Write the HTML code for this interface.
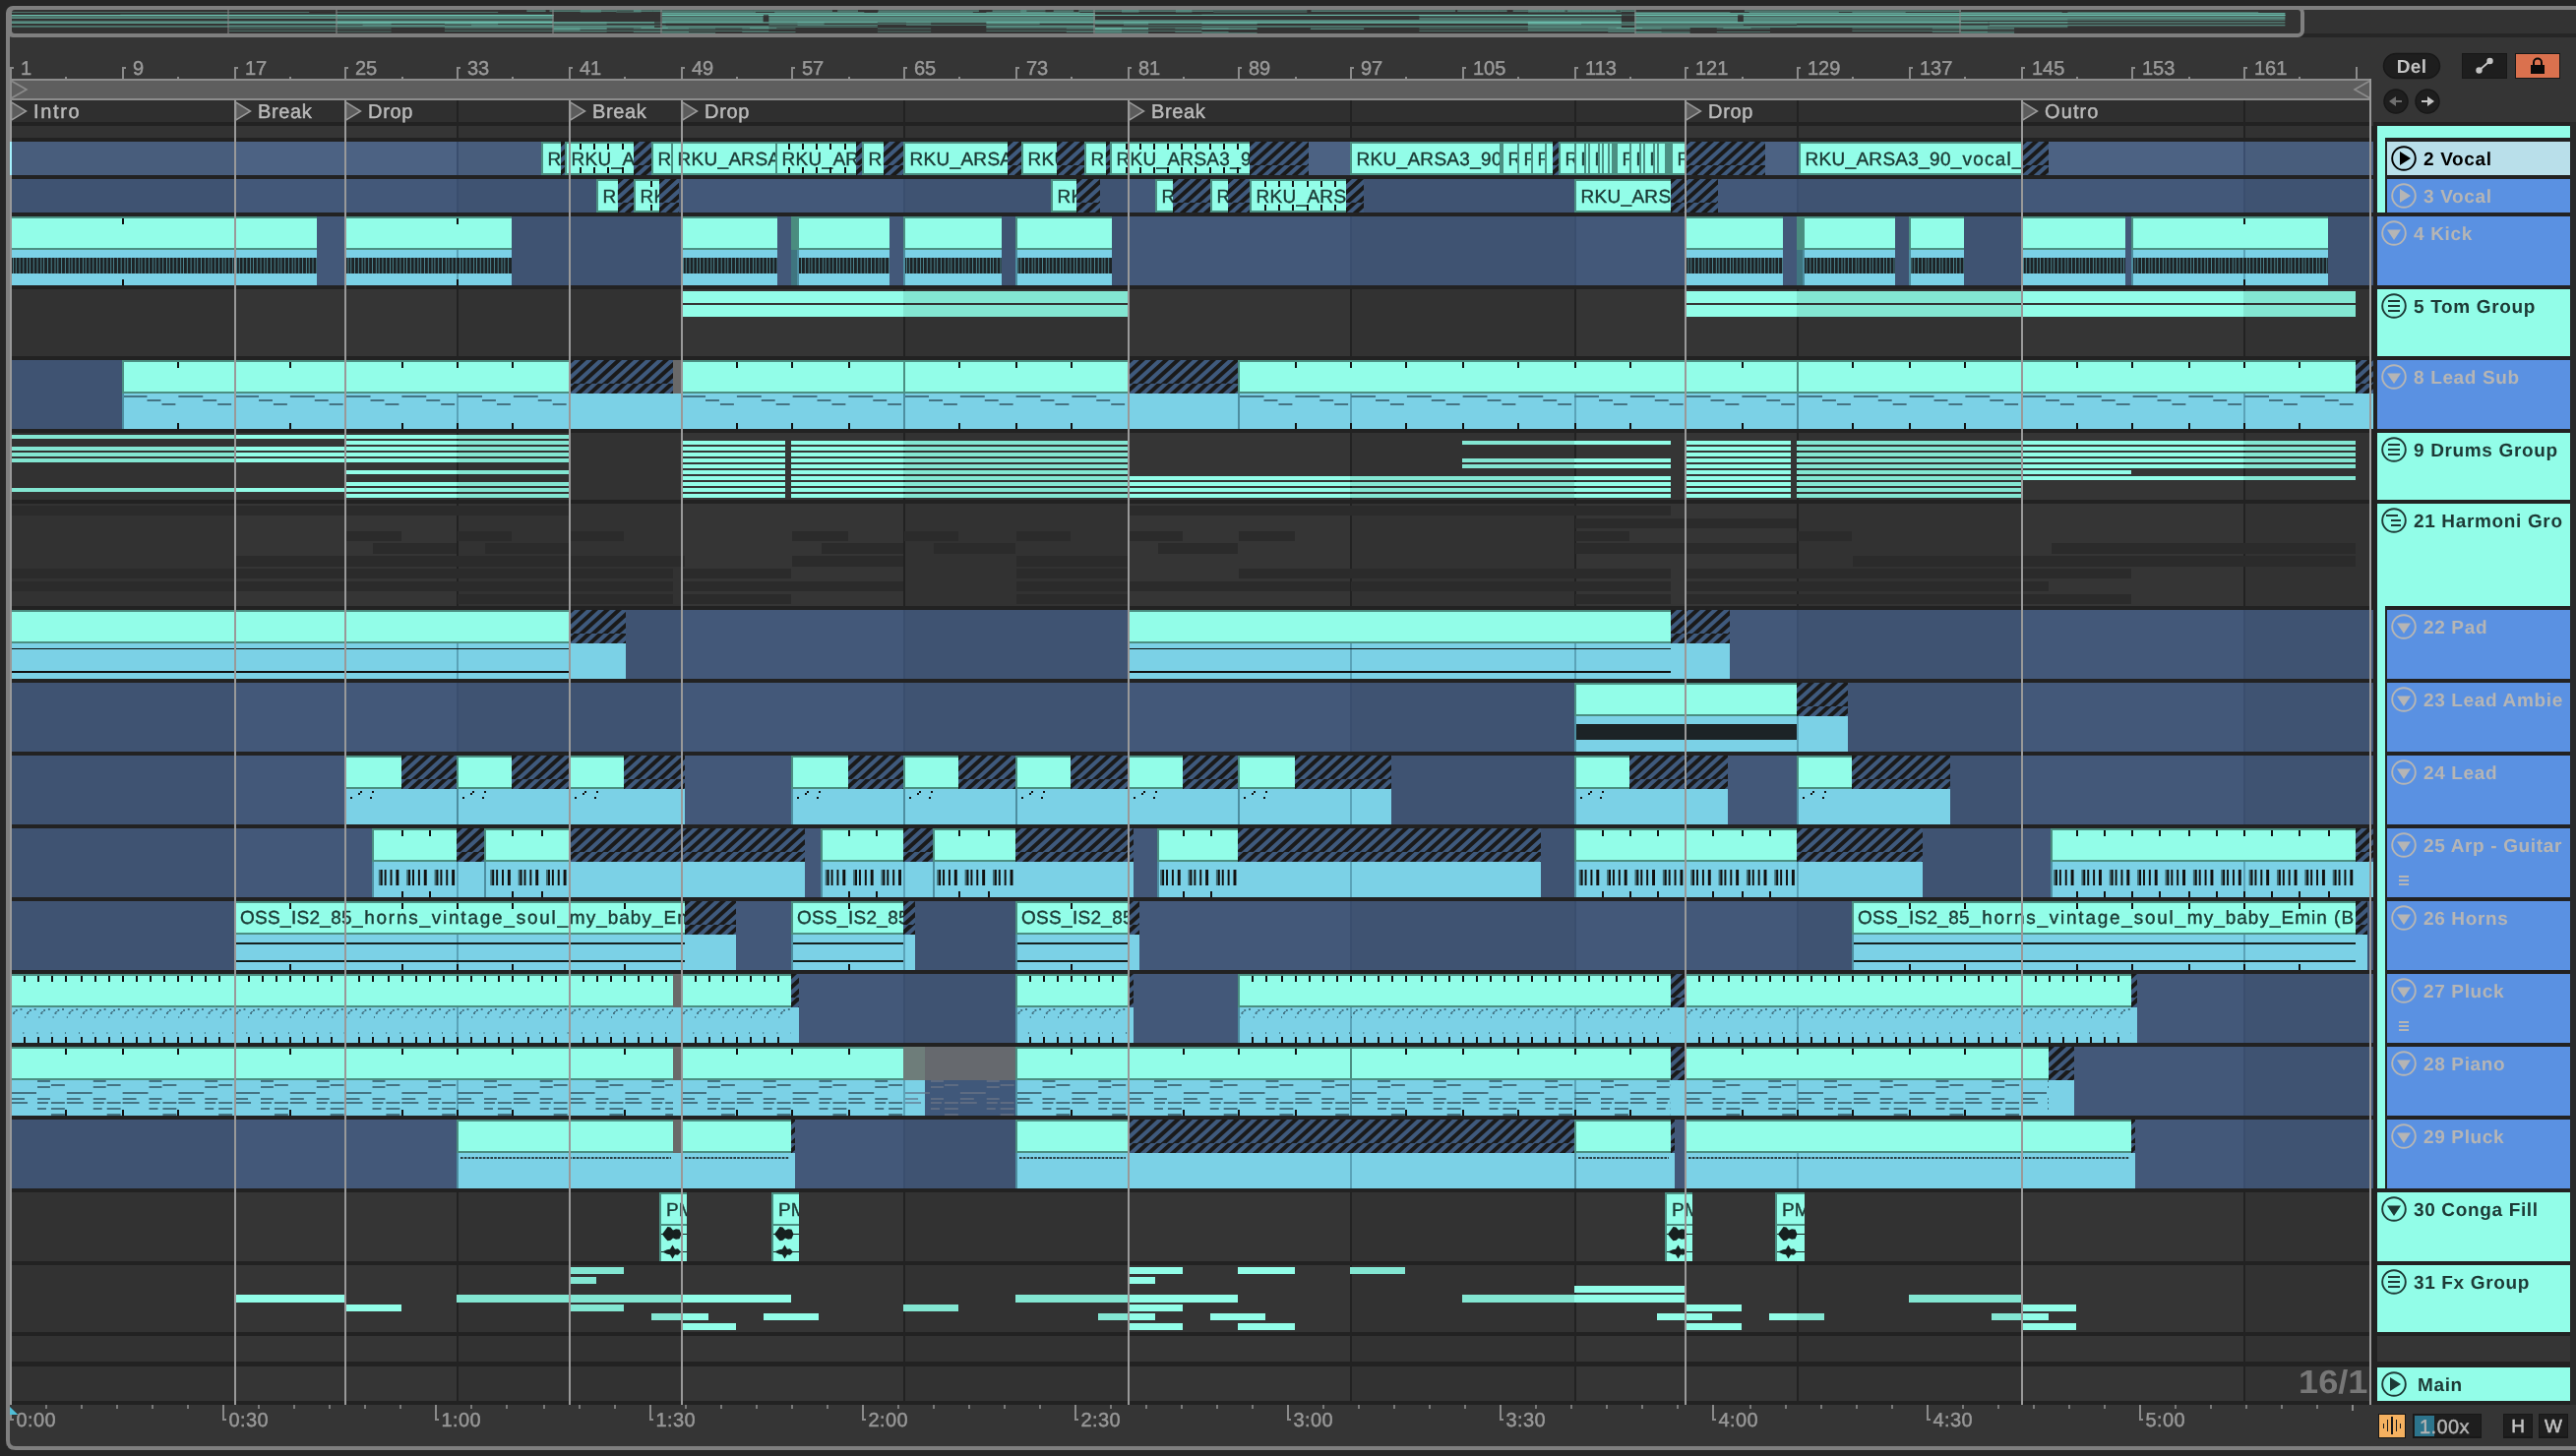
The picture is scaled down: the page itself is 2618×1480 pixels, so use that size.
<!DOCTYPE html><html><head><meta charset="utf-8"><title>Arrangement</title><style>html,body{margin:0;padding:0;background:#262626;overflow:hidden}svg{display:block;will-change:transform}rect:not(.a){shape-rendering:crispEdges}text{font-family:"Liberation Sans",sans-serif;white-space:pre}</style></head><body><svg xmlns="http://www.w3.org/2000/svg" width="2618" height="1480" viewBox="0 0 2618 1480" font-family="Liberation Sans, sans-serif" text-rendering="geometricPrecision"><defs><pattern id="hatch" width="12" height="34" patternUnits="userSpaceOnUse">
<rect width="12" height="34" fill="#3f5a7d"/><path d="M-12 0H-6L-32.18 24H-38.18ZM-6.3 24H-0.3000000000000007L-11.21 34H-17.21ZM0 0H6L-20.18 24H-26.18ZM5.7 24H11.7L0.79 34H-5.21ZM12 0H18L-8.18 24H-14.18ZM17.7 24H23.7L12.79 34H6.79ZM24 0H30L3.82 24H-2.18ZM29.7 24H35.7L24.79 34H18.79ZM36 0H42L15.82 24H9.82ZM41.7 24H47.7L36.79 34H30.79ZM48 0H54L27.82 24H21.82ZM53.7 24H59.7L48.79 34H42.79Z" fill="#1a1a1a"/></pattern><pattern id="kickp" x="10.124" y="262" width="14.18746" height="16" patternUnits="userSpaceOnUse"><rect width="14.18746" height="16" fill="#4c858f"/><rect x="0" y="0" width="2.5" height="16" fill="#1c2326"/><rect x="3.55" y="0" width="2.5" height="16" fill="#1c2326"/><rect x="7.09" y="0" width="2.5" height="16" fill="#1c2326"/><rect x="10.64" y="0" width="2.5" height="16" fill="#1c2326"/></pattern><pattern id="pluckp" x="10.124" y="1024" width="14.18746" height="36" patternUnits="userSpaceOnUse"><rect x="0.5" y="9" width="1.8" height="1.8" fill="#447484"/><rect x="2.5" y="5" width="1.8" height="1.8" fill="#447484"/><rect x="4" y="3.5" width="1.8" height="1.8" fill="#447484"/><rect x="5.5" y="2" width="1.8" height="1.8" fill="#447484"/><rect x="10.5" y="1" width="1.8" height="1.8" fill="#447484"/><rect x="13" y="25" width="2" height="2" fill="#447484"/></pattern><pattern id="pianop" x="10.124" y="1097" width="56.75" height="38" patternUnits="userSpaceOnUse"><rect x="28.0" y="1" width="13" height="1.8" fill="#447484"/><rect x="42.3" y="5" width="13.2" height="1.8" fill="#447484"/><rect x="28.0" y="7" width="13" height="1.8" fill="#447484"/><rect x="0.7" y="13" width="26.1" height="1.8" fill="#447484"/><rect x="0.7" y="19" width="13.9" height="1.8" fill="#447484"/><rect x="28.0" y="19" width="13" height="1.8" fill="#447484"/><rect x="0.7" y="23" width="17.7" height="1.8" fill="#447484"/><rect x="28.0" y="23" width="11.2" height="1.8" fill="#447484"/><rect x="42.3" y="23" width="13.2" height="1.8" fill="#447484"/><rect x="28.0" y="29" width="9" height="1.8" fill="#447484"/><rect x="42.3" y="29" width="13.2" height="1.8" fill="#447484"/><rect x="42.3" y="35" width="13.2" height="1.8" fill="#447484"/></pattern><pattern id="pianog" x="10.124" y="1097" width="56.75" height="38" patternUnits="userSpaceOnUse"><rect x="28.0" y="1" width="13" height="1.8" fill="#5d6b82"/><rect x="42.3" y="5" width="13.2" height="1.8" fill="#5d6b82"/><rect x="28.0" y="7" width="13" height="1.8" fill="#5d6b82"/><rect x="0.7" y="13" width="26.1" height="1.8" fill="#5d6b82"/><rect x="0.7" y="19" width="13.9" height="1.8" fill="#5d6b82"/><rect x="28.0" y="19" width="13" height="1.8" fill="#5d6b82"/><rect x="0.7" y="23" width="17.7" height="1.8" fill="#5d6b82"/><rect x="28.0" y="23" width="11.2" height="1.8" fill="#5d6b82"/><rect x="42.3" y="23" width="13.2" height="1.8" fill="#5d6b82"/><rect x="28.0" y="29" width="9" height="1.8" fill="#5d6b82"/><rect x="42.3" y="29" width="13.2" height="1.8" fill="#5d6b82"/><rect x="42.3" y="35" width="13.2" height="1.8" fill="#5d6b82"/></pattern><pattern id="lsp" x="10.124" y="400" width="56.75" height="36" patternUnits="userSpaceOnUse"><rect x="0.5" y="2.0" width="25.04" height="1.6" fill="#447484"/><rect x="26.25" y="6.2" width="13.48" height="1.6" fill="#447484"/><rect x="40.43" y="10.4" width="14.19" height="1.6" fill="#447484"/></pattern><pattern id="arpp" x="10.124" y="884" width="28.37" height="16" patternUnits="userSpaceOnUse"><rect x="5.9" y="0" width="1.7" height="16" fill="#3f6f78"/><rect x="7.6000000000000005" y="0" width="2" height="16" fill="#111"/><rect x="11.8" y="0" width="2.1" height="16" fill="#111"/><rect x="17.8" y="0" width="2.1" height="16" fill="#111"/><rect x="23.9" y="0" width="2.1" height="16" fill="#111"/></pattern><clipPath id="c1"><rect x="552" y="144" width="18" height="34"/></clipPath><clipPath id="c2"><rect x="576" y="144" width="68" height="34"/></clipPath><clipPath id="c3"><rect x="664" y="144" width="18" height="34"/></clipPath><clipPath id="c4"><rect x="684" y="144" width="104" height="34"/></clipPath><clipPath id="c5"><rect x="790" y="144" width="80" height="34"/></clipPath><clipPath id="c6"><rect x="878" y="144" width="20" height="34"/></clipPath><clipPath id="c7"><rect x="920" y="144" width="104" height="34"/></clipPath><clipPath id="c8"><rect x="1040" y="144" width="34" height="34"/></clipPath><clipPath id="c9"><rect x="1104" y="144" width="20" height="34"/></clipPath><clipPath id="c10"><rect x="1130" y="144" width="140" height="34"/></clipPath><clipPath id="c11"><rect x="1374" y="144" width="150" height="34"/></clipPath><clipPath id="c12"><rect x="1528" y="144" width="14" height="34"/></clipPath><clipPath id="c13"><rect x="1544" y="144" width="12" height="34"/></clipPath><clipPath id="c14"><rect x="1558" y="144" width="12" height="34"/></clipPath><clipPath id="c15"><rect x="1586" y="144" width="14" height="34"/></clipPath><clipPath id="c16"><rect x="1602" y="144" width="8" height="34"/></clipPath><clipPath id="c17"><rect x="1616" y="144" width="8" height="34"/></clipPath><clipPath id="c18"><rect x="1644" y="144" width="12" height="34"/></clipPath><clipPath id="c19"><rect x="1658" y="144" width="8" height="34"/></clipPath><clipPath id="c20"><rect x="1672" y="144" width="8" height="34"/></clipPath><clipPath id="c21"><rect x="1700" y="144" width="12" height="34"/></clipPath><clipPath id="c22"><rect x="1830" y="144" width="224" height="34"/></clipPath><clipPath id="c23"><rect x="608" y="182" width="20" height="34"/></clipPath><clipPath id="c24"><rect x="646" y="182" width="24" height="34"/></clipPath><clipPath id="c25"><rect x="1070" y="182" width="24" height="34"/></clipPath><clipPath id="c26"><rect x="1176" y="182" width="16" height="34"/></clipPath><clipPath id="c27"><rect x="1232" y="182" width="16" height="34"/></clipPath><clipPath id="c28"><rect x="1272" y="182" width="96" height="34"/></clipPath><clipPath id="c29"><rect x="1602" y="182" width="96" height="34"/></clipPath><clipPath id="c30"><rect x="240" y="916" width="456" height="34"/></clipPath><clipPath id="c31"><rect x="806" y="916" width="112" height="34"/></clipPath><clipPath id="c32"><rect x="1034" y="916" width="112" height="34"/></clipPath><clipPath id="c33"><rect x="1884" y="916" width="510" height="34"/></clipPath><clipPath id="c34"><rect x="672" y="1212" width="26" height="70"/></clipPath><clipPath id="c35"><rect x="786" y="1212" width="26" height="70"/></clipPath><clipPath id="c36"><rect x="1694" y="1212" width="26" height="70"/></clipPath><clipPath id="c37"><rect x="1806" y="1212" width="28" height="70"/></clipPath></defs><rect x="0" y="0" width="2618" height="1480" fill="#262626"/><rect x="10" y="34" width="2608" height="1436" fill="#353535"/><rect x="10" y="124" width="2402" height="1304" fill="#222222"/><rect x="10" y="128" width="2400" height="12" fill="#353535"/><rect x="10" y="144" width="2402" height="34" fill="#4c6283"/><rect x="10" y="182" width="2402" height="34" fill="#435879"/><rect x="10" y="220" width="2402" height="70" fill="#435879"/><rect x="10" y="294" width="2400" height="68" fill="#353535"/><rect x="10" y="366" width="2402" height="70" fill="#435879"/><rect x="10" y="440" width="2400" height="68" fill="#353535"/><rect x="10" y="512" width="2400" height="104" fill="#353535"/><rect x="10" y="620" width="2402" height="70" fill="#435879"/><rect x="10" y="694" width="2402" height="70" fill="#435879"/><rect x="10" y="768" width="2402" height="70" fill="#435879"/><rect x="10" y="842" width="2402" height="70" fill="#435879"/><rect x="10" y="916" width="2402" height="70" fill="#435879"/><rect x="10" y="990" width="2402" height="70" fill="#435879"/><rect x="10" y="1064" width="2402" height="70" fill="#435879"/><rect x="10" y="1138" width="2402" height="70" fill="#435879"/><rect x="10" y="1212" width="2400" height="70" fill="#353535"/><rect x="10" y="1286" width="2400" height="68" fill="#353535"/><rect x="10" y="1358" width="2400" height="26" fill="#353535"/><rect x="10" y="1389" width="2400" height="35" fill="#353535"/><rect x="10" y="128" width="228" height="1300" fill="#000" opacity="0.05"/><rect x="464" y="128" width="228" height="1300" fill="#000" opacity="0.05"/><rect x="918" y="128" width="228" height="1300" fill="#000" opacity="0.05"/><rect x="1372" y="128" width="228" height="1300" fill="#000" opacity="0.05"/><rect x="1826" y="128" width="228" height="1300" fill="#000" opacity="0.05"/><rect x="2280" y="128" width="130" height="1300" fill="#000" opacity="0.05"/><rect x="10" y="124" width="2402" height="4" fill="#222222"/><rect x="10" y="140" width="2402" height="4" fill="#222222"/><rect x="10" y="178" width="2402" height="4" fill="#222222"/><rect x="10" y="216" width="2402" height="4" fill="#222222"/><rect x="10" y="290" width="2402" height="4" fill="#222222"/><rect x="10" y="362" width="2402" height="4" fill="#222222"/><rect x="10" y="436" width="2402" height="4" fill="#222222"/><rect x="10" y="508" width="2402" height="4" fill="#222222"/><rect x="10" y="616" width="2402" height="4" fill="#222222"/><rect x="10" y="690" width="2402" height="4" fill="#222222"/><rect x="10" y="764" width="2402" height="4" fill="#222222"/><rect x="10" y="838" width="2402" height="4" fill="#222222"/><rect x="10" y="912" width="2402" height="4" fill="#222222"/><rect x="10" y="986" width="2402" height="4" fill="#222222"/><rect x="10" y="1060" width="2402" height="4" fill="#222222"/><rect x="10" y="1134" width="2402" height="4" fill="#222222"/><rect x="10" y="1208" width="2402" height="4" fill="#222222"/><rect x="10" y="1282" width="2402" height="4" fill="#222222"/><rect x="10" y="1354" width="2402" height="4" fill="#222222"/><rect x="10" y="1384" width="2402" height="5" fill="#222222"/><rect x="10" y="1424" width="2402" height="4" fill="#222222"/><rect x="464" y="128" width="2" height="12" fill="#222"/><rect x="464" y="144" width="2" height="34" fill="#3a4e6e"/><rect x="464" y="182" width="2" height="34" fill="#3a4e6e"/><rect x="464" y="220" width="2" height="70" fill="#3a4e6e"/><rect x="464" y="294" width="2" height="68" fill="#222"/><rect x="464" y="366" width="2" height="70" fill="#3a4e6e"/><rect x="464" y="440" width="2" height="68" fill="#222"/><rect x="464" y="512" width="2" height="104" fill="#222"/><rect x="464" y="620" width="2" height="70" fill="#3a4e6e"/><rect x="464" y="694" width="2" height="70" fill="#3a4e6e"/><rect x="464" y="768" width="2" height="70" fill="#3a4e6e"/><rect x="464" y="842" width="2" height="70" fill="#3a4e6e"/><rect x="464" y="916" width="2" height="70" fill="#3a4e6e"/><rect x="464" y="990" width="2" height="70" fill="#3a4e6e"/><rect x="464" y="1064" width="2" height="70" fill="#3a4e6e"/><rect x="464" y="1138" width="2" height="70" fill="#3a4e6e"/><rect x="464" y="1212" width="2" height="70" fill="#222"/><rect x="464" y="1286" width="2" height="68" fill="#222"/><rect x="464" y="1358" width="2" height="26" fill="#222"/><rect x="464" y="1389" width="2" height="35" fill="#222"/><rect x="918" y="128" width="2" height="12" fill="#222"/><rect x="918" y="144" width="2" height="34" fill="#3a4e6e"/><rect x="918" y="182" width="2" height="34" fill="#3a4e6e"/><rect x="918" y="220" width="2" height="70" fill="#3a4e6e"/><rect x="918" y="294" width="2" height="68" fill="#222"/><rect x="918" y="366" width="2" height="70" fill="#3a4e6e"/><rect x="918" y="440" width="2" height="68" fill="#222"/><rect x="918" y="512" width="2" height="104" fill="#222"/><rect x="918" y="620" width="2" height="70" fill="#3a4e6e"/><rect x="918" y="694" width="2" height="70" fill="#3a4e6e"/><rect x="918" y="768" width="2" height="70" fill="#3a4e6e"/><rect x="918" y="842" width="2" height="70" fill="#3a4e6e"/><rect x="918" y="916" width="2" height="70" fill="#3a4e6e"/><rect x="918" y="990" width="2" height="70" fill="#3a4e6e"/><rect x="918" y="1064" width="2" height="70" fill="#3a4e6e"/><rect x="918" y="1138" width="2" height="70" fill="#3a4e6e"/><rect x="918" y="1212" width="2" height="70" fill="#222"/><rect x="918" y="1286" width="2" height="68" fill="#222"/><rect x="918" y="1358" width="2" height="26" fill="#222"/><rect x="918" y="1389" width="2" height="35" fill="#222"/><rect x="1372" y="128" width="2" height="12" fill="#222"/><rect x="1372" y="144" width="2" height="34" fill="#3a4e6e"/><rect x="1372" y="182" width="2" height="34" fill="#3a4e6e"/><rect x="1372" y="220" width="2" height="70" fill="#3a4e6e"/><rect x="1372" y="294" width="2" height="68" fill="#222"/><rect x="1372" y="366" width="2" height="70" fill="#3a4e6e"/><rect x="1372" y="440" width="2" height="68" fill="#222"/><rect x="1372" y="512" width="2" height="104" fill="#222"/><rect x="1372" y="620" width="2" height="70" fill="#3a4e6e"/><rect x="1372" y="694" width="2" height="70" fill="#3a4e6e"/><rect x="1372" y="768" width="2" height="70" fill="#3a4e6e"/><rect x="1372" y="842" width="2" height="70" fill="#3a4e6e"/><rect x="1372" y="916" width="2" height="70" fill="#3a4e6e"/><rect x="1372" y="990" width="2" height="70" fill="#3a4e6e"/><rect x="1372" y="1064" width="2" height="70" fill="#3a4e6e"/><rect x="1372" y="1138" width="2" height="70" fill="#3a4e6e"/><rect x="1372" y="1212" width="2" height="70" fill="#222"/><rect x="1372" y="1286" width="2" height="68" fill="#222"/><rect x="1372" y="1358" width="2" height="26" fill="#222"/><rect x="1372" y="1389" width="2" height="35" fill="#222"/><rect x="1600" y="128" width="2" height="12" fill="#222"/><rect x="1600" y="144" width="2" height="34" fill="#3a4e6e"/><rect x="1600" y="182" width="2" height="34" fill="#3a4e6e"/><rect x="1600" y="220" width="2" height="70" fill="#3a4e6e"/><rect x="1600" y="294" width="2" height="68" fill="#222"/><rect x="1600" y="366" width="2" height="70" fill="#3a4e6e"/><rect x="1600" y="440" width="2" height="68" fill="#222"/><rect x="1600" y="512" width="2" height="104" fill="#222"/><rect x="1600" y="620" width="2" height="70" fill="#3a4e6e"/><rect x="1600" y="694" width="2" height="70" fill="#3a4e6e"/><rect x="1600" y="768" width="2" height="70" fill="#3a4e6e"/><rect x="1600" y="842" width="2" height="70" fill="#3a4e6e"/><rect x="1600" y="916" width="2" height="70" fill="#3a4e6e"/><rect x="1600" y="990" width="2" height="70" fill="#3a4e6e"/><rect x="1600" y="1064" width="2" height="70" fill="#3a4e6e"/><rect x="1600" y="1138" width="2" height="70" fill="#3a4e6e"/><rect x="1600" y="1212" width="2" height="70" fill="#222"/><rect x="1600" y="1286" width="2" height="68" fill="#222"/><rect x="1600" y="1358" width="2" height="26" fill="#222"/><rect x="1600" y="1389" width="2" height="35" fill="#222"/><rect x="1826" y="128" width="2" height="12" fill="#222"/><rect x="1826" y="144" width="2" height="34" fill="#3a4e6e"/><rect x="1826" y="182" width="2" height="34" fill="#3a4e6e"/><rect x="1826" y="220" width="2" height="70" fill="#3a4e6e"/><rect x="1826" y="294" width="2" height="68" fill="#222"/><rect x="1826" y="366" width="2" height="70" fill="#3a4e6e"/><rect x="1826" y="440" width="2" height="68" fill="#222"/><rect x="1826" y="512" width="2" height="104" fill="#222"/><rect x="1826" y="620" width="2" height="70" fill="#3a4e6e"/><rect x="1826" y="694" width="2" height="70" fill="#3a4e6e"/><rect x="1826" y="768" width="2" height="70" fill="#3a4e6e"/><rect x="1826" y="842" width="2" height="70" fill="#3a4e6e"/><rect x="1826" y="916" width="2" height="70" fill="#3a4e6e"/><rect x="1826" y="990" width="2" height="70" fill="#3a4e6e"/><rect x="1826" y="1064" width="2" height="70" fill="#3a4e6e"/><rect x="1826" y="1138" width="2" height="70" fill="#3a4e6e"/><rect x="1826" y="1212" width="2" height="70" fill="#222"/><rect x="1826" y="1286" width="2" height="68" fill="#222"/><rect x="1826" y="1358" width="2" height="26" fill="#222"/><rect x="1826" y="1389" width="2" height="35" fill="#222"/><rect x="2280" y="128" width="2" height="12" fill="#222"/><rect x="2280" y="144" width="2" height="34" fill="#3a4e6e"/><rect x="2280" y="182" width="2" height="34" fill="#3a4e6e"/><rect x="2280" y="220" width="2" height="70" fill="#3a4e6e"/><rect x="2280" y="294" width="2" height="68" fill="#222"/><rect x="2280" y="366" width="2" height="70" fill="#3a4e6e"/><rect x="2280" y="440" width="2" height="68" fill="#222"/><rect x="2280" y="512" width="2" height="104" fill="#222"/><rect x="2280" y="620" width="2" height="70" fill="#3a4e6e"/><rect x="2280" y="694" width="2" height="70" fill="#3a4e6e"/><rect x="2280" y="768" width="2" height="70" fill="#3a4e6e"/><rect x="2280" y="842" width="2" height="70" fill="#3a4e6e"/><rect x="2280" y="916" width="2" height="70" fill="#3a4e6e"/><rect x="2280" y="990" width="2" height="70" fill="#3a4e6e"/><rect x="2280" y="1064" width="2" height="70" fill="#3a4e6e"/><rect x="2280" y="1138" width="2" height="70" fill="#3a4e6e"/><rect x="2280" y="1212" width="2" height="70" fill="#222"/><rect x="2280" y="1286" width="2" height="68" fill="#222"/><rect x="2280" y="1358" width="2" height="26" fill="#222"/><rect x="2280" y="1389" width="2" height="35" fill="#222"/><rect x="692" y="296" width="454" height="12" fill="#92fde8"/><rect x="918" y="296" width="228" height="12" fill="#83e6d2"/><rect x="1712" y="296" width="682" height="12" fill="#92fde8"/><rect x="1826" y="296" width="228" height="12" fill="#83e6d2"/><rect x="2280" y="296" width="114" height="12" fill="#83e6d2"/><rect x="692" y="310" width="454" height="12" fill="#92fde8"/><rect x="918" y="310" width="228" height="12" fill="#83e6d2"/><rect x="1712" y="310" width="682" height="12" fill="#92fde8"/><rect x="1826" y="310" width="228" height="12" fill="#83e6d2"/><rect x="2280" y="310" width="114" height="12" fill="#83e6d2"/><rect x="10" y="442" width="340" height="4" fill="#92fde8"/><rect x="10" y="442" width="228" height="4" fill="#83e6d2"/><rect x="350" y="442" width="228" height="4" fill="#92fde8"/><rect x="464" y="442" width="114" height="4" fill="#83e6d2"/><rect x="350" y="448" width="228" height="4" fill="#92fde8"/><rect x="464" y="448" width="114" height="4" fill="#83e6d2"/><rect x="692" y="448" width="106" height="4" fill="#92fde8"/><rect x="804" y="448" width="342" height="4" fill="#92fde8"/><rect x="918" y="448" width="228" height="4" fill="#83e6d2"/><rect x="1486" y="448" width="212" height="4" fill="#92fde8"/><rect x="1486" y="448" width="114" height="4" fill="#83e6d2"/><rect x="1712" y="448" width="108" height="4" fill="#92fde8"/><rect x="1826" y="448" width="228" height="4" fill="#92fde8"/><rect x="1826" y="448" width="228" height="4" fill="#83e6d2"/><rect x="2054" y="448" width="340" height="4" fill="#92fde8"/><rect x="2280" y="448" width="114" height="4" fill="#83e6d2"/><rect x="10" y="454" width="340" height="4" fill="#92fde8"/><rect x="10" y="454" width="228" height="4" fill="#83e6d2"/><rect x="350" y="454" width="228" height="4" fill="#92fde8"/><rect x="464" y="454" width="114" height="4" fill="#83e6d2"/><rect x="692" y="454" width="106" height="4" fill="#92fde8"/><rect x="804" y="454" width="342" height="4" fill="#92fde8"/><rect x="918" y="454" width="228" height="4" fill="#83e6d2"/><rect x="1712" y="454" width="108" height="4" fill="#92fde8"/><rect x="1826" y="454" width="228" height="4" fill="#92fde8"/><rect x="1826" y="454" width="228" height="4" fill="#83e6d2"/><rect x="2054" y="454" width="340" height="4" fill="#92fde8"/><rect x="2280" y="454" width="114" height="4" fill="#83e6d2"/><rect x="10" y="460" width="340" height="4" fill="#92fde8"/><rect x="10" y="460" width="228" height="4" fill="#83e6d2"/><rect x="350" y="460" width="228" height="4" fill="#92fde8"/><rect x="464" y="460" width="114" height="4" fill="#83e6d2"/><rect x="692" y="460" width="106" height="4" fill="#92fde8"/><rect x="804" y="460" width="342" height="4" fill="#92fde8"/><rect x="918" y="460" width="228" height="4" fill="#83e6d2"/><rect x="1712" y="460" width="108" height="4" fill="#92fde8"/><rect x="1826" y="460" width="228" height="4" fill="#92fde8"/><rect x="1826" y="460" width="228" height="4" fill="#83e6d2"/><rect x="2054" y="460" width="340" height="4" fill="#92fde8"/><rect x="2280" y="460" width="114" height="4" fill="#83e6d2"/><rect x="10" y="466" width="340" height="4" fill="#92fde8"/><rect x="10" y="466" width="228" height="4" fill="#83e6d2"/><rect x="350" y="466" width="228" height="4" fill="#92fde8"/><rect x="464" y="466" width="114" height="4" fill="#83e6d2"/><rect x="692" y="466" width="106" height="4" fill="#92fde8"/><rect x="804" y="466" width="342" height="4" fill="#92fde8"/><rect x="918" y="466" width="228" height="4" fill="#83e6d2"/><rect x="1486" y="466" width="212" height="4" fill="#92fde8"/><rect x="1486" y="466" width="114" height="4" fill="#83e6d2"/><rect x="1712" y="466" width="108" height="4" fill="#92fde8"/><rect x="1826" y="466" width="228" height="4" fill="#92fde8"/><rect x="1826" y="466" width="228" height="4" fill="#83e6d2"/><rect x="2054" y="466" width="340" height="4" fill="#92fde8"/><rect x="2280" y="466" width="114" height="4" fill="#83e6d2"/><rect x="692" y="472" width="106" height="4" fill="#92fde8"/><rect x="804" y="472" width="342" height="4" fill="#92fde8"/><rect x="918" y="472" width="228" height="4" fill="#83e6d2"/><rect x="1486" y="472" width="212" height="4" fill="#92fde8"/><rect x="1486" y="472" width="114" height="4" fill="#83e6d2"/><rect x="1712" y="472" width="108" height="4" fill="#92fde8"/><rect x="1826" y="472" width="228" height="4" fill="#92fde8"/><rect x="1826" y="472" width="228" height="4" fill="#83e6d2"/><rect x="2054" y="472" width="340" height="4" fill="#92fde8"/><rect x="2280" y="472" width="114" height="4" fill="#83e6d2"/><rect x="350" y="478" width="228" height="4" fill="#92fde8"/><rect x="464" y="478" width="114" height="4" fill="#83e6d2"/><rect x="692" y="478" width="106" height="4" fill="#92fde8"/><rect x="804" y="478" width="342" height="4" fill="#92fde8"/><rect x="918" y="478" width="228" height="4" fill="#83e6d2"/><rect x="1712" y="478" width="108" height="4" fill="#92fde8"/><rect x="1826" y="478" width="228" height="4" fill="#92fde8"/><rect x="1826" y="478" width="228" height="4" fill="#83e6d2"/><rect x="2054" y="478" width="112" height="4" fill="#92fde8"/><rect x="692" y="484" width="106" height="4" fill="#92fde8"/><rect x="804" y="484" width="342" height="4" fill="#92fde8"/><rect x="918" y="484" width="228" height="4" fill="#83e6d2"/><rect x="1146" y="484" width="552" height="4" fill="#92fde8"/><rect x="1372" y="484" width="228" height="4" fill="#83e6d2"/><rect x="1712" y="484" width="108" height="4" fill="#92fde8"/><rect x="1826" y="484" width="228" height="4" fill="#92fde8"/><rect x="1826" y="484" width="228" height="4" fill="#83e6d2"/><rect x="2054" y="484" width="340" height="4" fill="#92fde8"/><rect x="2280" y="484" width="114" height="4" fill="#83e6d2"/><rect x="350" y="490" width="228" height="4" fill="#92fde8"/><rect x="464" y="490" width="114" height="4" fill="#83e6d2"/><rect x="692" y="490" width="106" height="4" fill="#92fde8"/><rect x="804" y="490" width="342" height="4" fill="#92fde8"/><rect x="918" y="490" width="228" height="4" fill="#83e6d2"/><rect x="1146" y="490" width="552" height="4" fill="#92fde8"/><rect x="1372" y="490" width="228" height="4" fill="#83e6d2"/><rect x="1712" y="490" width="108" height="4" fill="#92fde8"/><rect x="1826" y="490" width="228" height="4" fill="#92fde8"/><rect x="1826" y="490" width="228" height="4" fill="#83e6d2"/><rect x="10" y="496" width="340" height="4" fill="#92fde8"/><rect x="10" y="496" width="228" height="4" fill="#83e6d2"/><rect x="350" y="496" width="228" height="4" fill="#92fde8"/><rect x="464" y="496" width="114" height="4" fill="#83e6d2"/><rect x="692" y="496" width="106" height="4" fill="#92fde8"/><rect x="804" y="496" width="342" height="4" fill="#92fde8"/><rect x="918" y="496" width="228" height="4" fill="#83e6d2"/><rect x="1146" y="496" width="552" height="4" fill="#92fde8"/><rect x="1372" y="496" width="228" height="4" fill="#83e6d2"/><rect x="1712" y="496" width="108" height="4" fill="#92fde8"/><rect x="1826" y="496" width="228" height="4" fill="#92fde8"/><rect x="1826" y="496" width="228" height="4" fill="#83e6d2"/><rect x="350" y="502" width="228" height="4" fill="#92fde8"/><rect x="464" y="502" width="114" height="4" fill="#83e6d2"/><rect x="692" y="502" width="106" height="4" fill="#92fde8"/><rect x="804" y="502" width="342" height="4" fill="#92fde8"/><rect x="918" y="502" width="228" height="4" fill="#83e6d2"/><rect x="1146" y="502" width="552" height="4" fill="#92fde8"/><rect x="1372" y="502" width="228" height="4" fill="#83e6d2"/><rect x="1712" y="502" width="108" height="4" fill="#92fde8"/><rect x="1826" y="502" width="228" height="4" fill="#92fde8"/><rect x="1826" y="502" width="228" height="4" fill="#83e6d2"/><rect x="578" y="1288.2" width="56" height="7.2" fill="#92fde8"/><rect x="578" y="1288.2" width="56" height="7.2" fill="#83e6d2"/><rect x="1146" y="1288.2" width="56" height="7.2" fill="#92fde8"/><rect x="1258" y="1288.2" width="58" height="7.2" fill="#92fde8"/><rect x="1372" y="1288.2" width="56" height="7.2" fill="#92fde8"/><rect x="1372" y="1288.2" width="56" height="7.2" fill="#83e6d2"/><rect x="578" y="1297.6" width="28" height="7.2" fill="#92fde8"/><rect x="578" y="1297.6" width="28" height="7.2" fill="#83e6d2"/><rect x="1146" y="1297.6" width="28" height="7.2" fill="#92fde8"/><rect x="1600" y="1307" width="112" height="7.2" fill="#92fde8"/><rect x="238" y="1316.4" width="112" height="7.2" fill="#92fde8"/><rect x="464" y="1316.4" width="340" height="7.2" fill="#92fde8"/><rect x="464" y="1316.4" width="228" height="7.2" fill="#83e6d2"/><rect x="1032" y="1316.4" width="226" height="7.2" fill="#92fde8"/><rect x="1032" y="1316.4" width="114" height="7.2" fill="#83e6d2"/><rect x="1486" y="1316.4" width="226" height="7.2" fill="#92fde8"/><rect x="1486" y="1316.4" width="114" height="7.2" fill="#83e6d2"/><rect x="1940" y="1316.4" width="114" height="7.2" fill="#92fde8"/><rect x="1940" y="1316.4" width="114" height="7.2" fill="#83e6d2"/><rect x="350" y="1325.8" width="58" height="7.2" fill="#92fde8"/><rect x="578" y="1325.8" width="56" height="7.2" fill="#92fde8"/><rect x="578" y="1325.8" width="56" height="7.2" fill="#83e6d2"/><rect x="918" y="1325.8" width="56" height="7.2" fill="#92fde8"/><rect x="918" y="1325.8" width="56" height="7.2" fill="#83e6d2"/><rect x="1146" y="1325.8" width="56" height="7.2" fill="#92fde8"/><rect x="1712" y="1325.8" width="58" height="7.2" fill="#92fde8"/><rect x="2054" y="1325.8" width="56" height="7.2" fill="#92fde8"/><rect x="662" y="1335.2" width="58" height="7.2" fill="#92fde8"/><rect x="662" y="1335.2" width="30" height="7.2" fill="#83e6d2"/><rect x="776" y="1335.2" width="56" height="7.2" fill="#92fde8"/><rect x="1116" y="1335.2" width="58" height="7.2" fill="#92fde8"/><rect x="1116" y="1335.2" width="30" height="7.2" fill="#83e6d2"/><rect x="1230" y="1335.2" width="56" height="7.2" fill="#92fde8"/><rect x="1684" y="1335.2" width="56" height="7.2" fill="#92fde8"/><rect x="1798" y="1335.2" width="56" height="7.2" fill="#92fde8"/><rect x="1826" y="1335.2" width="28" height="7.2" fill="#83e6d2"/><rect x="2024" y="1335.2" width="58" height="7.2" fill="#92fde8"/><rect x="2024" y="1335.2" width="30" height="7.2" fill="#83e6d2"/><rect x="692" y="1344.6" width="56" height="7.2" fill="#92fde8"/><rect x="1146" y="1344.6" width="56" height="7.2" fill="#92fde8"/><rect x="1258" y="1344.6" width="58" height="7.2" fill="#92fde8"/><rect x="1712" y="1344.6" width="58" height="7.2" fill="#92fde8"/><rect x="2054" y="1344.6" width="56" height="7.2" fill="#92fde8"/><rect x="11" y="514" width="567" height="10.3" fill="#2b2b2b"/><rect x="1147" y="514" width="551" height="10.3" fill="#2b2b2b"/><rect x="1601" y="526.8" width="225" height="10.3" fill="#2b2b2b"/><rect x="351" y="539.6" width="57" height="10.3" fill="#2b2b2b"/><rect x="465" y="539.6" width="55" height="10.3" fill="#2b2b2b"/><rect x="579" y="539.6" width="55" height="10.3" fill="#2b2b2b"/><rect x="805" y="539.6" width="57" height="10.3" fill="#2b2b2b"/><rect x="919" y="539.6" width="55" height="10.3" fill="#2b2b2b"/><rect x="1033" y="539.6" width="55" height="10.3" fill="#2b2b2b"/><rect x="1147" y="539.6" width="55" height="10.3" fill="#2b2b2b"/><rect x="1259" y="539.6" width="57" height="10.3" fill="#2b2b2b"/><rect x="1601" y="539.6" width="55" height="10.3" fill="#2b2b2b"/><rect x="1827" y="539.6" width="55" height="10.3" fill="#2b2b2b"/><rect x="379" y="552.4" width="85" height="10.3" fill="#2b2b2b"/><rect x="493" y="552.4" width="85" height="10.3" fill="#2b2b2b"/><rect x="835" y="552.4" width="83" height="10.3" fill="#2b2b2b"/><rect x="949" y="552.4" width="83" height="10.3" fill="#2b2b2b"/><rect x="1177" y="552.4" width="81" height="10.3" fill="#2b2b2b"/><rect x="1601" y="552.4" width="225" height="10.3" fill="#2b2b2b"/><rect x="2085" y="552.4" width="309" height="10.3" fill="#2b2b2b"/><rect x="239" y="565.2" width="457" height="10.3" fill="#2b2b2b"/><rect x="805" y="565.2" width="113" height="10.3" fill="#2b2b2b"/><rect x="1033" y="565.2" width="113" height="10.3" fill="#2b2b2b"/><rect x="1883" y="565.2" width="511" height="10.3" fill="#2b2b2b"/><rect x="11" y="578" width="673" height="10.3" fill="#2b2b2b"/><rect x="693" y="578" width="111" height="10.3" fill="#2b2b2b"/><rect x="1033" y="578" width="113" height="10.3" fill="#2b2b2b"/><rect x="1259" y="578" width="439" height="10.3" fill="#2b2b2b"/><rect x="1713" y="578" width="453" height="10.3" fill="#2b2b2b"/><rect x="11" y="590.8" width="673" height="10.3" fill="#2b2b2b"/><rect x="693" y="590.8" width="225" height="10.3" fill="#2b2b2b"/><rect x="1033" y="590.8" width="339" height="10.3" fill="#2b2b2b"/><rect x="1373" y="590.8" width="325" height="10.3" fill="#2b2b2b"/><rect x="1713" y="590.8" width="369" height="10.3" fill="#2b2b2b"/><rect x="465" y="603.6" width="219" height="10.3" fill="#2b2b2b"/><rect x="693" y="603.6" width="111" height="10.3" fill="#2b2b2b"/><rect x="1033" y="603.6" width="113" height="10.3" fill="#2b2b2b"/><rect x="1601" y="603.6" width="97" height="10.3" fill="#2b2b2b"/><rect x="1713" y="603.6" width="453" height="10.3" fill="#2b2b2b"/><rect x="10" y="254" width="312" height="36" fill="#7bd1e6"/><rect x="350" y="254" width="170" height="36" fill="#7bd1e6"/><rect x="692" y="254" width="98" height="36" fill="#7bd1e6"/><rect x="810" y="254" width="94" height="36" fill="#7bd1e6"/><rect x="918" y="254" width="100" height="36" fill="#7bd1e6"/><rect x="1032" y="254" width="98" height="36" fill="#7bd1e6"/><rect x="1712" y="254" width="100" height="36" fill="#7bd1e6"/><rect x="1832" y="254" width="94" height="36" fill="#7bd1e6"/><rect x="1940" y="254" width="56" height="36" fill="#7bd1e6"/><rect x="2054" y="254" width="106" height="36" fill="#7bd1e6"/><rect x="2166" y="254" width="200" height="36" fill="#7bd1e6"/><rect x="464" y="254" width="2" height="36" fill="#5aa3b8"/><rect x="2280" y="254" width="2" height="36" fill="#5aa3b8"/><rect x="804" y="220" width="6" height="34" fill="#4a8c7f"/><rect x="804" y="254" width="6" height="36" fill="#3f7580"/><rect x="1826" y="220" width="6" height="34" fill="#4a8c7f"/><rect x="1826" y="254" width="6" height="36" fill="#3f7580"/><rect x="10" y="262" width="312" height="16" fill="url(#kickp)"/><rect x="350" y="262" width="170" height="16" fill="url(#kickp)"/><rect x="692" y="262" width="98" height="16" fill="url(#kickp)"/><rect x="810" y="262" width="94" height="16" fill="url(#kickp)"/><rect x="918" y="262" width="100" height="16" fill="url(#kickp)"/><rect x="1032" y="262" width="98" height="16" fill="url(#kickp)"/><rect x="1712" y="262" width="100" height="16" fill="url(#kickp)"/><rect x="1832" y="262" width="94" height="16" fill="url(#kickp)"/><rect x="1940" y="262" width="56" height="16" fill="url(#kickp)"/><rect x="2054" y="262" width="106" height="16" fill="url(#kickp)"/><rect x="2166" y="262" width="200" height="16" fill="url(#kickp)"/><rect x="10" y="220" width="312" height="34" fill="#4b8f82"/><rect x="12" y="222" width="310" height="30" fill="#92fde8"/><rect x="10" y="254" width="2" height="36" fill="#4d8ea0"/><rect x="124" y="222" width="2" height="6" fill="#111"/><rect x="124" y="284" width="2" height="6" fill="#111"/><rect x="350" y="220" width="170" height="34" fill="#4b8f82"/><rect x="352" y="222" width="168" height="30" fill="#92fde8"/><rect x="350" y="254" width="2" height="36" fill="#4d8ea0"/><rect x="464" y="222" width="2" height="6" fill="#111"/><rect x="464" y="284" width="2" height="6" fill="#111"/><rect x="692" y="220" width="98" height="34" fill="#4b8f82"/><rect x="694" y="222" width="96" height="30" fill="#92fde8"/><rect x="692" y="254" width="2" height="36" fill="#4d8ea0"/><rect x="810" y="220" width="94" height="34" fill="#4b8f82"/><rect x="812" y="222" width="92" height="30" fill="#92fde8"/><rect x="810" y="254" width="2" height="36" fill="#4d8ea0"/><rect x="918" y="220" width="100" height="34" fill="#4b8f82"/><rect x="920" y="222" width="98" height="30" fill="#92fde8"/><rect x="918" y="254" width="2" height="36" fill="#4d8ea0"/><rect x="1032" y="220" width="98" height="34" fill="#4b8f82"/><rect x="1034" y="222" width="96" height="30" fill="#92fde8"/><rect x="1032" y="254" width="2" height="36" fill="#4d8ea0"/><rect x="1712" y="220" width="100" height="34" fill="#4b8f82"/><rect x="1714" y="222" width="98" height="30" fill="#92fde8"/><rect x="1712" y="254" width="2" height="36" fill="#4d8ea0"/><rect x="1832" y="220" width="94" height="34" fill="#4b8f82"/><rect x="1834" y="222" width="92" height="30" fill="#92fde8"/><rect x="1832" y="254" width="2" height="36" fill="#4d8ea0"/><rect x="1940" y="220" width="56" height="34" fill="#4b8f82"/><rect x="1942" y="222" width="54" height="30" fill="#92fde8"/><rect x="1940" y="254" width="2" height="36" fill="#4d8ea0"/><rect x="2054" y="220" width="106" height="34" fill="#4b8f82"/><rect x="2056" y="222" width="104" height="30" fill="#92fde8"/><rect x="2054" y="254" width="2" height="36" fill="#4d8ea0"/><rect x="2166" y="220" width="200" height="34" fill="#4b8f82"/><rect x="2168" y="222" width="198" height="30" fill="#92fde8"/><rect x="2166" y="254" width="2" height="36" fill="#4d8ea0"/><rect x="2280" y="222" width="2" height="6" fill="#111"/><rect x="2280" y="284" width="2" height="6" fill="#111"/><rect x="124" y="400" width="2288" height="36" fill="#7bd1e6"/><rect x="464" y="400" width="2" height="36" fill="#5aa3b8"/><rect x="918" y="400" width="2" height="36" fill="#5aa3b8"/><rect x="1372" y="400" width="2" height="36" fill="#5aa3b8"/><rect x="1600" y="400" width="2" height="36" fill="#5aa3b8"/><rect x="1826" y="400" width="2" height="36" fill="#5aa3b8"/><rect x="2280" y="400" width="2" height="36" fill="#5aa3b8"/><svg x="578" y="366" width="106" height="34"><rect width="106" height="34" fill="url(#hatch)"/></svg><svg x="1146" y="366" width="112" height="34"><rect width="112" height="34" fill="url(#hatch)"/></svg><svg x="2394" y="366" width="18" height="34"><rect width="18" height="34" fill="url(#hatch)"/></svg><rect x="684" y="366" width="8" height="34" fill="#696969"/><rect x="126" y="400" width="452" height="36" fill="url(#lsp)"/><rect x="694" y="400" width="224" height="36" fill="url(#lsp)"/><rect x="920" y="400" width="226" height="36" fill="url(#lsp)"/><rect x="1260" y="400" width="566" height="36" fill="url(#lsp)"/><rect x="1828" y="400" width="566" height="36" fill="url(#lsp)"/><rect x="124" y="366" width="454" height="34" fill="#4b8f82"/><rect x="126" y="368" width="452" height="30" fill="#92fde8"/><rect x="124" y="400" width="2" height="36" fill="#4d8ea0"/><rect x="180" y="368" width="2" height="6" fill="#111"/><rect x="180" y="430" width="2" height="6" fill="#111"/><rect x="294" y="368" width="2" height="6" fill="#111"/><rect x="294" y="430" width="2" height="6" fill="#111"/><rect x="408" y="368" width="2" height="6" fill="#111"/><rect x="408" y="430" width="2" height="6" fill="#111"/><rect x="464" y="368" width="2" height="6" fill="#111"/><rect x="464" y="430" width="2" height="6" fill="#111"/><rect x="520" y="368" width="2" height="6" fill="#111"/><rect x="520" y="430" width="2" height="6" fill="#111"/><rect x="692" y="366" width="226" height="34" fill="#4b8f82"/><rect x="694" y="368" width="224" height="30" fill="#92fde8"/><rect x="692" y="400" width="2" height="36" fill="#4d8ea0"/><rect x="748" y="368" width="2" height="6" fill="#111"/><rect x="748" y="430" width="2" height="6" fill="#111"/><rect x="804" y="368" width="2" height="6" fill="#111"/><rect x="804" y="430" width="2" height="6" fill="#111"/><rect x="862" y="368" width="2" height="6" fill="#111"/><rect x="862" y="430" width="2" height="6" fill="#111"/><rect x="918" y="366" width="228" height="34" fill="#4b8f82"/><rect x="920" y="368" width="226" height="30" fill="#92fde8"/><rect x="918" y="400" width="2" height="36" fill="#4d8ea0"/><rect x="974" y="368" width="2" height="6" fill="#111"/><rect x="974" y="430" width="2" height="6" fill="#111"/><rect x="1032" y="368" width="2" height="6" fill="#111"/><rect x="1032" y="430" width="2" height="6" fill="#111"/><rect x="1088" y="368" width="2" height="6" fill="#111"/><rect x="1088" y="430" width="2" height="6" fill="#111"/><rect x="1258" y="366" width="568" height="34" fill="#4b8f82"/><rect x="1260" y="368" width="566" height="30" fill="#92fde8"/><rect x="1258" y="400" width="2" height="36" fill="#4d8ea0"/><rect x="1316" y="368" width="2" height="6" fill="#111"/><rect x="1316" y="430" width="2" height="6" fill="#111"/><rect x="1372" y="368" width="2" height="6" fill="#111"/><rect x="1372" y="430" width="2" height="6" fill="#111"/><rect x="1428" y="368" width="2" height="6" fill="#111"/><rect x="1428" y="430" width="2" height="6" fill="#111"/><rect x="1486" y="368" width="2" height="6" fill="#111"/><rect x="1486" y="430" width="2" height="6" fill="#111"/><rect x="1542" y="368" width="2" height="6" fill="#111"/><rect x="1542" y="430" width="2" height="6" fill="#111"/><rect x="1600" y="368" width="2" height="6" fill="#111"/><rect x="1600" y="430" width="2" height="6" fill="#111"/><rect x="1656" y="368" width="2" height="6" fill="#111"/><rect x="1656" y="430" width="2" height="6" fill="#111"/><rect x="1770" y="368" width="2" height="6" fill="#111"/><rect x="1770" y="430" width="2" height="6" fill="#111"/><rect x="1826" y="366" width="568" height="34" fill="#4b8f82"/><rect x="1828" y="368" width="566" height="30" fill="#92fde8"/><rect x="1826" y="400" width="2" height="36" fill="#4d8ea0"/><rect x="1882" y="368" width="2" height="6" fill="#111"/><rect x="1882" y="430" width="2" height="6" fill="#111"/><rect x="1940" y="368" width="2" height="6" fill="#111"/><rect x="1940" y="430" width="2" height="6" fill="#111"/><rect x="1996" y="368" width="2" height="6" fill="#111"/><rect x="1996" y="430" width="2" height="6" fill="#111"/><rect x="2110" y="368" width="2" height="6" fill="#111"/><rect x="2110" y="430" width="2" height="6" fill="#111"/><rect x="2166" y="368" width="2" height="6" fill="#111"/><rect x="2166" y="430" width="2" height="6" fill="#111"/><rect x="2224" y="368" width="2" height="6" fill="#111"/><rect x="2224" y="430" width="2" height="6" fill="#111"/><rect x="2280" y="368" width="2" height="6" fill="#111"/><rect x="2280" y="430" width="2" height="6" fill="#111"/><rect x="2336" y="368" width="2" height="6" fill="#111"/><rect x="2336" y="430" width="2" height="6" fill="#111"/><rect x="10" y="654" width="626" height="36" fill="#7bd1e6"/><rect x="1146" y="654" width="612" height="36" fill="#7bd1e6"/><rect x="464" y="654" width="2" height="36" fill="#5aa3b8"/><rect x="1372" y="654" width="2" height="36" fill="#5aa3b8"/><rect x="1600" y="654" width="2" height="36" fill="#5aa3b8"/><svg x="578" y="620" width="58" height="34"><rect width="58" height="34" fill="url(#hatch)"/></svg><svg x="1698" y="620" width="60" height="34"><rect width="60" height="34" fill="url(#hatch)"/></svg><rect x="10" y="658.5" width="568" height="1.7" fill="#111"/><rect x="10" y="681.8" width="568" height="1.7" fill="#111"/><rect x="1146" y="658.5" width="552" height="1.7" fill="#111"/><rect x="1146" y="681.8" width="552" height="1.7" fill="#111"/><rect x="10" y="620" width="568" height="34" fill="#4b8f82"/><rect x="12" y="622" width="566" height="30" fill="#92fde8"/><rect x="10" y="654" width="2" height="36" fill="#4d8ea0"/><rect x="1146" y="620" width="552" height="34" fill="#4b8f82"/><rect x="1148" y="622" width="550" height="30" fill="#92fde8"/><rect x="1146" y="654" width="2" height="36" fill="#4d8ea0"/><rect x="1600" y="728" width="278" height="36" fill="#7bd1e6"/><rect x="1826" y="728" width="2" height="36" fill="#5aa3b8"/><svg x="1826" y="694" width="52" height="34"><rect width="52" height="34" fill="url(#hatch)"/></svg><rect x="1601" y="736" width="225" height="16" fill="#1c2326"/><rect x="1600" y="694" width="226" height="34" fill="#4b8f82"/><rect x="1602" y="696" width="224" height="30" fill="#92fde8"/><rect x="1600" y="728" width="2" height="36" fill="#4d8ea0"/><rect x="350" y="802" width="346" height="36" fill="#7bd1e6"/><rect x="804" y="802" width="610" height="36" fill="#7bd1e6"/><rect x="1600" y="802" width="156" height="36" fill="#7bd1e6"/><rect x="1826" y="802" width="156" height="36" fill="#7bd1e6"/><rect x="464" y="802" width="2" height="36" fill="#5aa3b8"/><rect x="918" y="802" width="2" height="36" fill="#5aa3b8"/><rect x="1372" y="802" width="2" height="36" fill="#5aa3b8"/><svg x="408" y="768" width="56" height="34"><rect width="56" height="34" fill="url(#hatch)"/></svg><svg x="520" y="768" width="58" height="34"><rect width="58" height="34" fill="url(#hatch)"/></svg><svg x="634" y="768" width="62" height="34"><rect width="62" height="34" fill="url(#hatch)"/></svg><svg x="862" y="768" width="56" height="34"><rect width="56" height="34" fill="url(#hatch)"/></svg><svg x="974" y="768" width="58" height="34"><rect width="58" height="34" fill="url(#hatch)"/></svg><svg x="1088" y="768" width="58" height="34"><rect width="58" height="34" fill="url(#hatch)"/></svg><svg x="1202" y="768" width="56" height="34"><rect width="56" height="34" fill="url(#hatch)"/></svg><svg x="1316" y="768" width="98" height="34"><rect width="98" height="34" fill="url(#hatch)"/></svg><svg x="1656" y="768" width="100" height="34"><rect width="100" height="34" fill="url(#hatch)"/></svg><svg x="1882" y="768" width="100" height="34"><rect width="100" height="34" fill="url(#hatch)"/></svg><rect x="356" y="810" width="2" height="2" fill="#111"/><rect x="364" y="806" width="2" height="2" fill="#111"/><rect x="366" y="804" width="2" height="2" fill="#111"/><rect x="376" y="810" width="2" height="2" fill="#111"/><rect x="378" y="804" width="2" height="2" fill="#111"/><rect x="470" y="810" width="2" height="2" fill="#111"/><rect x="478" y="806" width="2" height="2" fill="#111"/><rect x="480" y="804" width="2" height="2" fill="#111"/><rect x="490" y="810" width="2" height="2" fill="#111"/><rect x="492" y="804" width="2" height="2" fill="#111"/><rect x="584" y="810" width="2" height="2" fill="#111"/><rect x="592" y="806" width="2" height="2" fill="#111"/><rect x="594" y="804" width="2" height="2" fill="#111"/><rect x="604" y="810" width="2" height="2" fill="#111"/><rect x="606" y="804" width="2" height="2" fill="#111"/><rect x="810" y="810" width="2" height="2" fill="#111"/><rect x="818" y="806" width="2" height="2" fill="#111"/><rect x="820" y="804" width="2" height="2" fill="#111"/><rect x="830" y="810" width="2" height="2" fill="#111"/><rect x="832" y="804" width="2" height="2" fill="#111"/><rect x="924" y="810" width="2" height="2" fill="#111"/><rect x="932" y="806" width="2" height="2" fill="#111"/><rect x="934" y="804" width="2" height="2" fill="#111"/><rect x="944" y="810" width="2" height="2" fill="#111"/><rect x="946" y="804" width="2" height="2" fill="#111"/><rect x="1038" y="810" width="2" height="2" fill="#111"/><rect x="1046" y="806" width="2" height="2" fill="#111"/><rect x="1048" y="804" width="2" height="2" fill="#111"/><rect x="1058" y="810" width="2" height="2" fill="#111"/><rect x="1060" y="804" width="2" height="2" fill="#111"/><rect x="1152" y="810" width="2" height="2" fill="#111"/><rect x="1160" y="806" width="2" height="2" fill="#111"/><rect x="1162" y="804" width="2" height="2" fill="#111"/><rect x="1172" y="810" width="2" height="2" fill="#111"/><rect x="1174" y="804" width="2" height="2" fill="#111"/><rect x="1264" y="810" width="2" height="2" fill="#111"/><rect x="1272" y="806" width="2" height="2" fill="#111"/><rect x="1274" y="804" width="2" height="2" fill="#111"/><rect x="1284" y="810" width="2" height="2" fill="#111"/><rect x="1286" y="804" width="2" height="2" fill="#111"/><rect x="1606" y="810" width="2" height="2" fill="#111"/><rect x="1614" y="806" width="2" height="2" fill="#111"/><rect x="1616" y="804" width="2" height="2" fill="#111"/><rect x="1626" y="810" width="2" height="2" fill="#111"/><rect x="1628" y="804" width="2" height="2" fill="#111"/><rect x="1832" y="810" width="2" height="2" fill="#111"/><rect x="1840" y="806" width="2" height="2" fill="#111"/><rect x="1842" y="804" width="2" height="2" fill="#111"/><rect x="1852" y="810" width="2" height="2" fill="#111"/><rect x="1854" y="804" width="2" height="2" fill="#111"/><rect x="350" y="768" width="58" height="34" fill="#4b8f82"/><rect x="352" y="770" width="56" height="30" fill="#92fde8"/><rect x="350" y="802" width="2" height="36" fill="#4d8ea0"/><rect x="464" y="768" width="56" height="34" fill="#4b8f82"/><rect x="466" y="770" width="54" height="30" fill="#92fde8"/><rect x="464" y="802" width="2" height="36" fill="#4d8ea0"/><rect x="578" y="768" width="56" height="34" fill="#4b8f82"/><rect x="580" y="770" width="54" height="30" fill="#92fde8"/><rect x="578" y="802" width="2" height="36" fill="#4d8ea0"/><rect x="804" y="768" width="58" height="34" fill="#4b8f82"/><rect x="806" y="770" width="56" height="30" fill="#92fde8"/><rect x="804" y="802" width="2" height="36" fill="#4d8ea0"/><rect x="918" y="768" width="56" height="34" fill="#4b8f82"/><rect x="920" y="770" width="54" height="30" fill="#92fde8"/><rect x="918" y="802" width="2" height="36" fill="#4d8ea0"/><rect x="1032" y="768" width="56" height="34" fill="#4b8f82"/><rect x="1034" y="770" width="54" height="30" fill="#92fde8"/><rect x="1032" y="802" width="2" height="36" fill="#4d8ea0"/><rect x="1146" y="768" width="56" height="34" fill="#4b8f82"/><rect x="1148" y="770" width="54" height="30" fill="#92fde8"/><rect x="1146" y="802" width="2" height="36" fill="#4d8ea0"/><rect x="1258" y="768" width="58" height="34" fill="#4b8f82"/><rect x="1260" y="770" width="56" height="30" fill="#92fde8"/><rect x="1258" y="802" width="2" height="36" fill="#4d8ea0"/><rect x="1600" y="768" width="56" height="34" fill="#4b8f82"/><rect x="1602" y="770" width="54" height="30" fill="#92fde8"/><rect x="1600" y="802" width="2" height="36" fill="#4d8ea0"/><rect x="1826" y="768" width="56" height="34" fill="#4b8f82"/><rect x="1828" y="770" width="54" height="30" fill="#92fde8"/><rect x="1826" y="802" width="2" height="36" fill="#4d8ea0"/><rect x="378" y="876" width="440" height="36" fill="#7bd1e6"/><rect x="834" y="876" width="318" height="36" fill="#7bd1e6"/><rect x="1176" y="876" width="390" height="36" fill="#7bd1e6"/><rect x="1600" y="876" width="354" height="36" fill="#7bd1e6"/><rect x="2084" y="876" width="328" height="36" fill="#7bd1e6"/><rect x="464" y="876" width="2" height="36" fill="#5aa3b8"/><rect x="918" y="876" width="2" height="36" fill="#5aa3b8"/><rect x="1372" y="876" width="2" height="36" fill="#5aa3b8"/><rect x="1826" y="876" width="2" height="36" fill="#5aa3b8"/><rect x="2280" y="876" width="2" height="36" fill="#5aa3b8"/><svg x="464" y="842" width="28" height="34"><rect width="28" height="34" fill="url(#hatch)"/></svg><svg x="578" y="842" width="240" height="34"><rect width="240" height="34" fill="url(#hatch)"/></svg><svg x="918" y="842" width="30" height="34"><rect width="30" height="34" fill="url(#hatch)"/></svg><svg x="1032" y="842" width="120" height="34"><rect width="120" height="34" fill="url(#hatch)"/></svg><svg x="1258" y="842" width="308" height="34"><rect width="308" height="34" fill="url(#hatch)"/></svg><svg x="1826" y="842" width="128" height="34"><rect width="128" height="34" fill="url(#hatch)"/></svg><svg x="2394" y="842" width="18" height="34"><rect width="18" height="34" fill="url(#hatch)"/></svg><rect x="381" y="884" width="82" height="16" fill="url(#arpp)"/><rect x="495" y="884" width="82" height="16" fill="url(#arpp)"/><rect x="837" y="884" width="80" height="16" fill="url(#arpp)"/><rect x="951" y="884" width="80" height="16" fill="url(#arpp)"/><rect x="1179" y="884" width="78" height="16" fill="url(#arpp)"/><rect x="1603" y="884" width="222" height="16" fill="url(#arpp)"/><rect x="2087" y="884" width="306" height="16" fill="url(#arpp)"/><rect x="378" y="842" width="86" height="34" fill="#4b8f82"/><rect x="380" y="844" width="84" height="30" fill="#92fde8"/><rect x="378" y="876" width="2" height="36" fill="#4d8ea0"/><rect x="408" y="844" width="2" height="6" fill="#111"/><rect x="408" y="906" width="2" height="6" fill="#111"/><rect x="436" y="844" width="2" height="6" fill="#111"/><rect x="436" y="906" width="2" height="6" fill="#111"/><rect x="492" y="842" width="86" height="34" fill="#4b8f82"/><rect x="494" y="844" width="84" height="30" fill="#92fde8"/><rect x="492" y="876" width="2" height="36" fill="#4d8ea0"/><rect x="520" y="844" width="2" height="6" fill="#111"/><rect x="520" y="906" width="2" height="6" fill="#111"/><rect x="550" y="844" width="2" height="6" fill="#111"/><rect x="550" y="906" width="2" height="6" fill="#111"/><rect x="834" y="842" width="84" height="34" fill="#4b8f82"/><rect x="836" y="844" width="82" height="30" fill="#92fde8"/><rect x="834" y="876" width="2" height="36" fill="#4d8ea0"/><rect x="862" y="844" width="2" height="6" fill="#111"/><rect x="862" y="906" width="2" height="6" fill="#111"/><rect x="890" y="844" width="2" height="6" fill="#111"/><rect x="890" y="906" width="2" height="6" fill="#111"/><rect x="948" y="842" width="84" height="34" fill="#4b8f82"/><rect x="950" y="844" width="82" height="30" fill="#92fde8"/><rect x="948" y="876" width="2" height="36" fill="#4d8ea0"/><rect x="974" y="844" width="2" height="6" fill="#111"/><rect x="974" y="906" width="2" height="6" fill="#111"/><rect x="1004" y="844" width="2" height="6" fill="#111"/><rect x="1004" y="906" width="2" height="6" fill="#111"/><rect x="1176" y="842" width="82" height="34" fill="#4b8f82"/><rect x="1178" y="844" width="80" height="30" fill="#92fde8"/><rect x="1176" y="876" width="2" height="36" fill="#4d8ea0"/><rect x="1202" y="844" width="2" height="6" fill="#111"/><rect x="1202" y="906" width="2" height="6" fill="#111"/><rect x="1230" y="844" width="2" height="6" fill="#111"/><rect x="1230" y="906" width="2" height="6" fill="#111"/><rect x="1600" y="842" width="226" height="34" fill="#4b8f82"/><rect x="1602" y="844" width="224" height="30" fill="#92fde8"/><rect x="1600" y="876" width="2" height="36" fill="#4d8ea0"/><rect x="1628" y="844" width="2" height="6" fill="#111"/><rect x="1628" y="906" width="2" height="6" fill="#111"/><rect x="1656" y="844" width="2" height="6" fill="#111"/><rect x="1656" y="906" width="2" height="6" fill="#111"/><rect x="1684" y="844" width="2" height="6" fill="#111"/><rect x="1684" y="906" width="2" height="6" fill="#111"/><rect x="1740" y="844" width="2" height="6" fill="#111"/><rect x="1740" y="906" width="2" height="6" fill="#111"/><rect x="1770" y="844" width="2" height="6" fill="#111"/><rect x="1770" y="906" width="2" height="6" fill="#111"/><rect x="1798" y="844" width="2" height="6" fill="#111"/><rect x="1798" y="906" width="2" height="6" fill="#111"/><rect x="2084" y="842" width="310" height="34" fill="#4b8f82"/><rect x="2086" y="844" width="308" height="30" fill="#92fde8"/><rect x="2084" y="876" width="2" height="36" fill="#4d8ea0"/><rect x="2110" y="844" width="2" height="6" fill="#111"/><rect x="2110" y="906" width="2" height="6" fill="#111"/><rect x="2138" y="844" width="2" height="6" fill="#111"/><rect x="2138" y="906" width="2" height="6" fill="#111"/><rect x="2166" y="844" width="2" height="6" fill="#111"/><rect x="2166" y="906" width="2" height="6" fill="#111"/><rect x="2194" y="844" width="2" height="6" fill="#111"/><rect x="2194" y="906" width="2" height="6" fill="#111"/><rect x="2224" y="844" width="2" height="6" fill="#111"/><rect x="2224" y="906" width="2" height="6" fill="#111"/><rect x="2252" y="844" width="2" height="6" fill="#111"/><rect x="2252" y="906" width="2" height="6" fill="#111"/><rect x="2280" y="844" width="2" height="6" fill="#111"/><rect x="2280" y="906" width="2" height="6" fill="#111"/><rect x="2308" y="844" width="2" height="6" fill="#111"/><rect x="2308" y="906" width="2" height="6" fill="#111"/><rect x="2336" y="844" width="2" height="6" fill="#111"/><rect x="2336" y="906" width="2" height="6" fill="#111"/><rect x="2366" y="844" width="2" height="6" fill="#111"/><rect x="2366" y="906" width="2" height="6" fill="#111"/><rect x="238" y="950" width="510" height="36" fill="#7bd1e6"/><rect x="804" y="950" width="126" height="36" fill="#7bd1e6"/><rect x="1032" y="950" width="126" height="36" fill="#7bd1e6"/><rect x="1882" y="950" width="524" height="36" fill="#7bd1e6"/><rect x="464" y="950" width="2" height="36" fill="#5aa3b8"/><rect x="918" y="950" width="2" height="36" fill="#5aa3b8"/><rect x="2280" y="950" width="2" height="36" fill="#5aa3b8"/><svg x="696" y="916" width="52" height="34"><rect width="52" height="34" fill="url(#hatch)"/></svg><svg x="918" y="916" width="12" height="34"><rect width="12" height="34" fill="url(#hatch)"/></svg><svg x="1146" y="916" width="12" height="34"><rect width="12" height="34" fill="url(#hatch)"/></svg><svg x="2394" y="916" width="12" height="34"><rect width="12" height="34" fill="url(#hatch)"/></svg><rect x="239" y="958" width="457" height="2" fill="#16201f"/><rect x="239" y="976" width="457" height="2" fill="#16201f"/><rect x="805" y="958" width="113" height="2" fill="#16201f"/><rect x="805" y="976" width="113" height="2" fill="#16201f"/><rect x="1033" y="958" width="113" height="2" fill="#16201f"/><rect x="1033" y="976" width="113" height="2" fill="#16201f"/><rect x="1883" y="958" width="511" height="2" fill="#16201f"/><rect x="1883" y="976" width="511" height="2" fill="#16201f"/><rect x="238" y="916" width="458" height="34" fill="#4b8f82"/><rect x="240" y="918" width="456" height="30" fill="#92fde8"/><rect x="238" y="950" width="2" height="36" fill="#4d8ea0"/><rect x="294" y="918" width="2" height="6" fill="#111"/><rect x="294" y="980" width="2" height="6" fill="#111"/><rect x="408" y="918" width="2" height="6" fill="#111"/><rect x="408" y="980" width="2" height="6" fill="#111"/><rect x="464" y="918" width="2" height="6" fill="#111"/><rect x="464" y="980" width="2" height="6" fill="#111"/><rect x="520" y="918" width="2" height="6" fill="#111"/><rect x="520" y="980" width="2" height="6" fill="#111"/><rect x="634" y="918" width="2" height="6" fill="#111"/><rect x="634" y="980" width="2" height="6" fill="#111"/><rect x="804" y="916" width="114" height="34" fill="#4b8f82"/><rect x="806" y="918" width="112" height="30" fill="#92fde8"/><rect x="804" y="950" width="2" height="36" fill="#4d8ea0"/><rect x="862" y="918" width="2" height="6" fill="#111"/><rect x="862" y="980" width="2" height="6" fill="#111"/><rect x="1032" y="916" width="114" height="34" fill="#4b8f82"/><rect x="1034" y="918" width="112" height="30" fill="#92fde8"/><rect x="1032" y="950" width="2" height="36" fill="#4d8ea0"/><rect x="1088" y="918" width="2" height="6" fill="#111"/><rect x="1088" y="980" width="2" height="6" fill="#111"/><rect x="1882" y="916" width="512" height="34" fill="#4b8f82"/><rect x="1884" y="918" width="510" height="30" fill="#92fde8"/><rect x="1882" y="950" width="2" height="36" fill="#4d8ea0"/><rect x="1940" y="918" width="2" height="6" fill="#111"/><rect x="1940" y="980" width="2" height="6" fill="#111"/><rect x="1996" y="918" width="2" height="6" fill="#111"/><rect x="1996" y="980" width="2" height="6" fill="#111"/><rect x="2110" y="918" width="2" height="6" fill="#111"/><rect x="2110" y="980" width="2" height="6" fill="#111"/><rect x="2166" y="918" width="2" height="6" fill="#111"/><rect x="2166" y="980" width="2" height="6" fill="#111"/><rect x="2224" y="918" width="2" height="6" fill="#111"/><rect x="2224" y="980" width="2" height="6" fill="#111"/><rect x="2280" y="918" width="2" height="6" fill="#111"/><rect x="2280" y="980" width="2" height="6" fill="#111"/><rect x="2336" y="918" width="2" height="6" fill="#111"/><rect x="2336" y="980" width="2" height="6" fill="#111"/><rect x="10" y="1024" width="802" height="36" fill="#7bd1e6"/><rect x="1032" y="1024" width="120" height="36" fill="#7bd1e6"/><rect x="1258" y="1024" width="914" height="36" fill="#7bd1e6"/><rect x="464" y="1024" width="2" height="36" fill="#5aa3b8"/><rect x="1372" y="1024" width="2" height="36" fill="#5aa3b8"/><rect x="1600" y="1024" width="2" height="36" fill="#5aa3b8"/><rect x="1826" y="1024" width="2" height="36" fill="#5aa3b8"/><svg x="804" y="990" width="8" height="34"><rect width="8" height="34" fill="url(#hatch)"/></svg><svg x="1146" y="990" width="6" height="34"><rect width="6" height="34" fill="url(#hatch)"/></svg><svg x="1698" y="990" width="14" height="34"><rect width="14" height="34" fill="url(#hatch)"/></svg><svg x="2166" y="990" width="6" height="34"><rect width="6" height="34" fill="url(#hatch)"/></svg><rect x="684" y="990" width="8" height="34" fill="#696969"/><rect x="12" y="1024" width="672" height="36" fill="url(#pluckp)"/><rect x="694" y="1024" width="110" height="36" fill="url(#pluckp)"/><rect x="1034" y="1024" width="112" height="36" fill="url(#pluckp)"/><rect x="1260" y="1024" width="438" height="36" fill="url(#pluckp)"/><rect x="1714" y="1024" width="452" height="36" fill="url(#pluckp)"/><rect x="10" y="990" width="674" height="34" fill="#4b8f82"/><rect x="12" y="992" width="672" height="30" fill="#92fde8"/><rect x="10" y="1024" width="2" height="36" fill="#4d8ea0"/><rect x="24" y="992" width="2" height="6" fill="#111"/><rect x="24" y="1054" width="2" height="6" fill="#111"/><rect x="38" y="992" width="2" height="6" fill="#111"/><rect x="38" y="1054" width="2" height="6" fill="#111"/><rect x="52" y="992" width="2" height="6" fill="#111"/><rect x="52" y="1054" width="2" height="6" fill="#111"/><rect x="66" y="992" width="2" height="6" fill="#111"/><rect x="66" y="1054" width="2" height="6" fill="#111"/><rect x="82" y="992" width="2" height="6" fill="#111"/><rect x="82" y="1054" width="2" height="6" fill="#111"/><rect x="96" y="992" width="2" height="6" fill="#111"/><rect x="96" y="1054" width="2" height="6" fill="#111"/><rect x="110" y="992" width="2" height="6" fill="#111"/><rect x="110" y="1054" width="2" height="6" fill="#111"/><rect x="124" y="992" width="2" height="6" fill="#111"/><rect x="124" y="1054" width="2" height="6" fill="#111"/><rect x="138" y="992" width="2" height="6" fill="#111"/><rect x="138" y="1054" width="2" height="6" fill="#111"/><rect x="152" y="992" width="2" height="6" fill="#111"/><rect x="152" y="1054" width="2" height="6" fill="#111"/><rect x="166" y="992" width="2" height="6" fill="#111"/><rect x="166" y="1054" width="2" height="6" fill="#111"/><rect x="180" y="992" width="2" height="6" fill="#111"/><rect x="180" y="1054" width="2" height="6" fill="#111"/><rect x="194" y="992" width="2" height="6" fill="#111"/><rect x="194" y="1054" width="2" height="6" fill="#111"/><rect x="208" y="992" width="2" height="6" fill="#111"/><rect x="208" y="1054" width="2" height="6" fill="#111"/><rect x="222" y="992" width="2" height="6" fill="#111"/><rect x="222" y="1054" width="2" height="6" fill="#111"/><rect x="252" y="992" width="2" height="6" fill="#111"/><rect x="252" y="1054" width="2" height="6" fill="#111"/><rect x="266" y="992" width="2" height="6" fill="#111"/><rect x="266" y="1054" width="2" height="6" fill="#111"/><rect x="280" y="992" width="2" height="6" fill="#111"/><rect x="280" y="1054" width="2" height="6" fill="#111"/><rect x="294" y="992" width="2" height="6" fill="#111"/><rect x="294" y="1054" width="2" height="6" fill="#111"/><rect x="308" y="992" width="2" height="6" fill="#111"/><rect x="308" y="1054" width="2" height="6" fill="#111"/><rect x="322" y="992" width="2" height="6" fill="#111"/><rect x="322" y="1054" width="2" height="6" fill="#111"/><rect x="336" y="992" width="2" height="6" fill="#111"/><rect x="336" y="1054" width="2" height="6" fill="#111"/><rect x="364" y="992" width="2" height="6" fill="#111"/><rect x="364" y="1054" width="2" height="6" fill="#111"/><rect x="378" y="992" width="2" height="6" fill="#111"/><rect x="378" y="1054" width="2" height="6" fill="#111"/><rect x="394" y="992" width="2" height="6" fill="#111"/><rect x="394" y="1054" width="2" height="6" fill="#111"/><rect x="408" y="992" width="2" height="6" fill="#111"/><rect x="408" y="1054" width="2" height="6" fill="#111"/><rect x="422" y="992" width="2" height="6" fill="#111"/><rect x="422" y="1054" width="2" height="6" fill="#111"/><rect x="436" y="992" width="2" height="6" fill="#111"/><rect x="436" y="1054" width="2" height="6" fill="#111"/><rect x="450" y="992" width="2" height="6" fill="#111"/><rect x="450" y="1054" width="2" height="6" fill="#111"/><rect x="464" y="992" width="2" height="6" fill="#111"/><rect x="464" y="1054" width="2" height="6" fill="#111"/><rect x="478" y="992" width="2" height="6" fill="#111"/><rect x="478" y="1054" width="2" height="6" fill="#111"/><rect x="492" y="992" width="2" height="6" fill="#111"/><rect x="492" y="1054" width="2" height="6" fill="#111"/><rect x="506" y="992" width="2" height="6" fill="#111"/><rect x="506" y="1054" width="2" height="6" fill="#111"/><rect x="520" y="992" width="2" height="6" fill="#111"/><rect x="520" y="1054" width="2" height="6" fill="#111"/><rect x="536" y="992" width="2" height="6" fill="#111"/><rect x="536" y="1054" width="2" height="6" fill="#111"/><rect x="550" y="992" width="2" height="6" fill="#111"/><rect x="550" y="1054" width="2" height="6" fill="#111"/><rect x="564" y="992" width="2" height="6" fill="#111"/><rect x="564" y="1054" width="2" height="6" fill="#111"/><rect x="592" y="992" width="2" height="6" fill="#111"/><rect x="592" y="1054" width="2" height="6" fill="#111"/><rect x="606" y="992" width="2" height="6" fill="#111"/><rect x="606" y="1054" width="2" height="6" fill="#111"/><rect x="620" y="992" width="2" height="6" fill="#111"/><rect x="620" y="1054" width="2" height="6" fill="#111"/><rect x="634" y="992" width="2" height="6" fill="#111"/><rect x="634" y="1054" width="2" height="6" fill="#111"/><rect x="648" y="992" width="2" height="6" fill="#111"/><rect x="648" y="1054" width="2" height="6" fill="#111"/><rect x="662" y="992" width="2" height="6" fill="#111"/><rect x="662" y="1054" width="2" height="6" fill="#111"/><rect x="676" y="992" width="2" height="6" fill="#111"/><rect x="676" y="1054" width="2" height="6" fill="#111"/><rect x="692" y="990" width="112" height="34" fill="#4b8f82"/><rect x="694" y="992" width="110" height="30" fill="#92fde8"/><rect x="692" y="1024" width="2" height="36" fill="#4d8ea0"/><rect x="706" y="992" width="2" height="6" fill="#111"/><rect x="706" y="1054" width="2" height="6" fill="#111"/><rect x="720" y="992" width="2" height="6" fill="#111"/><rect x="720" y="1054" width="2" height="6" fill="#111"/><rect x="734" y="992" width="2" height="6" fill="#111"/><rect x="734" y="1054" width="2" height="6" fill="#111"/><rect x="748" y="992" width="2" height="6" fill="#111"/><rect x="748" y="1054" width="2" height="6" fill="#111"/><rect x="762" y="992" width="2" height="6" fill="#111"/><rect x="762" y="1054" width="2" height="6" fill="#111"/><rect x="776" y="992" width="2" height="6" fill="#111"/><rect x="776" y="1054" width="2" height="6" fill="#111"/><rect x="790" y="992" width="2" height="6" fill="#111"/><rect x="790" y="1054" width="2" height="6" fill="#111"/><rect x="1032" y="990" width="114" height="34" fill="#4b8f82"/><rect x="1034" y="992" width="112" height="30" fill="#92fde8"/><rect x="1032" y="1024" width="2" height="36" fill="#4d8ea0"/><rect x="1046" y="992" width="2" height="6" fill="#111"/><rect x="1046" y="1054" width="2" height="6" fill="#111"/><rect x="1060" y="992" width="2" height="6" fill="#111"/><rect x="1060" y="1054" width="2" height="6" fill="#111"/><rect x="1074" y="992" width="2" height="6" fill="#111"/><rect x="1074" y="1054" width="2" height="6" fill="#111"/><rect x="1088" y="992" width="2" height="6" fill="#111"/><rect x="1088" y="1054" width="2" height="6" fill="#111"/><rect x="1102" y="992" width="2" height="6" fill="#111"/><rect x="1102" y="1054" width="2" height="6" fill="#111"/><rect x="1116" y="992" width="2" height="6" fill="#111"/><rect x="1116" y="1054" width="2" height="6" fill="#111"/><rect x="1130" y="992" width="2" height="6" fill="#111"/><rect x="1130" y="1054" width="2" height="6" fill="#111"/><rect x="1258" y="990" width="440" height="34" fill="#4b8f82"/><rect x="1260" y="992" width="438" height="30" fill="#92fde8"/><rect x="1258" y="1024" width="2" height="36" fill="#4d8ea0"/><rect x="1272" y="992" width="2" height="6" fill="#111"/><rect x="1272" y="1054" width="2" height="6" fill="#111"/><rect x="1286" y="992" width="2" height="6" fill="#111"/><rect x="1286" y="1054" width="2" height="6" fill="#111"/><rect x="1302" y="992" width="2" height="6" fill="#111"/><rect x="1302" y="1054" width="2" height="6" fill="#111"/><rect x="1316" y="992" width="2" height="6" fill="#111"/><rect x="1316" y="1054" width="2" height="6" fill="#111"/><rect x="1330" y="992" width="2" height="6" fill="#111"/><rect x="1330" y="1054" width="2" height="6" fill="#111"/><rect x="1344" y="992" width="2" height="6" fill="#111"/><rect x="1344" y="1054" width="2" height="6" fill="#111"/><rect x="1358" y="992" width="2" height="6" fill="#111"/><rect x="1358" y="1054" width="2" height="6" fill="#111"/><rect x="1372" y="992" width="2" height="6" fill="#111"/><rect x="1372" y="1054" width="2" height="6" fill="#111"/><rect x="1386" y="992" width="2" height="6" fill="#111"/><rect x="1386" y="1054" width="2" height="6" fill="#111"/><rect x="1400" y="992" width="2" height="6" fill="#111"/><rect x="1400" y="1054" width="2" height="6" fill="#111"/><rect x="1414" y="992" width="2" height="6" fill="#111"/><rect x="1414" y="1054" width="2" height="6" fill="#111"/><rect x="1428" y="992" width="2" height="6" fill="#111"/><rect x="1428" y="1054" width="2" height="6" fill="#111"/><rect x="1444" y="992" width="2" height="6" fill="#111"/><rect x="1444" y="1054" width="2" height="6" fill="#111"/><rect x="1458" y="992" width="2" height="6" fill="#111"/><rect x="1458" y="1054" width="2" height="6" fill="#111"/><rect x="1472" y="992" width="2" height="6" fill="#111"/><rect x="1472" y="1054" width="2" height="6" fill="#111"/><rect x="1486" y="992" width="2" height="6" fill="#111"/><rect x="1486" y="1054" width="2" height="6" fill="#111"/><rect x="1500" y="992" width="2" height="6" fill="#111"/><rect x="1500" y="1054" width="2" height="6" fill="#111"/><rect x="1514" y="992" width="2" height="6" fill="#111"/><rect x="1514" y="1054" width="2" height="6" fill="#111"/><rect x="1528" y="992" width="2" height="6" fill="#111"/><rect x="1528" y="1054" width="2" height="6" fill="#111"/><rect x="1542" y="992" width="2" height="6" fill="#111"/><rect x="1542" y="1054" width="2" height="6" fill="#111"/><rect x="1556" y="992" width="2" height="6" fill="#111"/><rect x="1556" y="1054" width="2" height="6" fill="#111"/><rect x="1570" y="992" width="2" height="6" fill="#111"/><rect x="1570" y="1054" width="2" height="6" fill="#111"/><rect x="1584" y="992" width="2" height="6" fill="#111"/><rect x="1584" y="1054" width="2" height="6" fill="#111"/><rect x="1600" y="992" width="2" height="6" fill="#111"/><rect x="1600" y="1054" width="2" height="6" fill="#111"/><rect x="1614" y="992" width="2" height="6" fill="#111"/><rect x="1614" y="1054" width="2" height="6" fill="#111"/><rect x="1628" y="992" width="2" height="6" fill="#111"/><rect x="1628" y="1054" width="2" height="6" fill="#111"/><rect x="1642" y="992" width="2" height="6" fill="#111"/><rect x="1642" y="1054" width="2" height="6" fill="#111"/><rect x="1656" y="992" width="2" height="6" fill="#111"/><rect x="1656" y="1054" width="2" height="6" fill="#111"/><rect x="1670" y="992" width="2" height="6" fill="#111"/><rect x="1670" y="1054" width="2" height="6" fill="#111"/><rect x="1684" y="992" width="2" height="6" fill="#111"/><rect x="1684" y="1054" width="2" height="6" fill="#111"/><rect x="1712" y="990" width="454" height="34" fill="#4b8f82"/><rect x="1714" y="992" width="452" height="30" fill="#92fde8"/><rect x="1712" y="1024" width="2" height="36" fill="#4d8ea0"/><rect x="1726" y="992" width="2" height="6" fill="#111"/><rect x="1726" y="1054" width="2" height="6" fill="#111"/><rect x="1740" y="992" width="2" height="6" fill="#111"/><rect x="1740" y="1054" width="2" height="6" fill="#111"/><rect x="1756" y="992" width="2" height="6" fill="#111"/><rect x="1756" y="1054" width="2" height="6" fill="#111"/><rect x="1770" y="992" width="2" height="6" fill="#111"/><rect x="1770" y="1054" width="2" height="6" fill="#111"/><rect x="1784" y="992" width="2" height="6" fill="#111"/><rect x="1784" y="1054" width="2" height="6" fill="#111"/><rect x="1798" y="992" width="2" height="6" fill="#111"/><rect x="1798" y="1054" width="2" height="6" fill="#111"/><rect x="1812" y="992" width="2" height="6" fill="#111"/><rect x="1812" y="1054" width="2" height="6" fill="#111"/><rect x="1826" y="992" width="2" height="6" fill="#111"/><rect x="1826" y="1054" width="2" height="6" fill="#111"/><rect x="1840" y="992" width="2" height="6" fill="#111"/><rect x="1840" y="1054" width="2" height="6" fill="#111"/><rect x="1854" y="992" width="2" height="6" fill="#111"/><rect x="1854" y="1054" width="2" height="6" fill="#111"/><rect x="1868" y="992" width="2" height="6" fill="#111"/><rect x="1868" y="1054" width="2" height="6" fill="#111"/><rect x="1882" y="992" width="2" height="6" fill="#111"/><rect x="1882" y="1054" width="2" height="6" fill="#111"/><rect x="1898" y="992" width="2" height="6" fill="#111"/><rect x="1898" y="1054" width="2" height="6" fill="#111"/><rect x="1912" y="992" width="2" height="6" fill="#111"/><rect x="1912" y="1054" width="2" height="6" fill="#111"/><rect x="1926" y="992" width="2" height="6" fill="#111"/><rect x="1926" y="1054" width="2" height="6" fill="#111"/><rect x="1940" y="992" width="2" height="6" fill="#111"/><rect x="1940" y="1054" width="2" height="6" fill="#111"/><rect x="1954" y="992" width="2" height="6" fill="#111"/><rect x="1954" y="1054" width="2" height="6" fill="#111"/><rect x="1968" y="992" width="2" height="6" fill="#111"/><rect x="1968" y="1054" width="2" height="6" fill="#111"/><rect x="1982" y="992" width="2" height="6" fill="#111"/><rect x="1982" y="1054" width="2" height="6" fill="#111"/><rect x="1996" y="992" width="2" height="6" fill="#111"/><rect x="1996" y="1054" width="2" height="6" fill="#111"/><rect x="2010" y="992" width="2" height="6" fill="#111"/><rect x="2010" y="1054" width="2" height="6" fill="#111"/><rect x="2024" y="992" width="2" height="6" fill="#111"/><rect x="2024" y="1054" width="2" height="6" fill="#111"/><rect x="2038" y="992" width="2" height="6" fill="#111"/><rect x="2038" y="1054" width="2" height="6" fill="#111"/><rect x="2068" y="992" width="2" height="6" fill="#111"/><rect x="2068" y="1054" width="2" height="6" fill="#111"/><rect x="2082" y="992" width="2" height="6" fill="#111"/><rect x="2082" y="1054" width="2" height="6" fill="#111"/><rect x="2096" y="992" width="2" height="6" fill="#111"/><rect x="2096" y="1054" width="2" height="6" fill="#111"/><rect x="2110" y="992" width="2" height="6" fill="#111"/><rect x="2110" y="1054" width="2" height="6" fill="#111"/><rect x="2124" y="992" width="2" height="6" fill="#111"/><rect x="2124" y="1054" width="2" height="6" fill="#111"/><rect x="2138" y="992" width="2" height="6" fill="#111"/><rect x="2138" y="1054" width="2" height="6" fill="#111"/><rect x="2152" y="992" width="2" height="6" fill="#111"/><rect x="2152" y="1054" width="2" height="6" fill="#111"/><rect x="10" y="1098" width="930" height="36" fill="#7bd1e6"/><rect x="1032" y="1098" width="1076" height="36" fill="#7bd1e6"/><rect x="464" y="1098" width="2" height="36" fill="#5aa3b8"/><rect x="918" y="1098" width="2" height="36" fill="#5aa3b8"/><rect x="1372" y="1098" width="2" height="36" fill="#5aa3b8"/><rect x="1600" y="1098" width="2" height="36" fill="#5aa3b8"/><rect x="1826" y="1098" width="2" height="36" fill="#5aa3b8"/><svg x="1698" y="1064" width="14" height="34"><rect width="14" height="34" fill="url(#hatch)"/></svg><svg x="2082" y="1064" width="26" height="34"><rect width="26" height="34" fill="url(#hatch)"/></svg><rect x="684" y="1064" width="8" height="34" fill="#696969"/><rect x="12" y="1098" width="672" height="36" fill="url(#pianop)"/><rect x="694" y="1098" width="224" height="36" fill="url(#pianop)"/><rect x="1034" y="1098" width="338" height="36" fill="url(#pianop)"/><rect x="1374" y="1098" width="324" height="36" fill="url(#pianop)"/><rect x="1714" y="1098" width="368" height="36" fill="url(#pianop)"/><rect x="10" y="1064" width="674" height="34" fill="#4b8f82"/><rect x="12" y="1066" width="672" height="30" fill="#92fde8"/><rect x="10" y="1098" width="2" height="36" fill="#4d8ea0"/><rect x="66" y="1066" width="2" height="6" fill="#111"/><rect x="66" y="1128" width="2" height="6" fill="#111"/><rect x="124" y="1066" width="2" height="6" fill="#111"/><rect x="124" y="1128" width="2" height="6" fill="#111"/><rect x="180" y="1066" width="2" height="6" fill="#111"/><rect x="180" y="1128" width="2" height="6" fill="#111"/><rect x="294" y="1066" width="2" height="6" fill="#111"/><rect x="294" y="1128" width="2" height="6" fill="#111"/><rect x="408" y="1066" width="2" height="6" fill="#111"/><rect x="408" y="1128" width="2" height="6" fill="#111"/><rect x="464" y="1066" width="2" height="6" fill="#111"/><rect x="464" y="1128" width="2" height="6" fill="#111"/><rect x="520" y="1066" width="2" height="6" fill="#111"/><rect x="520" y="1128" width="2" height="6" fill="#111"/><rect x="634" y="1066" width="2" height="6" fill="#111"/><rect x="634" y="1128" width="2" height="6" fill="#111"/><rect x="692" y="1064" width="226" height="34" fill="#4b8f82"/><rect x="694" y="1066" width="224" height="30" fill="#92fde8"/><rect x="692" y="1098" width="2" height="36" fill="#4d8ea0"/><rect x="748" y="1066" width="2" height="6" fill="#111"/><rect x="748" y="1128" width="2" height="6" fill="#111"/><rect x="804" y="1066" width="2" height="6" fill="#111"/><rect x="804" y="1128" width="2" height="6" fill="#111"/><rect x="862" y="1066" width="2" height="6" fill="#111"/><rect x="862" y="1128" width="2" height="6" fill="#111"/><rect x="1032" y="1064" width="340" height="34" fill="#4b8f82"/><rect x="1034" y="1066" width="338" height="30" fill="#92fde8"/><rect x="1032" y="1098" width="2" height="36" fill="#4d8ea0"/><rect x="1088" y="1066" width="2" height="6" fill="#111"/><rect x="1088" y="1128" width="2" height="6" fill="#111"/><rect x="1202" y="1066" width="2" height="6" fill="#111"/><rect x="1202" y="1128" width="2" height="6" fill="#111"/><rect x="1258" y="1066" width="2" height="6" fill="#111"/><rect x="1258" y="1128" width="2" height="6" fill="#111"/><rect x="1316" y="1066" width="2" height="6" fill="#111"/><rect x="1316" y="1128" width="2" height="6" fill="#111"/><rect x="1372" y="1064" width="326" height="34" fill="#4b8f82"/><rect x="1374" y="1066" width="324" height="30" fill="#92fde8"/><rect x="1372" y="1098" width="2" height="36" fill="#4d8ea0"/><rect x="1428" y="1066" width="2" height="6" fill="#111"/><rect x="1428" y="1128" width="2" height="6" fill="#111"/><rect x="1486" y="1066" width="2" height="6" fill="#111"/><rect x="1486" y="1128" width="2" height="6" fill="#111"/><rect x="1542" y="1066" width="2" height="6" fill="#111"/><rect x="1542" y="1128" width="2" height="6" fill="#111"/><rect x="1600" y="1066" width="2" height="6" fill="#111"/><rect x="1600" y="1128" width="2" height="6" fill="#111"/><rect x="1656" y="1066" width="2" height="6" fill="#111"/><rect x="1656" y="1128" width="2" height="6" fill="#111"/><rect x="1712" y="1064" width="370" height="34" fill="#4b8f82"/><rect x="1714" y="1066" width="368" height="30" fill="#92fde8"/><rect x="1712" y="1098" width="2" height="36" fill="#4d8ea0"/><rect x="1770" y="1066" width="2" height="6" fill="#111"/><rect x="1770" y="1128" width="2" height="6" fill="#111"/><rect x="1826" y="1066" width="2" height="6" fill="#111"/><rect x="1826" y="1128" width="2" height="6" fill="#111"/><rect x="1882" y="1066" width="2" height="6" fill="#111"/><rect x="1882" y="1128" width="2" height="6" fill="#111"/><rect x="1940" y="1066" width="2" height="6" fill="#111"/><rect x="1940" y="1128" width="2" height="6" fill="#111"/><rect x="1996" y="1066" width="2" height="6" fill="#111"/><rect x="1996" y="1128" width="2" height="6" fill="#111"/><rect x="464" y="1172" width="344" height="36" fill="#7bd1e6"/><rect x="1032" y="1172" width="670" height="36" fill="#7bd1e6"/><rect x="1712" y="1172" width="458" height="36" fill="#7bd1e6"/><rect x="1372" y="1172" width="2" height="36" fill="#5aa3b8"/><rect x="1600" y="1172" width="2" height="36" fill="#5aa3b8"/><rect x="1826" y="1172" width="2" height="36" fill="#5aa3b8"/><svg x="804" y="1138" width="4" height="34"><rect width="4" height="34" fill="url(#hatch)"/></svg><svg x="1146" y="1138" width="454" height="34"><rect width="454" height="34" fill="url(#hatch)"/></svg><svg x="1698" y="1138" width="4" height="34"><rect width="4" height="34" fill="url(#hatch)"/></svg><svg x="2166" y="1138" width="4" height="34"><rect width="4" height="34" fill="url(#hatch)"/></svg><rect x="684" y="1138" width="8" height="34" fill="#696969"/><line x1="468" y1="1177" x2="682" y2="1177" stroke="#111" stroke-width="1.6" stroke-dasharray="2.6 1.2"/><line x1="696" y1="1177" x2="802" y2="1177" stroke="#111" stroke-width="1.6" stroke-dasharray="2.6 1.2"/><line x1="1036" y1="1177" x2="1144" y2="1177" stroke="#111" stroke-width="1.6" stroke-dasharray="2.6 1.2"/><line x1="1604" y1="1177" x2="1696" y2="1177" stroke="#111" stroke-width="1.6" stroke-dasharray="2.6 1.2"/><line x1="1716" y1="1177" x2="2164" y2="1177" stroke="#111" stroke-width="1.6" stroke-dasharray="2.6 1.2"/><rect x="464" y="1138" width="220" height="34" fill="#4b8f82"/><rect x="466" y="1140" width="218" height="30" fill="#92fde8"/><rect x="464" y="1172" width="2" height="36" fill="#4d8ea0"/><rect x="692" y="1138" width="112" height="34" fill="#4b8f82"/><rect x="694" y="1140" width="110" height="30" fill="#92fde8"/><rect x="692" y="1172" width="2" height="36" fill="#4d8ea0"/><rect x="1032" y="1138" width="114" height="34" fill="#4b8f82"/><rect x="1034" y="1140" width="112" height="30" fill="#92fde8"/><rect x="1032" y="1172" width="2" height="36" fill="#4d8ea0"/><rect x="1600" y="1138" width="98" height="34" fill="#4b8f82"/><rect x="1602" y="1140" width="96" height="30" fill="#92fde8"/><rect x="1600" y="1172" width="2" height="36" fill="#4d8ea0"/><rect x="1712" y="1138" width="454" height="34" fill="#4b8f82"/><rect x="1714" y="1140" width="452" height="30" fill="#92fde8"/><rect x="1712" y="1172" width="2" height="36" fill="#4d8ea0"/><rect x="918" y="1064" width="22" height="34" fill="#6e7d7a"/><rect x="940" y="1064" width="92" height="34" fill="#66696e"/><rect x="940" y="1098" width="92" height="36" fill="#40587a"/><rect x="940" y="1098" width="92" height="36" fill="url(#pianog)"/><rect x="920" y="1098" width="20" height="36" fill="url(#pianog)" opacity="0.6"/><svg x="570" y="144" width="4" height="34"><rect width="4" height="34" fill="url(#hatch)"/></svg><svg x="644" y="144" width="18" height="34"><rect width="18" height="34" fill="url(#hatch)"/></svg><svg x="870" y="144" width="6" height="34"><rect width="6" height="34" fill="url(#hatch)"/></svg><svg x="898" y="144" width="20" height="34"><rect width="20" height="34" fill="url(#hatch)"/></svg><svg x="1024" y="144" width="14" height="34"><rect width="14" height="34" fill="url(#hatch)"/></svg><svg x="1074" y="144" width="28" height="34"><rect width="28" height="34" fill="url(#hatch)"/></svg><svg x="1124" y="144" width="4" height="34"><rect width="4" height="34" fill="url(#hatch)"/></svg><svg x="1270" y="144" width="60" height="34"><rect width="60" height="34" fill="url(#hatch)"/></svg><svg x="1578" y="144" width="6" height="34"><rect width="6" height="34" fill="url(#hatch)"/></svg><svg x="1712" y="144" width="82" height="34"><rect width="82" height="34" fill="url(#hatch)"/></svg><svg x="2054" y="144" width="28" height="34"><rect width="28" height="34" fill="url(#hatch)"/></svg><rect x="1638" y="144" width="4" height="34" fill="#4b8f82"/><rect x="1692" y="144" width="6" height="34" fill="#4b8f82"/><rect x="1524" y="144" width="2" height="34" fill="#4b8f82"/><rect x="550" y="144" width="20" height="34" fill="#4b8f82"/><rect x="552" y="146" width="18" height="30" fill="#92fde8"/><text clip-path="url(#c1)" x="556.5" y="167.5" font-size="19" fill="#1b3a35" stroke="#1b3a35" stroke-width="0.4"><tspan letter-spacing="0.3">RKU_ARSA3_90</tspan><tspan letter-spacing="1.2">_vocal_</tspan></text><rect x="574" y="144" width="70" height="34" fill="#4b8f82"/><rect x="576" y="146" width="68" height="30" fill="#92fde8"/><text clip-path="url(#c2)" x="580.5" y="167.5" font-size="19" fill="#1b3a35" stroke="#1b3a35" stroke-width="0.4"><tspan letter-spacing="0.3">RKU_ARSA3_90</tspan><tspan letter-spacing="1.2">_vocal_</tspan></text><rect x="662" y="144" width="20" height="34" fill="#4b8f82"/><rect x="664" y="146" width="18" height="30" fill="#92fde8"/><text clip-path="url(#c3)" x="668.5" y="167.5" font-size="19" fill="#1b3a35" stroke="#1b3a35" stroke-width="0.4"><tspan letter-spacing="0.3">RKU_ARSA3_90</tspan><tspan letter-spacing="1.2">_vocal_</tspan></text><rect x="682" y="144" width="106" height="34" fill="#4b8f82"/><rect x="684" y="146" width="104" height="30" fill="#92fde8"/><text clip-path="url(#c4)" x="688.5" y="167.5" font-size="19" fill="#1b3a35" stroke="#1b3a35" stroke-width="0.4"><tspan letter-spacing="0.3">RKU_ARSA3_90</tspan><tspan letter-spacing="1.2">_vocal_</tspan></text><rect x="788" y="144" width="82" height="34" fill="#4b8f82"/><rect x="790" y="146" width="80" height="30" fill="#92fde8"/><text clip-path="url(#c5)" x="794.5" y="167.5" font-size="19" fill="#1b3a35" stroke="#1b3a35" stroke-width="0.4"><tspan letter-spacing="0.3">RKU_ARSA3_90</tspan><tspan letter-spacing="1.2">_vocal_</tspan></text><rect x="876" y="144" width="22" height="34" fill="#4b8f82"/><rect x="878" y="146" width="20" height="30" fill="#92fde8"/><text clip-path="url(#c6)" x="882.5" y="167.5" font-size="19" fill="#1b3a35" stroke="#1b3a35" stroke-width="0.4"><tspan letter-spacing="0.3">RKU_ARSA3_90</tspan><tspan letter-spacing="1.2">_vocal_</tspan></text><rect x="918" y="144" width="106" height="34" fill="#4b8f82"/><rect x="920" y="146" width="104" height="30" fill="#92fde8"/><text clip-path="url(#c7)" x="924.5" y="167.5" font-size="19" fill="#1b3a35" stroke="#1b3a35" stroke-width="0.4"><tspan letter-spacing="0.3">RKU_ARSA3_90</tspan><tspan letter-spacing="1.2">_vocal_</tspan></text><rect x="1038" y="144" width="36" height="34" fill="#4b8f82"/><rect x="1040" y="146" width="34" height="30" fill="#92fde8"/><text clip-path="url(#c8)" x="1044.5" y="167.5" font-size="19" fill="#1b3a35" stroke="#1b3a35" stroke-width="0.4"><tspan letter-spacing="0.3">RKU_ARSA3_90</tspan><tspan letter-spacing="1.2">_vocal_</tspan></text><rect x="1102" y="144" width="22" height="34" fill="#4b8f82"/><rect x="1104" y="146" width="20" height="30" fill="#92fde8"/><text clip-path="url(#c9)" x="1108.5" y="167.5" font-size="19" fill="#1b3a35" stroke="#1b3a35" stroke-width="0.4"><tspan letter-spacing="0.3">RKU_ARSA3_90</tspan><tspan letter-spacing="1.2">_vocal_</tspan></text><rect x="1128" y="144" width="142" height="34" fill="#4b8f82"/><rect x="1130" y="146" width="140" height="30" fill="#92fde8"/><text clip-path="url(#c10)" x="1134.5" y="167.5" font-size="19" fill="#1b3a35" stroke="#1b3a35" stroke-width="0.4"><tspan letter-spacing="0.3">RKU_ARSA3_90</tspan><tspan letter-spacing="1.2">_vocal_</tspan></text><rect x="1372" y="144" width="152" height="34" fill="#4b8f82"/><rect x="1374" y="146" width="150" height="30" fill="#92fde8"/><text clip-path="url(#c11)" x="1378.5" y="167.5" font-size="19" fill="#1b3a35" stroke="#1b3a35" stroke-width="0.4"><tspan letter-spacing="0.3">RKU_ARSA3_90</tspan><tspan letter-spacing="1.2">_vocal_</tspan></text><rect x="1526" y="144" width="16" height="34" fill="#4b8f82"/><rect x="1528" y="146" width="14" height="30" fill="#92fde8"/><text clip-path="url(#c12)" x="1532.5" y="167.5" font-size="19" fill="#1b3a35" stroke="#1b3a35" stroke-width="0.4"><tspan letter-spacing="0.3">RKU_ARSA3_90</tspan><tspan letter-spacing="1.2">_vocal_</tspan></text><rect x="1542" y="144" width="14" height="34" fill="#4b8f82"/><rect x="1544" y="146" width="12" height="30" fill="#92fde8"/><text clip-path="url(#c13)" x="1548.5" y="167.5" font-size="19" fill="#1b3a35" stroke="#1b3a35" stroke-width="0.4"><tspan letter-spacing="0.3">RKU_ARSA3_90</tspan><tspan letter-spacing="1.2">_vocal_</tspan></text><rect x="1556" y="144" width="14" height="34" fill="#4b8f82"/><rect x="1558" y="146" width="12" height="30" fill="#92fde8"/><text clip-path="url(#c14)" x="1562.5" y="167.5" font-size="19" fill="#1b3a35" stroke="#1b3a35" stroke-width="0.4"><tspan letter-spacing="0.3">RKU_ARSA3_90</tspan><tspan letter-spacing="1.2">_vocal_</tspan></text><rect x="1570" y="144" width="8" height="34" fill="#4b8f82"/><rect x="1572" y="146" width="6" height="30" fill="#92fde8"/><rect x="1584" y="144" width="16" height="34" fill="#4b8f82"/><rect x="1586" y="146" width="14" height="30" fill="#92fde8"/><text clip-path="url(#c15)" x="1590.5" y="167.5" font-size="19" fill="#1b3a35" stroke="#1b3a35" stroke-width="0.4"><tspan letter-spacing="0.3">RKU_ARSA3_90</tspan><tspan letter-spacing="1.2">_vocal_</tspan></text><rect x="1600" y="144" width="10" height="34" fill="#4b8f82"/><rect x="1602" y="146" width="8" height="30" fill="#92fde8"/><text clip-path="url(#c16)" x="1606.5" y="167.5" font-size="19" fill="#1b3a35" stroke="#1b3a35" stroke-width="0.4"><tspan letter-spacing="0.3">RKU_ARSA3_90</tspan><tspan letter-spacing="1.2">_vocal_</tspan></text><rect x="1610" y="144" width="4" height="34" fill="#4b8f82"/><rect x="1612" y="146" width="2" height="30" fill="#92fde8"/><rect x="1614" y="144" width="10" height="34" fill="#4b8f82"/><rect x="1616" y="146" width="8" height="30" fill="#92fde8"/><text clip-path="url(#c17)" x="1620.5" y="167.5" font-size="19" fill="#1b3a35" stroke="#1b3a35" stroke-width="0.4"><tspan letter-spacing="0.3">RKU_ARSA3_90</tspan><tspan letter-spacing="1.2">_vocal_</tspan></text><rect x="1624" y="144" width="4" height="34" fill="#4b8f82"/><rect x="1626" y="146" width="2" height="30" fill="#92fde8"/><rect x="1628" y="144" width="6" height="34" fill="#4b8f82"/><rect x="1630" y="146" width="4" height="30" fill="#92fde8"/><rect x="1634" y="144" width="4" height="34" fill="#4b8f82"/><rect x="1636" y="146" width="2" height="30" fill="#92fde8"/><rect x="1642" y="144" width="14" height="34" fill="#4b8f82"/><rect x="1644" y="146" width="12" height="30" fill="#92fde8"/><text clip-path="url(#c18)" x="1648.5" y="167.5" font-size="19" fill="#1b3a35" stroke="#1b3a35" stroke-width="0.4"><tspan letter-spacing="0.3">RKU_ARSA3_90</tspan><tspan letter-spacing="1.2">_vocal_</tspan></text><rect x="1656" y="144" width="10" height="34" fill="#4b8f82"/><rect x="1658" y="146" width="8" height="30" fill="#92fde8"/><text clip-path="url(#c19)" x="1662.5" y="167.5" font-size="19" fill="#1b3a35" stroke="#1b3a35" stroke-width="0.4"><tspan letter-spacing="0.3">RKU_ARSA3_90</tspan><tspan letter-spacing="1.2">_vocal_</tspan></text><rect x="1666" y="144" width="4" height="34" fill="#4b8f82"/><rect x="1668" y="146" width="2" height="30" fill="#92fde8"/><rect x="1670" y="144" width="10" height="34" fill="#4b8f82"/><rect x="1672" y="146" width="8" height="30" fill="#92fde8"/><text clip-path="url(#c20)" x="1676.5" y="167.5" font-size="19" fill="#1b3a35" stroke="#1b3a35" stroke-width="0.4"><tspan letter-spacing="0.3">RKU_ARSA3_90</tspan><tspan letter-spacing="1.2">_vocal_</tspan></text><rect x="1680" y="144" width="4" height="34" fill="#4b8f82"/><rect x="1682" y="146" width="2" height="30" fill="#92fde8"/><rect x="1684" y="144" width="8" height="34" fill="#4b8f82"/><rect x="1686" y="146" width="6" height="30" fill="#92fde8"/><rect x="1698" y="144" width="14" height="34" fill="#4b8f82"/><rect x="1700" y="146" width="12" height="30" fill="#92fde8"/><text clip-path="url(#c21)" x="1704.5" y="167.5" font-size="19" fill="#1b3a35" stroke="#1b3a35" stroke-width="0.4"><tspan letter-spacing="0.3">RKU_ARSA3_90</tspan><tspan letter-spacing="1.2">_vocal_</tspan></text><rect x="1828" y="144" width="226" height="34" fill="#4b8f82"/><rect x="1830" y="146" width="224" height="30" fill="#92fde8"/><text clip-path="url(#c22)" x="1834.5" y="167.5" font-size="19" fill="#1b3a35" stroke="#1b3a35" stroke-width="0.4"><tspan letter-spacing="0.3">RKU_ARSA3_90</tspan><tspan letter-spacing="1.2">_vocal_</tspan></text><rect x="589" y="146" width="2" height="6" fill="#111"/><rect x="589" y="170" width="2" height="6" fill="#111"/><rect x="603" y="146" width="2" height="6" fill="#111"/><rect x="603" y="170" width="2" height="6" fill="#111"/><rect x="617" y="146" width="2" height="6" fill="#111"/><rect x="617" y="170" width="2" height="6" fill="#111"/><rect x="632" y="146" width="2" height="6" fill="#111"/><rect x="632" y="170" width="2" height="6" fill="#111"/><rect x="801" y="146" width="2" height="6" fill="#111"/><rect x="801" y="170" width="2" height="6" fill="#111"/><rect x="815" y="146" width="2" height="6" fill="#111"/><rect x="815" y="170" width="2" height="6" fill="#111"/><rect x="829" y="146" width="2" height="6" fill="#111"/><rect x="829" y="170" width="2" height="6" fill="#111"/><rect x="843" y="146" width="2" height="6" fill="#111"/><rect x="843" y="170" width="2" height="6" fill="#111"/><rect x="858" y="146" width="2" height="6" fill="#111"/><rect x="858" y="170" width="2" height="6" fill="#111"/><rect x="1144" y="146" width="2" height="6" fill="#111"/><rect x="1144" y="170" width="2" height="6" fill="#111"/><rect x="1158" y="146" width="2" height="6" fill="#111"/><rect x="1158" y="170" width="2" height="6" fill="#111"/><rect x="1172" y="146" width="2" height="6" fill="#111"/><rect x="1172" y="170" width="2" height="6" fill="#111"/><rect x="1186" y="146" width="2" height="6" fill="#111"/><rect x="1186" y="170" width="2" height="6" fill="#111"/><rect x="1200" y="146" width="2" height="6" fill="#111"/><rect x="1200" y="170" width="2" height="6" fill="#111"/><rect x="1214" y="146" width="2" height="6" fill="#111"/><rect x="1214" y="170" width="2" height="6" fill="#111"/><rect x="1229" y="146" width="2" height="6" fill="#111"/><rect x="1229" y="170" width="2" height="6" fill="#111"/><rect x="1243" y="146" width="2" height="6" fill="#111"/><rect x="1243" y="170" width="2" height="6" fill="#111"/><rect x="1257" y="146" width="2" height="6" fill="#111"/><rect x="1257" y="170" width="2" height="6" fill="#111"/><svg x="628" y="182" width="16" height="34"><rect width="16" height="34" fill="url(#hatch)"/></svg><svg x="670" y="182" width="20" height="34"><rect width="20" height="34" fill="url(#hatch)"/></svg><svg x="1094" y="182" width="24" height="34"><rect width="24" height="34" fill="url(#hatch)"/></svg><svg x="1192" y="182" width="38" height="34"><rect width="38" height="34" fill="url(#hatch)"/></svg><svg x="1248" y="182" width="22" height="34"><rect width="22" height="34" fill="url(#hatch)"/></svg><svg x="1368" y="182" width="18" height="34"><rect width="18" height="34" fill="url(#hatch)"/></svg><svg x="1698" y="182" width="48" height="34"><rect width="48" height="34" fill="url(#hatch)"/></svg><rect x="606" y="182" width="22" height="34" fill="#4b8f82"/><rect x="608" y="184" width="20" height="30" fill="#92fde8"/><text clip-path="url(#c23)" x="612.5" y="205.5" font-size="19" fill="#1b3a35" stroke="#1b3a35" stroke-width="0.4"><tspan letter-spacing="0.3">RKU_ARSA3_90</tspan><tspan letter-spacing="1.2">_vocal_</tspan></text><rect x="644" y="182" width="26" height="34" fill="#4b8f82"/><rect x="646" y="184" width="24" height="30" fill="#92fde8"/><text clip-path="url(#c24)" x="650.5" y="205.5" font-size="19" fill="#1b3a35" stroke="#1b3a35" stroke-width="0.4"><tspan letter-spacing="0.3">RKU_ARSA3_90</tspan><tspan letter-spacing="1.2">_vocal_</tspan></text><rect x="1068" y="182" width="26" height="34" fill="#4b8f82"/><rect x="1070" y="184" width="24" height="30" fill="#92fde8"/><text clip-path="url(#c25)" x="1074.5" y="205.5" font-size="19" fill="#1b3a35" stroke="#1b3a35" stroke-width="0.4"><tspan letter-spacing="0.3">RKU_ARSA3_90</tspan><tspan letter-spacing="1.2">_vocal_</tspan></text><rect x="1174" y="182" width="18" height="34" fill="#4b8f82"/><rect x="1176" y="184" width="16" height="30" fill="#92fde8"/><text clip-path="url(#c26)" x="1180.5" y="205.5" font-size="19" fill="#1b3a35" stroke="#1b3a35" stroke-width="0.4"><tspan letter-spacing="0.3">RKU_ARSA3_90</tspan><tspan letter-spacing="1.2">_vocal_</tspan></text><rect x="1230" y="182" width="18" height="34" fill="#4b8f82"/><rect x="1232" y="184" width="16" height="30" fill="#92fde8"/><text clip-path="url(#c27)" x="1236.5" y="205.5" font-size="19" fill="#1b3a35" stroke="#1b3a35" stroke-width="0.4"><tspan letter-spacing="0.3">RKU_ARSA3_90</tspan><tspan letter-spacing="1.2">_vocal_</tspan></text><rect x="1270" y="182" width="98" height="34" fill="#4b8f82"/><rect x="1272" y="184" width="96" height="30" fill="#92fde8"/><text clip-path="url(#c28)" x="1276.5" y="205.5" font-size="19" fill="#1b3a35" stroke="#1b3a35" stroke-width="0.4"><tspan letter-spacing="0.3">RKU_ARSA3_90</tspan><tspan letter-spacing="1.2">_vocal_</tspan></text><rect x="1600" y="182" width="98" height="34" fill="#4b8f82"/><rect x="1602" y="184" width="96" height="30" fill="#92fde8"/><text clip-path="url(#c29)" x="1606.5" y="205.5" font-size="19" fill="#1b3a35" stroke="#1b3a35" stroke-width="0.4"><tspan letter-spacing="0.3">RKU_ARSA3_90</tspan><tspan letter-spacing="1.2">_vocal_</tspan></text><rect x="661" y="184" width="2" height="6" fill="#111"/><rect x="661" y="208" width="2" height="6" fill="#111"/><rect x="1285" y="184" width="2" height="6" fill="#111"/><rect x="1285" y="208" width="2" height="6" fill="#111"/><rect x="1299" y="184" width="2" height="6" fill="#111"/><rect x="1299" y="208" width="2" height="6" fill="#111"/><rect x="1313" y="184" width="2" height="6" fill="#111"/><rect x="1313" y="208" width="2" height="6" fill="#111"/><rect x="1328" y="184" width="2" height="6" fill="#111"/><rect x="1328" y="208" width="2" height="6" fill="#111"/><rect x="1342" y="184" width="2" height="6" fill="#111"/><rect x="1342" y="208" width="2" height="6" fill="#111"/><rect x="1356" y="184" width="2" height="6" fill="#111"/><rect x="1356" y="208" width="2" height="6" fill="#111"/><text clip-path="url(#c30)" x="244" y="939.2" font-size="19" fill="#1b3a35" stroke="#1b3a35" stroke-width="0.4"><tspan letter-spacing="0.3">OSS_IS2_85</tspan><tspan letter-spacing="1.75">_horns_vintage_soul_</tspan><tspan letter-spacing="1.0">my_baby_Emin (B</tspan></text><text clip-path="url(#c31)" x="810" y="939.2" font-size="19" fill="#1b3a35" stroke="#1b3a35" stroke-width="0.4"><tspan letter-spacing="0.3">OSS_IS2_85</tspan><tspan letter-spacing="1.75">_horns_vintage_soul_</tspan><tspan letter-spacing="1.0">my_baby_Emin (B</tspan></text><text clip-path="url(#c32)" x="1038" y="939.2" font-size="19" fill="#1b3a35" stroke="#1b3a35" stroke-width="0.4"><tspan letter-spacing="0.3">OSS_IS2_85</tspan><tspan letter-spacing="1.75">_horns_vintage_soul_</tspan><tspan letter-spacing="1.0">my_baby_Emin (B</tspan></text><text clip-path="url(#c33)" x="1888" y="939.2" font-size="19" fill="#1b3a35" stroke="#1b3a35" stroke-width="0.4"><tspan letter-spacing="0.3">OSS_IS2_85</tspan><tspan letter-spacing="1.75">_horns_vintage_soul_</tspan><tspan letter-spacing="1.0">my_baby_Emin (B</tspan></text><rect x="670" y="1212" width="28" height="70" fill="#4b8f82"/><rect x="672" y="1214" width="26" height="30" fill="#92fde8"/><rect x="672" y="1246" width="26" height="36" fill="#92fde8"/><text clip-path="url(#c34)" x="677" y="1235.5" font-size="19" fill="#1b3a35" stroke="#1b3a35" stroke-width="0.4">PM</text><g clip-path="url(#c34)" fill="#16201f"><rect x="672" y="1253.9" width="28" height="1.3"/><rect x="672" y="1271.9" width="28" height="1.3"/><path d="M673 1254.5 l3 -4 l2.5 -3.5 l3 0.5 l2.5 3 l3 -1.2 l3.5 0.5 l2 4.7 l-2 4.7 l-3.5 0.5 l-3 -1.2 l-2.5 2.2 l-3 0.5 l-2.5 -2.7 Z"/><path d="M673 1272.5 l5 -2.2 l3 -0.5 l2.5 -4.3 l2.5 4.3 l3 -0.5 l3 3.2 l-3 3.2 l-3 -0.5 l-2.5 4.3 l-2.5 -4.3 l-3 -0.5 Z"/></g><rect x="784" y="1212" width="28" height="70" fill="#4b8f82"/><rect x="786" y="1214" width="26" height="30" fill="#92fde8"/><rect x="786" y="1246" width="26" height="36" fill="#92fde8"/><text clip-path="url(#c35)" x="791" y="1235.5" font-size="19" fill="#1b3a35" stroke="#1b3a35" stroke-width="0.4">PM</text><g clip-path="url(#c35)" fill="#16201f"><rect x="786" y="1253.9" width="28" height="1.3"/><rect x="786" y="1271.9" width="28" height="1.3"/><path d="M787 1254.5 l3 -4 l2.5 -3.5 l3 0.5 l2.5 3 l3 -1.2 l3.5 0.5 l2 4.7 l-2 4.7 l-3.5 0.5 l-3 -1.2 l-2.5 2.2 l-3 0.5 l-2.5 -2.7 Z"/><path d="M787 1272.5 l5 -2.2 l3 -0.5 l2.5 -4.3 l2.5 4.3 l3 -0.5 l3 3.2 l-3 3.2 l-3 -0.5 l-2.5 4.3 l-2.5 -4.3 l-3 -0.5 Z"/></g><rect x="1692" y="1212" width="28" height="70" fill="#4b8f82"/><rect x="1694" y="1214" width="26" height="30" fill="#92fde8"/><rect x="1694" y="1246" width="26" height="36" fill="#92fde8"/><text clip-path="url(#c36)" x="1699" y="1235.5" font-size="19" fill="#1b3a35" stroke="#1b3a35" stroke-width="0.4">PM</text><g clip-path="url(#c36)" fill="#16201f"><rect x="1694" y="1253.9" width="28" height="1.3"/><rect x="1694" y="1271.9" width="28" height="1.3"/><path d="M1695 1254.5 l3 -4 l2.5 -3.5 l3 0.5 l2.5 3 l3 -1.2 l3.5 0.5 l2 4.7 l-2 4.7 l-3.5 0.5 l-3 -1.2 l-2.5 2.2 l-3 0.5 l-2.5 -2.7 Z"/><path d="M1695 1272.5 l5 -2.2 l3 -0.5 l2.5 -4.3 l2.5 4.3 l3 -0.5 l3 3.2 l-3 3.2 l-3 -0.5 l-2.5 4.3 l-2.5 -4.3 l-3 -0.5 Z"/></g><rect x="1804" y="1212" width="30" height="70" fill="#4b8f82"/><rect x="1806" y="1214" width="28" height="30" fill="#92fde8"/><rect x="1806" y="1246" width="28" height="36" fill="#92fde8"/><text clip-path="url(#c37)" x="1811" y="1235.5" font-size="19" fill="#1b3a35" stroke="#1b3a35" stroke-width="0.4">PM</text><g clip-path="url(#c37)" fill="#16201f"><rect x="1806" y="1253.9" width="30" height="1.3"/><rect x="1806" y="1271.9" width="30" height="1.3"/><path d="M1807 1254.5 l3 -4 l2.5 -3.5 l3 0.5 l2.5 3 l3 -1.2 l3.5 0.5 l2 4.7 l-2 4.7 l-3.5 0.5 l-3 -1.2 l-2.5 2.2 l-3 0.5 l-2.5 -2.7 Z"/><path d="M1807 1272.5 l5 -2.2 l3 -0.5 l2.5 -4.3 l2.5 4.3 l3 -0.5 l3 3.2 l-3 3.2 l-3 -0.5 l-2.5 4.3 l-2.5 -4.3 l-3 -0.5 Z"/></g><rect x="10" y="102" width="2398" height="22" fill="#2f2f2f"/><rect x="2408" y="102" width="8" height="26" fill="#353535"/><rect x="464" y="102" width="2" height="22" fill="#222"/><rect x="918" y="102" width="2" height="22" fill="#222"/><rect x="1372" y="102" width="2" height="22" fill="#222"/><rect x="1600" y="102" width="2" height="22" fill="#222"/><rect x="1826" y="102" width="2" height="22" fill="#222"/><rect x="2280" y="102" width="2" height="22" fill="#222"/><rect x="10" y="80" width="2400" height="22" fill="#8c8c8c"/><rect x="12" y="82" width="2396" height="18" fill="#5e5e5e"/><path d="M12 82.5 L27 91 L12 99.5" fill="#5e5e5e" stroke="#8c8c8c" stroke-width="1.6"/><path d="M2408 82.5 L2393 91 L2408 99.5" fill="#5e5e5e" stroke="#8c8c8c" stroke-width="1.6"/><rect x="10" y="68" width="2" height="12" fill="#8a8a8a"/><rect x="12" y="68" width="2" height="2" fill="#8a8a8a"/><text x="21" y="76.3" font-size="20" fill="#9a9a9a" stroke="#9a9a9a" stroke-width="0.45">1</text><rect x="66" y="78" width="1.5" height="2" fill="#8a8a8a"/><rect x="124" y="68" width="2" height="12" fill="#8a8a8a"/><rect x="126" y="68" width="2" height="2" fill="#8a8a8a"/><text x="135" y="76.3" font-size="20" fill="#9a9a9a" stroke="#9a9a9a" stroke-width="0.45">9</text><rect x="180" y="78" width="1.5" height="2" fill="#8a8a8a"/><rect x="238" y="68" width="2" height="12" fill="#8a8a8a"/><rect x="240" y="68" width="2" height="2" fill="#8a8a8a"/><text x="249" y="76.3" font-size="20" fill="#9a9a9a" stroke="#9a9a9a" stroke-width="0.45">17</text><rect x="294" y="78" width="1.5" height="2" fill="#8a8a8a"/><rect x="350" y="68" width="2" height="12" fill="#8a8a8a"/><rect x="352" y="68" width="2" height="2" fill="#8a8a8a"/><text x="361" y="76.3" font-size="20" fill="#9a9a9a" stroke="#9a9a9a" stroke-width="0.45">25</text><rect x="408" y="78" width="1.5" height="2" fill="#8a8a8a"/><rect x="464" y="68" width="2" height="12" fill="#8a8a8a"/><rect x="466" y="68" width="2" height="2" fill="#8a8a8a"/><text x="475" y="76.3" font-size="20" fill="#9a9a9a" stroke="#9a9a9a" stroke-width="0.45">33</text><rect x="520" y="78" width="1.5" height="2" fill="#8a8a8a"/><rect x="578" y="68" width="2" height="12" fill="#8a8a8a"/><rect x="580" y="68" width="2" height="2" fill="#8a8a8a"/><text x="589" y="76.3" font-size="20" fill="#9a9a9a" stroke="#9a9a9a" stroke-width="0.45">41</text><rect x="634" y="78" width="1.5" height="2" fill="#8a8a8a"/><rect x="692" y="68" width="2" height="12" fill="#8a8a8a"/><rect x="694" y="68" width="2" height="2" fill="#8a8a8a"/><text x="703" y="76.3" font-size="20" fill="#9a9a9a" stroke="#9a9a9a" stroke-width="0.45">49</text><rect x="748" y="78" width="1.5" height="2" fill="#8a8a8a"/><rect x="804" y="68" width="2" height="12" fill="#8a8a8a"/><rect x="806" y="68" width="2" height="2" fill="#8a8a8a"/><text x="815" y="76.3" font-size="20" fill="#9a9a9a" stroke="#9a9a9a" stroke-width="0.45">57</text><rect x="862" y="78" width="1.5" height="2" fill="#8a8a8a"/><rect x="918" y="68" width="2" height="12" fill="#8a8a8a"/><rect x="920" y="68" width="2" height="2" fill="#8a8a8a"/><text x="929" y="76.3" font-size="20" fill="#9a9a9a" stroke="#9a9a9a" stroke-width="0.45">65</text><rect x="974" y="78" width="1.5" height="2" fill="#8a8a8a"/><rect x="1032" y="68" width="2" height="12" fill="#8a8a8a"/><rect x="1034" y="68" width="2" height="2" fill="#8a8a8a"/><text x="1043" y="76.3" font-size="20" fill="#9a9a9a" stroke="#9a9a9a" stroke-width="0.45">73</text><rect x="1088" y="78" width="1.5" height="2" fill="#8a8a8a"/><rect x="1146" y="68" width="2" height="12" fill="#8a8a8a"/><rect x="1148" y="68" width="2" height="2" fill="#8a8a8a"/><text x="1157" y="76.3" font-size="20" fill="#9a9a9a" stroke="#9a9a9a" stroke-width="0.45">81</text><rect x="1202" y="78" width="1.5" height="2" fill="#8a8a8a"/><rect x="1258" y="68" width="2" height="12" fill="#8a8a8a"/><rect x="1260" y="68" width="2" height="2" fill="#8a8a8a"/><text x="1269" y="76.3" font-size="20" fill="#9a9a9a" stroke="#9a9a9a" stroke-width="0.45">89</text><rect x="1316" y="78" width="1.5" height="2" fill="#8a8a8a"/><rect x="1372" y="68" width="2" height="12" fill="#8a8a8a"/><rect x="1374" y="68" width="2" height="2" fill="#8a8a8a"/><text x="1383" y="76.3" font-size="20" fill="#9a9a9a" stroke="#9a9a9a" stroke-width="0.45">97</text><rect x="1428" y="78" width="1.5" height="2" fill="#8a8a8a"/><rect x="1486" y="68" width="2" height="12" fill="#8a8a8a"/><rect x="1488" y="68" width="2" height="2" fill="#8a8a8a"/><text x="1497" y="76.3" font-size="20" fill="#9a9a9a" stroke="#9a9a9a" stroke-width="0.45">105</text><rect x="1542" y="78" width="1.5" height="2" fill="#8a8a8a"/><rect x="1600" y="68" width="2" height="12" fill="#8a8a8a"/><rect x="1602" y="68" width="2" height="2" fill="#8a8a8a"/><text x="1611" y="76.3" font-size="20" fill="#9a9a9a" stroke="#9a9a9a" stroke-width="0.45">113</text><rect x="1656" y="78" width="1.5" height="2" fill="#8a8a8a"/><rect x="1712" y="68" width="2" height="12" fill="#8a8a8a"/><rect x="1714" y="68" width="2" height="2" fill="#8a8a8a"/><text x="1723" y="76.3" font-size="20" fill="#9a9a9a" stroke="#9a9a9a" stroke-width="0.45">121</text><rect x="1770" y="78" width="1.5" height="2" fill="#8a8a8a"/><rect x="1826" y="68" width="2" height="12" fill="#8a8a8a"/><rect x="1828" y="68" width="2" height="2" fill="#8a8a8a"/><text x="1837" y="76.3" font-size="20" fill="#9a9a9a" stroke="#9a9a9a" stroke-width="0.45">129</text><rect x="1882" y="78" width="1.5" height="2" fill="#8a8a8a"/><rect x="1940" y="68" width="2" height="12" fill="#8a8a8a"/><rect x="1942" y="68" width="2" height="2" fill="#8a8a8a"/><text x="1951" y="76.3" font-size="20" fill="#9a9a9a" stroke="#9a9a9a" stroke-width="0.45">137</text><rect x="1996" y="78" width="1.5" height="2" fill="#8a8a8a"/><rect x="2054" y="68" width="2" height="12" fill="#8a8a8a"/><rect x="2056" y="68" width="2" height="2" fill="#8a8a8a"/><text x="2065" y="76.3" font-size="20" fill="#9a9a9a" stroke="#9a9a9a" stroke-width="0.45">145</text><rect x="2110" y="78" width="1.5" height="2" fill="#8a8a8a"/><rect x="2166" y="68" width="2" height="12" fill="#8a8a8a"/><rect x="2168" y="68" width="2" height="2" fill="#8a8a8a"/><text x="2177" y="76.3" font-size="20" fill="#9a9a9a" stroke="#9a9a9a" stroke-width="0.45">153</text><rect x="2224" y="78" width="1.5" height="2" fill="#8a8a8a"/><rect x="2280" y="68" width="2" height="12" fill="#8a8a8a"/><rect x="2282" y="68" width="2" height="2" fill="#8a8a8a"/><text x="2291" y="76.3" font-size="20" fill="#9a9a9a" stroke="#9a9a9a" stroke-width="0.45">161</text><rect x="2336" y="78" width="1.5" height="2" fill="#8a8a8a"/><rect x="2394" y="68" width="2" height="12" fill="#8a8a8a"/><rect x="10" y="102" width="2" height="1326" fill="#999999"/><path d="M11.5 103.8 L26.5 113 L11.5 122.2 Z" fill="#5c5c5c" stroke="#999" stroke-width="1.5"/><text x="34" y="120" font-size="20" fill="#bababa" stroke="#bababa" stroke-width="0.45" letter-spacing="1.65">Intro</text><rect x="238" y="102" width="2" height="1326" fill="#999999"/><path d="M239.5 103.8 L254.5 113 L239.5 122.2 Z" fill="#5c5c5c" stroke="#999" stroke-width="1.5"/><text x="262" y="120" font-size="20" fill="#bababa" stroke="#bababa" stroke-width="0.45" letter-spacing="0.6">Break</text><rect x="350" y="102" width="2" height="1326" fill="#999999"/><path d="M351.5 103.8 L366.5 113 L351.5 122.2 Z" fill="#5c5c5c" stroke="#999" stroke-width="1.5"/><text x="374" y="120" font-size="20" fill="#bababa" stroke="#bababa" stroke-width="0.45" letter-spacing="0.7">Drop</text><rect x="578" y="102" width="2" height="1326" fill="#999999"/><path d="M579.5 103.8 L594.5 113 L579.5 122.2 Z" fill="#5c5c5c" stroke="#999" stroke-width="1.5"/><text x="602" y="120" font-size="20" fill="#bababa" stroke="#bababa" stroke-width="0.45" letter-spacing="0.6">Break</text><rect x="692" y="102" width="2" height="1326" fill="#999999"/><path d="M693.5 103.8 L708.5 113 L693.5 122.2 Z" fill="#5c5c5c" stroke="#999" stroke-width="1.5"/><text x="716" y="120" font-size="20" fill="#bababa" stroke="#bababa" stroke-width="0.45" letter-spacing="0.7">Drop</text><rect x="1146" y="102" width="2" height="1326" fill="#999999"/><path d="M1147.5 103.8 L1162.5 113 L1147.5 122.2 Z" fill="#5c5c5c" stroke="#999" stroke-width="1.5"/><text x="1170" y="120" font-size="20" fill="#bababa" stroke="#bababa" stroke-width="0.45" letter-spacing="0.6">Break</text><rect x="1712" y="102" width="2" height="1326" fill="#999999"/><path d="M1713.5 103.8 L1728.5 113 L1713.5 122.2 Z" fill="#5c5c5c" stroke="#999" stroke-width="1.5"/><text x="1736" y="120" font-size="20" fill="#bababa" stroke="#bababa" stroke-width="0.45" letter-spacing="0.7">Drop</text><rect x="2054" y="102" width="2" height="1326" fill="#999999"/><path d="M2055.5 103.8 L2070.5 113 L2055.5 122.2 Z" fill="#5c5c5c" stroke="#999" stroke-width="1.5"/><text x="2078" y="120" font-size="20" fill="#bababa" stroke="#bababa" stroke-width="0.45" letter-spacing="1.1">Outro</text><rect x="2408" y="80" width="2" height="1348" fill="#999999"/><rect x="10" y="144" width="2" height="34" fill="#a5f2ff"/><rect x="6" y="1428" width="2612" height="42" fill="#353535"/><rect x="10" y="1438" width="2" height="6" fill="#8a8a8a"/><rect x="10" y="1442" width="4" height="2" fill="#8a8a8a"/><text x="16.6" y="1450.3" font-size="20" fill="#989898" stroke="#989898" stroke-width="0.45" letter-spacing="0.4">0:00</text><rect x="226" y="1428" width="2" height="16" fill="#8a8a8a"/><rect x="226" y="1442" width="4" height="2" fill="#8a8a8a"/><text x="232.6" y="1450.3" font-size="20" fill="#989898" stroke="#989898" stroke-width="0.45" letter-spacing="0.4">0:30</text><rect x="442" y="1428" width="2" height="16" fill="#8a8a8a"/><rect x="442" y="1442" width="4" height="2" fill="#8a8a8a"/><text x="448.6" y="1450.3" font-size="20" fill="#989898" stroke="#989898" stroke-width="0.45" letter-spacing="0.4">1:00</text><rect x="660" y="1428" width="2" height="16" fill="#8a8a8a"/><rect x="660" y="1442" width="4" height="2" fill="#8a8a8a"/><text x="666.6" y="1450.3" font-size="20" fill="#989898" stroke="#989898" stroke-width="0.45" letter-spacing="0.4">1:30</text><rect x="876" y="1428" width="2" height="16" fill="#8a8a8a"/><rect x="876" y="1442" width="4" height="2" fill="#8a8a8a"/><text x="882.6" y="1450.3" font-size="20" fill="#989898" stroke="#989898" stroke-width="0.45" letter-spacing="0.4">2:00</text><rect x="1092" y="1428" width="2" height="16" fill="#8a8a8a"/><rect x="1092" y="1442" width="4" height="2" fill="#8a8a8a"/><text x="1098.6" y="1450.3" font-size="20" fill="#989898" stroke="#989898" stroke-width="0.45" letter-spacing="0.4">2:30</text><rect x="1308" y="1428" width="2" height="16" fill="#8a8a8a"/><rect x="1308" y="1442" width="4" height="2" fill="#8a8a8a"/><text x="1314.6" y="1450.3" font-size="20" fill="#989898" stroke="#989898" stroke-width="0.45" letter-spacing="0.4">3:00</text><rect x="1524" y="1428" width="2" height="16" fill="#8a8a8a"/><rect x="1524" y="1442" width="4" height="2" fill="#8a8a8a"/><text x="1530.6" y="1450.3" font-size="20" fill="#989898" stroke="#989898" stroke-width="0.45" letter-spacing="0.4">3:30</text><rect x="1740" y="1428" width="2" height="16" fill="#8a8a8a"/><rect x="1740" y="1442" width="4" height="2" fill="#8a8a8a"/><text x="1746.6" y="1450.3" font-size="20" fill="#989898" stroke="#989898" stroke-width="0.45" letter-spacing="0.4">4:00</text><rect x="1958" y="1428" width="2" height="16" fill="#8a8a8a"/><rect x="1958" y="1442" width="4" height="2" fill="#8a8a8a"/><text x="1964.6" y="1450.3" font-size="20" fill="#989898" stroke="#989898" stroke-width="0.45" letter-spacing="0.4">4:30</text><rect x="2174" y="1428" width="2" height="16" fill="#8a8a8a"/><rect x="2174" y="1442" width="4" height="2" fill="#8a8a8a"/><text x="2180.6" y="1450.3" font-size="20" fill="#989898" stroke="#989898" stroke-width="0.45" letter-spacing="0.4">5:00</text><rect x="46" y="1428" width="2" height="4" fill="#7a7a7a"/><rect x="82" y="1428" width="2" height="4" fill="#7a7a7a"/><rect x="118" y="1428" width="2" height="4" fill="#7a7a7a"/><rect x="154" y="1428" width="2" height="4" fill="#7a7a7a"/><rect x="190" y="1428" width="2" height="4" fill="#7a7a7a"/><rect x="262" y="1428" width="2" height="4" fill="#7a7a7a"/><rect x="298" y="1428" width="2" height="4" fill="#7a7a7a"/><rect x="334" y="1428" width="2" height="4" fill="#7a7a7a"/><rect x="370" y="1428" width="2" height="4" fill="#7a7a7a"/><rect x="406" y="1428" width="2" height="4" fill="#7a7a7a"/><rect x="478" y="1428" width="2" height="4" fill="#7a7a7a"/><rect x="514" y="1428" width="2" height="4" fill="#7a7a7a"/><rect x="552" y="1428" width="2" height="4" fill="#7a7a7a"/><rect x="588" y="1428" width="2" height="4" fill="#7a7a7a"/><rect x="624" y="1428" width="2" height="4" fill="#7a7a7a"/><rect x="696" y="1428" width="2" height="4" fill="#7a7a7a"/><rect x="732" y="1428" width="2" height="4" fill="#7a7a7a"/><rect x="768" y="1428" width="2" height="4" fill="#7a7a7a"/><rect x="804" y="1428" width="2" height="4" fill="#7a7a7a"/><rect x="840" y="1428" width="2" height="4" fill="#7a7a7a"/><rect x="912" y="1428" width="2" height="4" fill="#7a7a7a"/><rect x="948" y="1428" width="2" height="4" fill="#7a7a7a"/><rect x="984" y="1428" width="2" height="4" fill="#7a7a7a"/><rect x="1020" y="1428" width="2" height="4" fill="#7a7a7a"/><rect x="1056" y="1428" width="2" height="4" fill="#7a7a7a"/><rect x="1128" y="1428" width="2" height="4" fill="#7a7a7a"/><rect x="1164" y="1428" width="2" height="4" fill="#7a7a7a"/><rect x="1200" y="1428" width="2" height="4" fill="#7a7a7a"/><rect x="1236" y="1428" width="2" height="4" fill="#7a7a7a"/><rect x="1272" y="1428" width="2" height="4" fill="#7a7a7a"/><rect x="1344" y="1428" width="2" height="4" fill="#7a7a7a"/><rect x="1380" y="1428" width="2" height="4" fill="#7a7a7a"/><rect x="1416" y="1428" width="2" height="4" fill="#7a7a7a"/><rect x="1452" y="1428" width="2" height="4" fill="#7a7a7a"/><rect x="1488" y="1428" width="2" height="4" fill="#7a7a7a"/><rect x="1560" y="1428" width="2" height="4" fill="#7a7a7a"/><rect x="1596" y="1428" width="2" height="4" fill="#7a7a7a"/><rect x="1632" y="1428" width="2" height="4" fill="#7a7a7a"/><rect x="1668" y="1428" width="2" height="4" fill="#7a7a7a"/><rect x="1704" y="1428" width="2" height="4" fill="#7a7a7a"/><rect x="1778" y="1428" width="2" height="4" fill="#7a7a7a"/><rect x="1814" y="1428" width="2" height="4" fill="#7a7a7a"/><rect x="1850" y="1428" width="2" height="4" fill="#7a7a7a"/><rect x="1886" y="1428" width="2" height="4" fill="#7a7a7a"/><rect x="1922" y="1428" width="2" height="4" fill="#7a7a7a"/><rect x="1994" y="1428" width="2" height="4" fill="#7a7a7a"/><rect x="2030" y="1428" width="2" height="4" fill="#7a7a7a"/><rect x="2066" y="1428" width="2" height="4" fill="#7a7a7a"/><rect x="2102" y="1428" width="2" height="4" fill="#7a7a7a"/><rect x="2138" y="1428" width="2" height="4" fill="#7a7a7a"/><rect x="2210" y="1428" width="2" height="4" fill="#7a7a7a"/><rect x="2246" y="1428" width="2" height="4" fill="#7a7a7a"/><rect x="2282" y="1428" width="2" height="4" fill="#7a7a7a"/><rect x="2318" y="1428" width="2" height="4" fill="#7a7a7a"/><rect x="2354" y="1428" width="2" height="4" fill="#7a7a7a"/><path d="M10 1430 L10 1438 L18.3 1438 Z" fill="#50bed7"/><text x="2336" y="1416" font-size="33.3" fill="#777777" font-weight="bold" textLength="70.5" lengthAdjust="spacingAndGlyphs">16/1</text><rect x="2390" y="1428" width="2" height="6" fill="#8a8a8a"/><rect x="2330" y="6" width="288" height="4" fill="#7f7f7f"/><rect x="2336" y="10" width="282" height="24" fill="#333333"/><rect x="2336" y="34" width="282" height="4" fill="#262626"/><path d="M8 24 V1464 Q8 1472 16 1472 H2618" stroke="#7f7f7f" stroke-width="4" fill="none"/><rect class="a" x="6" y="6" width="2336" height="32" rx="7" ry="7" fill="#7f7f7f"/><rect class="a" x="12" y="10" width="2326" height="24" rx="3" ry="3" fill="#333333"/><rect x="535.33" y="10.6" width="19.29" height="0.51" fill="#72ccb8" opacity="0.8" class="a"/><rect x="558.49" y="10.6" width="68.04" height="0.51" fill="#72ccb8" opacity="0.8" class="a"/><rect x="643.87" y="10.6" width="19.67" height="0.51" fill="#72ccb8" opacity="0.8" class="a"/><rect x="663.55" y="10.6" width="101.67" height="0.51" fill="#72ccb8" opacity="0.8" class="a"/><rect x="765.21" y="10.6" width="80.73" height="0.51" fill="#72ccb8" opacity="0.8" class="a"/><rect x="851.18" y="10.6" width="20.84" height="0.51" fill="#72ccb8" opacity="0.8" class="a"/><rect x="892.56" y="10.6" width="102.34" height="0.51" fill="#72ccb8" opacity="0.8" class="a"/><rect x="1008.57" y="10.6" width="34.79" height="0.51" fill="#72ccb8" opacity="0.8" class="a"/><rect x="1070.69" y="10.6" width="20.55" height="0.51" fill="#72ccb8" opacity="0.8" class="a"/><rect x="1096.28" y="10.6" width="137.04" height="0.51" fill="#72ccb8" opacity="0.8" class="a"/><rect x="1332.56" y="10.6" width="146.63" height="0.51" fill="#72ccb8" opacity="0.8" class="a"/><rect x="1481.23" y="10.6" width="15.8" height="0.51" fill="#72ccb8" opacity="0.8" class="a"/><rect x="1497.03" y="10.6" width="13.08" height="0.51" fill="#72ccb8" opacity="0.8" class="a"/><rect x="1510.11" y="10.6" width="13.57" height="0.51" fill="#72ccb8" opacity="0.8" class="a"/><rect x="1523.68" y="10.6" width="7.95" height="0.51" fill="#72ccb8" opacity="0.8" class="a"/><rect x="1537.64" y="10.6" width="15.8" height="0.51" fill="#72ccb8" opacity="0.8" class="a"/><rect x="1553.43" y="10.6" width="9.98" height="0.51" fill="#72ccb8" opacity="0.8" class="a"/><rect x="1563.42" y="10.6" width="3.59" height="0.51" fill="#72ccb8" opacity="0.8" class="a"/><rect x="1567" y="10.6" width="9.89" height="0.51" fill="#72ccb8" opacity="0.8" class="a"/><rect x="1576.89" y="10.6" width="3.59" height="0.51" fill="#72ccb8" opacity="0.8" class="a"/><rect x="1580.47" y="10.6" width="5.91" height="0.51" fill="#72ccb8" opacity="0.8" class="a"/><rect x="1586.39" y="10.6" width="4.07" height="0.51" fill="#72ccb8" opacity="0.8" class="a"/><rect x="1593.17" y="10.6" width="14.44" height="0.51" fill="#72ccb8" opacity="0.8" class="a"/><rect x="1607.61" y="10.6" width="9.98" height="0.51" fill="#72ccb8" opacity="0.8" class="a"/><rect x="1617.59" y="10.6" width="3.59" height="0.51" fill="#72ccb8" opacity="0.8" class="a"/><rect x="1621.18" y="10.6" width="9.89" height="0.51" fill="#72ccb8" opacity="0.8" class="a"/><rect x="1631.07" y="10.6" width="3.68" height="0.51" fill="#72ccb8" opacity="0.8" class="a"/><rect x="1634.75" y="10.6" width="7.66" height="0.51" fill="#72ccb8" opacity="0.8" class="a"/><rect x="1647.35" y="10.6" width="14.44" height="0.51" fill="#72ccb8" opacity="0.8" class="a"/><rect x="1772.85" y="10.6" width="220.1" height="0.51" fill="#72ccb8" opacity="0.8" class="a"/><rect x="589.7" y="10.6" width="21.13" height="0.51" fill="#72ccb8" opacity="0.8" class="a"/><rect x="626.23" y="10.6" width="25.3" height="0.51" fill="#72ccb8" opacity="0.8" class="a"/><rect x="1037.26" y="10.6" width="25.2" height="0.51" fill="#72ccb8" opacity="0.8" class="a"/><rect x="1139.99" y="10.6" width="17.54" height="0.51" fill="#72ccb8" opacity="0.8" class="a"/><rect x="1194.84" y="10.6" width="16.57" height="0.51" fill="#72ccb8" opacity="0.8" class="a"/><rect x="1233.32" y="10.6" width="95.08" height="0.51" fill="#72ccb8" opacity="0.8" class="a"/><rect x="1553.05" y="10.6" width="94.78" height="0.51" fill="#72ccb8" opacity="0.8" class="a"/><rect x="535.33" y="11.21" width="19.29" height="0.51" fill="#72ccb8" opacity="0.8" class="a"/><rect x="558.49" y="11.21" width="68.04" height="0.51" fill="#72ccb8" opacity="0.8" class="a"/><rect x="643.87" y="11.21" width="19.67" height="0.51" fill="#72ccb8" opacity="0.8" class="a"/><rect x="663.55" y="11.21" width="101.67" height="0.51" fill="#72ccb8" opacity="0.8" class="a"/><rect x="765.21" y="11.21" width="80.73" height="0.51" fill="#72ccb8" opacity="0.8" class="a"/><rect x="851.18" y="11.21" width="20.84" height="0.51" fill="#72ccb8" opacity="0.8" class="a"/><rect x="892.56" y="11.21" width="102.34" height="0.51" fill="#72ccb8" opacity="0.8" class="a"/><rect x="1008.57" y="11.21" width="34.79" height="0.51" fill="#72ccb8" opacity="0.8" class="a"/><rect x="1070.69" y="11.21" width="20.55" height="0.51" fill="#72ccb8" opacity="0.8" class="a"/><rect x="1096.28" y="11.21" width="137.04" height="0.51" fill="#72ccb8" opacity="0.8" class="a"/><rect x="1332.56" y="11.21" width="146.63" height="0.51" fill="#72ccb8" opacity="0.8" class="a"/><rect x="1481.23" y="11.21" width="15.8" height="0.51" fill="#72ccb8" opacity="0.8" class="a"/><rect x="1497.03" y="11.21" width="13.08" height="0.51" fill="#72ccb8" opacity="0.8" class="a"/><rect x="1510.11" y="11.21" width="13.57" height="0.51" fill="#72ccb8" opacity="0.8" class="a"/><rect x="1523.68" y="11.21" width="7.95" height="0.51" fill="#72ccb8" opacity="0.8" class="a"/><rect x="1537.64" y="11.21" width="15.8" height="0.51" fill="#72ccb8" opacity="0.8" class="a"/><rect x="1553.43" y="11.21" width="9.98" height="0.51" fill="#72ccb8" opacity="0.8" class="a"/><rect x="1563.42" y="11.21" width="3.59" height="0.51" fill="#72ccb8" opacity="0.8" class="a"/><rect x="1567" y="11.21" width="9.89" height="0.51" fill="#72ccb8" opacity="0.8" class="a"/><rect x="1576.89" y="11.21" width="3.59" height="0.51" fill="#72ccb8" opacity="0.8" class="a"/><rect x="1580.47" y="11.21" width="5.91" height="0.51" fill="#72ccb8" opacity="0.8" class="a"/><rect x="1586.39" y="11.21" width="4.07" height="0.51" fill="#72ccb8" opacity="0.8" class="a"/><rect x="1593.17" y="11.21" width="14.44" height="0.51" fill="#72ccb8" opacity="0.8" class="a"/><rect x="1607.61" y="11.21" width="9.98" height="0.51" fill="#72ccb8" opacity="0.8" class="a"/><rect x="1617.59" y="11.21" width="3.59" height="0.51" fill="#72ccb8" opacity="0.8" class="a"/><rect x="1621.18" y="11.21" width="9.89" height="0.51" fill="#72ccb8" opacity="0.8" class="a"/><rect x="1631.07" y="11.21" width="3.68" height="0.51" fill="#72ccb8" opacity="0.8" class="a"/><rect x="1634.75" y="11.21" width="7.66" height="0.51" fill="#72ccb8" opacity="0.8" class="a"/><rect x="1647.35" y="11.21" width="14.44" height="0.51" fill="#72ccb8" opacity="0.8" class="a"/><rect x="1772.85" y="11.21" width="220.1" height="0.51" fill="#72ccb8" opacity="0.8" class="a"/><rect x="589.7" y="11.81" width="21.13" height="0.51" fill="#72ccb8" opacity="0.8" class="a"/><rect x="626.23" y="11.81" width="25.3" height="0.51" fill="#72ccb8" opacity="0.8" class="a"/><rect x="1037.26" y="11.81" width="25.2" height="0.51" fill="#72ccb8" opacity="0.8" class="a"/><rect x="1139.99" y="11.81" width="17.54" height="0.51" fill="#72ccb8" opacity="0.8" class="a"/><rect x="1194.84" y="11.81" width="16.57" height="0.51" fill="#72ccb8" opacity="0.8" class="a"/><rect x="1233.32" y="11.81" width="95.08" height="0.51" fill="#72ccb8" opacity="0.8" class="a"/><rect x="1553.05" y="11.81" width="94.78" height="0.51" fill="#72ccb8" opacity="0.8" class="a"/><rect x="11.88" y="12.42" width="302.38" height="0.51" fill="#72ccb8" opacity="0.8" class="a"/><rect x="341.4" y="12.42" width="164.76" height="0.51" fill="#72ccb8" opacity="0.8" class="a"/><rect x="672.85" y="12.42" width="94.98" height="0.51" fill="#72ccb8" opacity="0.8" class="a"/><rect x="787.21" y="12.42" width="91.1" height="0.51" fill="#72ccb8" opacity="0.8" class="a"/><rect x="891.88" y="12.42" width="96.92" height="0.51" fill="#72ccb8" opacity="0.8" class="a"/><rect x="1002.37" y="12.42" width="94.98" height="0.51" fill="#72ccb8" opacity="0.8" class="a"/><rect x="1661.4" y="12.42" width="96.92" height="0.51" fill="#72ccb8" opacity="0.8" class="a"/><rect x="1777.7" y="12.42" width="91.1" height="0.51" fill="#72ccb8" opacity="0.8" class="a"/><rect x="1882.37" y="12.42" width="54.27" height="0.51" fill="#72ccb8" opacity="0.8" class="a"/><rect x="1992.85" y="12.42" width="102.73" height="0.51" fill="#72ccb8" opacity="0.8" class="a"/><rect x="2101.4" y="12.42" width="193.83" height="0.51" fill="#72ccb8" opacity="0.8" class="a"/><rect x="672.85" y="13.02" width="440" height="0.51" fill="#72ccb8" opacity="0.8" class="a"/><rect x="1661.4" y="13.02" width="660.97" height="0.51" fill="#72ccb8" opacity="0.8" class="a"/><rect x="672.85" y="13.02" width="440" height="0.51" fill="#72ccb8" opacity="0.8" class="a"/><rect x="1661.4" y="13.02" width="660.97" height="0.51" fill="#72ccb8" opacity="0.8" class="a"/><rect x="672.85" y="13.63" width="440" height="0.51" fill="#72ccb8" opacity="0.8" class="a"/><rect x="1661.4" y="13.63" width="660.97" height="0.51" fill="#72ccb8" opacity="0.8" class="a"/><rect x="672.85" y="14.23" width="440" height="0.51" fill="#72ccb8" opacity="0.8" class="a"/><rect x="1661.4" y="14.23" width="660.97" height="0.51" fill="#72ccb8" opacity="0.8" class="a"/><rect x="122.36" y="14.84" width="440" height="0.51" fill="#72ccb8" opacity="0.8" class="a"/><rect x="672.85" y="14.84" width="219.03" height="0.51" fill="#72ccb8" opacity="0.8" class="a"/><rect x="891.88" y="14.84" width="220.97" height="0.51" fill="#72ccb8" opacity="0.8" class="a"/><rect x="1221.4" y="14.84" width="550.49" height="0.51" fill="#72ccb8" opacity="0.8" class="a"/><rect x="1771.88" y="14.84" width="550.49" height="0.51" fill="#72ccb8" opacity="0.8" class="a"/><rect x="11.88" y="15.44" width="329.52" height="0.51" fill="#72ccb8" opacity="0.8" class="a"/><rect x="341.4" y="15.44" width="220.97" height="0.51" fill="#72ccb8" opacity="0.8" class="a"/><rect x="341.4" y="15.44" width="220.97" height="0.51" fill="#72ccb8" opacity="0.8" class="a"/><rect x="672.85" y="15.44" width="102.73" height="0.51" fill="#72ccb8" opacity="0.8" class="a"/><rect x="781.4" y="15.44" width="331.45" height="0.51" fill="#72ccb8" opacity="0.8" class="a"/><rect x="1442.37" y="15.44" width="205.46" height="0.51" fill="#72ccb8" opacity="0.8" class="a"/><rect x="1661.4" y="15.44" width="104.67" height="0.51" fill="#72ccb8" opacity="0.8" class="a"/><rect x="1771.88" y="15.44" width="220.97" height="0.51" fill="#72ccb8" opacity="0.8" class="a"/><rect x="1992.85" y="15.44" width="329.52" height="0.51" fill="#72ccb8" opacity="0.8" class="a"/><rect x="11.88" y="15.44" width="329.52" height="0.51" fill="#72ccb8" opacity="0.8" class="a"/><rect x="341.4" y="15.44" width="220.97" height="0.51" fill="#72ccb8" opacity="0.8" class="a"/><rect x="672.85" y="15.44" width="102.73" height="0.51" fill="#72ccb8" opacity="0.8" class="a"/><rect x="781.4" y="15.44" width="331.45" height="0.51" fill="#72ccb8" opacity="0.8" class="a"/><rect x="1661.4" y="15.44" width="104.67" height="0.51" fill="#72ccb8" opacity="0.8" class="a"/><rect x="1771.88" y="15.44" width="220.97" height="0.51" fill="#72ccb8" opacity="0.8" class="a"/><rect x="1992.85" y="15.44" width="329.52" height="0.51" fill="#72ccb8" opacity="0.8" class="a"/><rect x="11.88" y="15.44" width="329.52" height="0.51" fill="#72ccb8" opacity="0.8" class="a"/><rect x="341.4" y="15.44" width="220.97" height="0.51" fill="#72ccb8" opacity="0.8" class="a"/><rect x="672.85" y="15.44" width="102.73" height="0.51" fill="#72ccb8" opacity="0.8" class="a"/><rect x="781.4" y="15.44" width="331.45" height="0.51" fill="#72ccb8" opacity="0.8" class="a"/><rect x="1661.4" y="15.44" width="104.67" height="0.51" fill="#72ccb8" opacity="0.8" class="a"/><rect x="1771.88" y="15.44" width="220.97" height="0.51" fill="#72ccb8" opacity="0.8" class="a"/><rect x="1992.85" y="15.44" width="329.52" height="0.51" fill="#72ccb8" opacity="0.8" class="a"/><rect x="11.88" y="15.44" width="329.52" height="0.51" fill="#72ccb8" opacity="0.8" class="a"/><rect x="341.4" y="15.44" width="220.97" height="0.51" fill="#72ccb8" opacity="0.8" class="a"/><rect x="672.85" y="15.44" width="102.73" height="0.51" fill="#72ccb8" opacity="0.8" class="a"/><rect x="781.4" y="15.44" width="331.45" height="0.51" fill="#72ccb8" opacity="0.8" class="a"/><rect x="1442.37" y="15.44" width="205.46" height="0.51" fill="#72ccb8" opacity="0.8" class="a"/><rect x="1661.4" y="15.44" width="104.67" height="0.51" fill="#72ccb8" opacity="0.8" class="a"/><rect x="1771.88" y="15.44" width="220.97" height="0.51" fill="#72ccb8" opacity="0.8" class="a"/><rect x="1992.85" y="15.44" width="329.52" height="0.51" fill="#72ccb8" opacity="0.8" class="a"/><rect x="672.85" y="15.44" width="102.73" height="0.51" fill="#72ccb8" opacity="0.8" class="a"/><rect x="781.4" y="15.44" width="331.45" height="0.51" fill="#72ccb8" opacity="0.8" class="a"/><rect x="1442.37" y="15.44" width="205.46" height="0.51" fill="#72ccb8" opacity="0.8" class="a"/><rect x="1661.4" y="15.44" width="104.67" height="0.51" fill="#72ccb8" opacity="0.8" class="a"/><rect x="1771.88" y="15.44" width="220.97" height="0.51" fill="#72ccb8" opacity="0.8" class="a"/><rect x="1992.85" y="15.44" width="329.52" height="0.51" fill="#72ccb8" opacity="0.8" class="a"/><rect x="341.4" y="15.44" width="220.97" height="0.51" fill="#72ccb8" opacity="0.8" class="a"/><rect x="672.85" y="15.44" width="102.73" height="0.51" fill="#72ccb8" opacity="0.8" class="a"/><rect x="781.4" y="15.44" width="331.45" height="0.51" fill="#72ccb8" opacity="0.8" class="a"/><rect x="1661.4" y="15.44" width="104.67" height="0.51" fill="#72ccb8" opacity="0.8" class="a"/><rect x="1771.88" y="15.44" width="220.97" height="0.51" fill="#72ccb8" opacity="0.8" class="a"/><rect x="1992.85" y="15.44" width="108.55" height="0.51" fill="#72ccb8" opacity="0.8" class="a"/><rect x="672.85" y="15.44" width="102.73" height="0.51" fill="#72ccb8" opacity="0.8" class="a"/><rect x="781.4" y="15.44" width="331.45" height="0.51" fill="#72ccb8" opacity="0.8" class="a"/><rect x="1112.85" y="15.44" width="534.98" height="0.51" fill="#72ccb8" opacity="0.8" class="a"/><rect x="1661.4" y="15.44" width="104.67" height="0.51" fill="#72ccb8" opacity="0.8" class="a"/><rect x="1771.88" y="15.44" width="220.97" height="0.51" fill="#72ccb8" opacity="0.8" class="a"/><rect x="1992.85" y="15.44" width="329.52" height="0.51" fill="#72ccb8" opacity="0.8" class="a"/><rect x="341.4" y="15.44" width="220.97" height="0.51" fill="#72ccb8" opacity="0.8" class="a"/><rect x="672.85" y="15.44" width="102.73" height="0.51" fill="#72ccb8" opacity="0.8" class="a"/><rect x="781.4" y="15.44" width="331.45" height="0.51" fill="#72ccb8" opacity="0.8" class="a"/><rect x="1112.85" y="15.44" width="534.98" height="0.51" fill="#72ccb8" opacity="0.8" class="a"/><rect x="1661.4" y="15.44" width="104.67" height="0.51" fill="#72ccb8" opacity="0.8" class="a"/><rect x="1771.88" y="15.44" width="220.97" height="0.51" fill="#72ccb8" opacity="0.8" class="a"/><rect x="11.88" y="15.44" width="329.52" height="0.51" fill="#72ccb8" opacity="0.8" class="a"/><rect x="341.4" y="15.44" width="220.97" height="0.51" fill="#72ccb8" opacity="0.8" class="a"/><rect x="672.85" y="15.44" width="102.73" height="0.51" fill="#72ccb8" opacity="0.8" class="a"/><rect x="781.4" y="15.44" width="331.45" height="0.51" fill="#72ccb8" opacity="0.8" class="a"/><rect x="1112.85" y="15.44" width="534.98" height="0.51" fill="#72ccb8" opacity="0.8" class="a"/><rect x="1661.4" y="15.44" width="104.67" height="0.51" fill="#72ccb8" opacity="0.8" class="a"/><rect x="1771.88" y="15.44" width="220.97" height="0.51" fill="#72ccb8" opacity="0.8" class="a"/><rect x="341.4" y="15.44" width="220.97" height="0.51" fill="#72ccb8" opacity="0.8" class="a"/><rect x="672.85" y="15.44" width="102.73" height="0.51" fill="#72ccb8" opacity="0.8" class="a"/><rect x="781.4" y="15.44" width="331.45" height="0.51" fill="#72ccb8" opacity="0.8" class="a"/><rect x="1112.85" y="15.44" width="534.98" height="0.51" fill="#72ccb8" opacity="0.8" class="a"/><rect x="1661.4" y="15.44" width="104.67" height="0.51" fill="#72ccb8" opacity="0.8" class="a"/><rect x="1771.88" y="15.44" width="220.97" height="0.51" fill="#72ccb8" opacity="0.8" class="a"/><rect x="11.88" y="16.05" width="329.52" height="0.51" fill="#72ccb8" opacity="0.8" class="a"/><rect x="341.4" y="16.05" width="220.97" height="0.51" fill="#72ccb8" opacity="0.8" class="a"/><rect x="341.4" y="16.65" width="220.97" height="0.51" fill="#72ccb8" opacity="0.8" class="a"/><rect x="672.85" y="16.65" width="102.73" height="0.51" fill="#72ccb8" opacity="0.8" class="a"/><rect x="781.4" y="16.65" width="331.45" height="0.51" fill="#72ccb8" opacity="0.8" class="a"/><rect x="1442.37" y="16.65" width="205.46" height="0.51" fill="#72ccb8" opacity="0.8" class="a"/><rect x="1661.4" y="16.65" width="104.67" height="0.51" fill="#72ccb8" opacity="0.8" class="a"/><rect x="1771.88" y="16.65" width="220.97" height="0.51" fill="#72ccb8" opacity="0.8" class="a"/><rect x="1992.85" y="16.65" width="329.52" height="0.51" fill="#72ccb8" opacity="0.8" class="a"/><rect x="11.88" y="17.26" width="329.52" height="0.51" fill="#72ccb8" opacity="0.8" class="a"/><rect x="341.4" y="17.26" width="220.97" height="0.51" fill="#72ccb8" opacity="0.8" class="a"/><rect x="672.85" y="17.26" width="102.73" height="0.51" fill="#72ccb8" opacity="0.8" class="a"/><rect x="781.4" y="17.26" width="331.45" height="0.51" fill="#72ccb8" opacity="0.8" class="a"/><rect x="1661.4" y="17.26" width="104.67" height="0.51" fill="#72ccb8" opacity="0.8" class="a"/><rect x="1771.88" y="17.26" width="220.97" height="0.51" fill="#72ccb8" opacity="0.8" class="a"/><rect x="1992.85" y="17.26" width="329.52" height="0.51" fill="#72ccb8" opacity="0.8" class="a"/><rect x="11.88" y="17.86" width="329.52" height="0.51" fill="#72ccb8" opacity="0.8" class="a"/><rect x="341.4" y="17.86" width="220.97" height="0.51" fill="#72ccb8" opacity="0.8" class="a"/><rect x="672.85" y="17.86" width="102.73" height="0.51" fill="#72ccb8" opacity="0.8" class="a"/><rect x="781.4" y="17.86" width="331.45" height="0.51" fill="#72ccb8" opacity="0.8" class="a"/><rect x="1661.4" y="17.86" width="104.67" height="0.51" fill="#72ccb8" opacity="0.8" class="a"/><rect x="1771.88" y="17.86" width="220.97" height="0.51" fill="#72ccb8" opacity="0.8" class="a"/><rect x="1992.85" y="17.86" width="329.52" height="0.51" fill="#72ccb8" opacity="0.8" class="a"/><rect x="11.88" y="18.47" width="329.52" height="0.51" fill="#72ccb8" opacity="0.8" class="a"/><rect x="341.4" y="18.47" width="220.97" height="0.51" fill="#72ccb8" opacity="0.8" class="a"/><rect x="672.85" y="18.47" width="102.73" height="0.51" fill="#72ccb8" opacity="0.8" class="a"/><rect x="781.4" y="18.47" width="331.45" height="0.51" fill="#72ccb8" opacity="0.8" class="a"/><rect x="1442.37" y="18.47" width="205.46" height="0.51" fill="#72ccb8" opacity="0.8" class="a"/><rect x="1661.4" y="18.47" width="104.67" height="0.51" fill="#72ccb8" opacity="0.8" class="a"/><rect x="1771.88" y="18.47" width="220.97" height="0.51" fill="#72ccb8" opacity="0.8" class="a"/><rect x="1992.85" y="18.47" width="329.52" height="0.51" fill="#72ccb8" opacity="0.8" class="a"/><rect x="672.85" y="19.07" width="102.73" height="0.51" fill="#72ccb8" opacity="0.8" class="a"/><rect x="781.4" y="19.07" width="331.45" height="0.51" fill="#72ccb8" opacity="0.8" class="a"/><rect x="1442.37" y="19.07" width="205.46" height="0.51" fill="#72ccb8" opacity="0.8" class="a"/><rect x="1661.4" y="19.07" width="104.67" height="0.51" fill="#72ccb8" opacity="0.8" class="a"/><rect x="1771.88" y="19.07" width="220.97" height="0.51" fill="#72ccb8" opacity="0.8" class="a"/><rect x="1992.85" y="19.07" width="329.52" height="0.51" fill="#72ccb8" opacity="0.8" class="a"/><rect x="341.4" y="19.68" width="220.97" height="0.51" fill="#72ccb8" opacity="0.8" class="a"/><rect x="672.85" y="19.68" width="102.73" height="0.51" fill="#72ccb8" opacity="0.8" class="a"/><rect x="781.4" y="19.68" width="331.45" height="0.51" fill="#72ccb8" opacity="0.8" class="a"/><rect x="1661.4" y="19.68" width="104.67" height="0.51" fill="#72ccb8" opacity="0.8" class="a"/><rect x="1771.88" y="19.68" width="220.97" height="0.51" fill="#72ccb8" opacity="0.8" class="a"/><rect x="1992.85" y="19.68" width="108.55" height="0.51" fill="#72ccb8" opacity="0.8" class="a"/><rect x="672.85" y="20.28" width="102.73" height="0.51" fill="#72ccb8" opacity="0.8" class="a"/><rect x="781.4" y="20.28" width="331.45" height="0.51" fill="#72ccb8" opacity="0.8" class="a"/><rect x="1112.85" y="20.28" width="534.98" height="0.51" fill="#72ccb8" opacity="0.8" class="a"/><rect x="1661.4" y="20.28" width="104.67" height="0.51" fill="#72ccb8" opacity="0.8" class="a"/><rect x="1771.88" y="20.28" width="220.97" height="0.51" fill="#72ccb8" opacity="0.8" class="a"/><rect x="1992.85" y="20.28" width="329.52" height="0.51" fill="#72ccb8" opacity="0.8" class="a"/><rect x="341.4" y="20.89" width="220.97" height="0.51" fill="#72ccb8" opacity="0.8" class="a"/><rect x="672.85" y="20.89" width="102.73" height="0.51" fill="#72ccb8" opacity="0.8" class="a"/><rect x="781.4" y="20.89" width="331.45" height="0.51" fill="#72ccb8" opacity="0.8" class="a"/><rect x="1112.85" y="20.89" width="534.98" height="0.51" fill="#72ccb8" opacity="0.8" class="a"/><rect x="1661.4" y="20.89" width="104.67" height="0.51" fill="#72ccb8" opacity="0.8" class="a"/><rect x="1771.88" y="20.89" width="220.97" height="0.51" fill="#72ccb8" opacity="0.8" class="a"/><rect x="11.88" y="21.49" width="329.52" height="0.51" fill="#72ccb8" opacity="0.8" class="a"/><rect x="341.4" y="21.49" width="220.97" height="0.51" fill="#72ccb8" opacity="0.8" class="a"/><rect x="672.85" y="21.49" width="102.73" height="0.51" fill="#72ccb8" opacity="0.8" class="a"/><rect x="781.4" y="21.49" width="331.45" height="0.51" fill="#72ccb8" opacity="0.8" class="a"/><rect x="1112.85" y="21.49" width="534.98" height="0.51" fill="#72ccb8" opacity="0.8" class="a"/><rect x="1661.4" y="21.49" width="104.67" height="0.51" fill="#72ccb8" opacity="0.8" class="a"/><rect x="1771.88" y="21.49" width="220.97" height="0.51" fill="#72ccb8" opacity="0.8" class="a"/><rect x="341.4" y="22.1" width="220.97" height="0.51" fill="#72ccb8" opacity="0.8" class="a"/><rect x="672.85" y="22.1" width="102.73" height="0.51" fill="#72ccb8" opacity="0.8" class="a"/><rect x="781.4" y="22.1" width="331.45" height="0.51" fill="#72ccb8" opacity="0.8" class="a"/><rect x="1112.85" y="22.1" width="534.98" height="0.51" fill="#72ccb8" opacity="0.8" class="a"/><rect x="1661.4" y="22.1" width="104.67" height="0.51" fill="#72ccb8" opacity="0.8" class="a"/><rect x="1771.88" y="22.1" width="220.97" height="0.51" fill="#72ccb8" opacity="0.8" class="a"/><rect x="11.88" y="22.71" width="550.49" height="0.51" fill="#72ccb8" opacity="0.8" class="a"/><rect x="1112.85" y="22.71" width="534.98" height="0.51" fill="#72ccb8" opacity="0.8" class="a"/><rect x="1552.85" y="22.71" width="219.03" height="0.51" fill="#72ccb8" opacity="0.8" class="a"/><rect x="341.4" y="22.71" width="56.21" height="0.51" fill="#72ccb8" opacity="0.8" class="a"/><rect x="451.88" y="22.71" width="54.27" height="0.51" fill="#72ccb8" opacity="0.8" class="a"/><rect x="562.37" y="22.71" width="54.27" height="0.51" fill="#72ccb8" opacity="0.8" class="a"/><rect x="781.4" y="22.71" width="56.21" height="0.51" fill="#72ccb8" opacity="0.8" class="a"/><rect x="891.88" y="22.71" width="54.27" height="0.51" fill="#72ccb8" opacity="0.8" class="a"/><rect x="1002.37" y="22.71" width="54.27" height="0.51" fill="#72ccb8" opacity="0.8" class="a"/><rect x="1112.85" y="22.71" width="54.27" height="0.51" fill="#72ccb8" opacity="0.8" class="a"/><rect x="1221.4" y="22.71" width="56.21" height="0.51" fill="#72ccb8" opacity="0.8" class="a"/><rect x="1552.85" y="22.71" width="54.27" height="0.51" fill="#72ccb8" opacity="0.8" class="a"/><rect x="1771.88" y="22.71" width="54.27" height="0.51" fill="#72ccb8" opacity="0.8" class="a"/><rect x="368.53" y="22.71" width="83.35" height="0.51" fill="#72ccb8" opacity="0.8" class="a"/><rect x="479.02" y="22.71" width="83.35" height="0.51" fill="#72ccb8" opacity="0.8" class="a"/><rect x="810.47" y="22.71" width="81.41" height="0.51" fill="#72ccb8" opacity="0.8" class="a"/><rect x="920.96" y="22.71" width="81.41" height="0.51" fill="#72ccb8" opacity="0.8" class="a"/><rect x="1141.93" y="22.71" width="79.47" height="0.51" fill="#72ccb8" opacity="0.8" class="a"/><rect x="1552.85" y="22.71" width="219.03" height="0.51" fill="#72ccb8" opacity="0.8" class="a"/><rect x="2021.93" y="22.71" width="300.44" height="0.51" fill="#72ccb8" opacity="0.8" class="a"/><rect x="232.85" y="22.71" width="443.88" height="0.51" fill="#72ccb8" opacity="0.8" class="a"/><rect x="781.4" y="22.71" width="110.48" height="0.51" fill="#72ccb8" opacity="0.8" class="a"/><rect x="1002.37" y="22.71" width="110.48" height="0.51" fill="#72ccb8" opacity="0.8" class="a"/><rect x="1826.16" y="22.71" width="496.21" height="0.51" fill="#72ccb8" opacity="0.8" class="a"/><rect x="11.88" y="22.71" width="653.22" height="0.51" fill="#72ccb8" opacity="0.8" class="a"/><rect x="672.85" y="22.71" width="108.55" height="0.51" fill="#72ccb8" opacity="0.8" class="a"/><rect x="1002.37" y="22.71" width="110.48" height="0.51" fill="#72ccb8" opacity="0.8" class="a"/><rect x="1221.4" y="22.71" width="426.43" height="0.51" fill="#72ccb8" opacity="0.8" class="a"/><rect x="1661.4" y="22.71" width="440" height="0.51" fill="#72ccb8" opacity="0.8" class="a"/><rect x="11.88" y="22.71" width="653.22" height="0.51" fill="#72ccb8" opacity="0.8" class="a"/><rect x="672.85" y="22.71" width="219.03" height="0.51" fill="#72ccb8" opacity="0.8" class="a"/><rect x="1002.37" y="22.71" width="329.52" height="0.51" fill="#72ccb8" opacity="0.8" class="a"/><rect x="1331.88" y="22.71" width="315.95" height="0.51" fill="#72ccb8" opacity="0.8" class="a"/><rect x="1661.4" y="22.71" width="358.59" height="0.51" fill="#72ccb8" opacity="0.8" class="a"/><rect x="451.88" y="22.71" width="213.22" height="0.51" fill="#72ccb8" opacity="0.8" class="a"/><rect x="672.85" y="22.71" width="108.55" height="0.51" fill="#72ccb8" opacity="0.8" class="a"/><rect x="1002.37" y="22.71" width="110.48" height="0.51" fill="#72ccb8" opacity="0.8" class="a"/><rect x="1552.85" y="22.71" width="94.98" height="0.51" fill="#72ccb8" opacity="0.8" class="a"/><rect x="1661.4" y="22.71" width="440" height="0.51" fill="#72ccb8" opacity="0.8" class="a"/><rect x="11.88" y="23.31" width="550.49" height="0.51" fill="#72ccb8" opacity="0.8" class="a"/><rect x="1112.85" y="23.31" width="534.98" height="0.51" fill="#72ccb8" opacity="0.8" class="a"/><rect x="1552.85" y="23.92" width="219.03" height="0.51" fill="#72ccb8" opacity="0.8" class="a"/><rect x="341.4" y="24.52" width="56.21" height="0.51" fill="#72ccb8" opacity="0.8" class="a"/><rect x="451.88" y="24.52" width="54.27" height="0.51" fill="#72ccb8" opacity="0.8" class="a"/><rect x="562.37" y="24.52" width="54.27" height="0.51" fill="#72ccb8" opacity="0.8" class="a"/><rect x="781.4" y="24.52" width="56.21" height="0.51" fill="#72ccb8" opacity="0.8" class="a"/><rect x="891.88" y="24.52" width="54.27" height="0.51" fill="#72ccb8" opacity="0.8" class="a"/><rect x="1002.37" y="24.52" width="54.27" height="0.51" fill="#72ccb8" opacity="0.8" class="a"/><rect x="1112.85" y="24.52" width="54.27" height="0.51" fill="#72ccb8" opacity="0.8" class="a"/><rect x="1221.4" y="24.52" width="56.21" height="0.51" fill="#72ccb8" opacity="0.8" class="a"/><rect x="1552.85" y="24.52" width="54.27" height="0.51" fill="#72ccb8" opacity="0.8" class="a"/><rect x="1771.88" y="24.52" width="54.27" height="0.51" fill="#72ccb8" opacity="0.8" class="a"/><rect x="368.53" y="25.13" width="83.35" height="0.51" fill="#72ccb8" opacity="0.8" class="a"/><rect x="479.02" y="25.13" width="83.35" height="0.51" fill="#72ccb8" opacity="0.8" class="a"/><rect x="810.47" y="25.13" width="81.41" height="0.51" fill="#72ccb8" opacity="0.8" class="a"/><rect x="920.96" y="25.13" width="81.41" height="0.51" fill="#72ccb8" opacity="0.8" class="a"/><rect x="1141.93" y="25.13" width="79.47" height="0.51" fill="#72ccb8" opacity="0.8" class="a"/><rect x="1552.85" y="25.13" width="219.03" height="0.51" fill="#72ccb8" opacity="0.8" class="a"/><rect x="2021.93" y="25.13" width="300.44" height="0.51" fill="#72ccb8" opacity="0.8" class="a"/><rect x="232.85" y="25.73" width="443.88" height="0.51" fill="#72ccb8" opacity="0.8" class="a"/><rect x="781.4" y="25.73" width="110.48" height="0.51" fill="#72ccb8" opacity="0.8" class="a"/><rect x="1002.37" y="25.73" width="110.48" height="0.51" fill="#72ccb8" opacity="0.8" class="a"/><rect x="1826.16" y="25.73" width="496.21" height="0.51" fill="#72ccb8" opacity="0.8" class="a"/><rect x="11.88" y="26.34" width="653.22" height="0.51" fill="#72ccb8" opacity="0.8" class="a"/><rect x="672.85" y="26.34" width="108.55" height="0.51" fill="#72ccb8" opacity="0.8" class="a"/><rect x="1002.37" y="26.34" width="110.48" height="0.51" fill="#72ccb8" opacity="0.8" class="a"/><rect x="1221.4" y="26.34" width="426.43" height="0.51" fill="#72ccb8" opacity="0.8" class="a"/><rect x="1661.4" y="26.34" width="440" height="0.51" fill="#72ccb8" opacity="0.8" class="a"/><rect x="11.88" y="26.94" width="653.22" height="0.51" fill="#72ccb8" opacity="0.8" class="a"/><rect x="672.85" y="26.94" width="219.03" height="0.51" fill="#72ccb8" opacity="0.8" class="a"/><rect x="1002.37" y="26.94" width="329.52" height="0.51" fill="#72ccb8" opacity="0.8" class="a"/><rect x="1331.88" y="26.94" width="315.95" height="0.51" fill="#72ccb8" opacity="0.8" class="a"/><rect x="1661.4" y="26.94" width="358.59" height="0.51" fill="#72ccb8" opacity="0.8" class="a"/><rect x="451.88" y="27.55" width="213.22" height="0.51" fill="#72ccb8" opacity="0.8" class="a"/><rect x="672.85" y="27.55" width="108.55" height="0.51" fill="#72ccb8" opacity="0.8" class="a"/><rect x="1002.37" y="27.55" width="110.48" height="0.51" fill="#72ccb8" opacity="0.8" class="a"/><rect x="1552.85" y="27.55" width="94.98" height="0.51" fill="#72ccb8" opacity="0.8" class="a"/><rect x="1661.4" y="27.55" width="440" height="0.51" fill="#72ccb8" opacity="0.8" class="a"/><rect x="651.53" y="28.15" width="27.33" height="0.51" fill="#72ccb8" opacity="0.8" class="a"/><rect x="762.01" y="28.15" width="27.23" height="0.51" fill="#72ccb8" opacity="0.8" class="a"/><rect x="1642.6" y="28.15" width="26.56" height="0.51" fill="#72ccb8" opacity="0.8" class="a"/><rect x="1751.34" y="28.15" width="28.11" height="0.51" fill="#72ccb8" opacity="0.8" class="a"/><rect x="562.37" y="28.76" width="54.27" height="0.51" fill="#72ccb8" opacity="0.8" class="a"/><rect x="1112.85" y="28.76" width="54.27" height="0.51" fill="#72ccb8" opacity="0.8" class="a"/><rect x="1221.4" y="28.76" width="56.21" height="0.51" fill="#72ccb8" opacity="0.8" class="a"/><rect x="1331.88" y="28.76" width="54.27" height="0.51" fill="#72ccb8" opacity="0.8" class="a"/><rect x="562.37" y="28.76" width="27.14" height="0.51" fill="#72ccb8" opacity="0.8" class="a"/><rect x="1112.85" y="28.76" width="27.14" height="0.51" fill="#72ccb8" opacity="0.8" class="a"/><rect x="1552.85" y="28.76" width="108.55" height="0.51" fill="#72ccb8" opacity="0.8" class="a"/><rect x="232.85" y="28.76" width="108.55" height="0.51" fill="#72ccb8" opacity="0.8" class="a"/><rect x="451.88" y="28.76" width="329.52" height="0.51" fill="#72ccb8" opacity="0.8" class="a"/><rect x="1002.37" y="28.76" width="219.03" height="0.51" fill="#72ccb8" opacity="0.8" class="a"/><rect x="1442.37" y="28.76" width="219.03" height="0.51" fill="#72ccb8" opacity="0.8" class="a"/><rect x="1882.37" y="28.76" width="110.48" height="0.51" fill="#72ccb8" opacity="0.8" class="a"/><rect x="341.4" y="28.76" width="56.21" height="0.51" fill="#72ccb8" opacity="0.8" class="a"/><rect x="562.37" y="28.76" width="54.27" height="0.51" fill="#72ccb8" opacity="0.8" class="a"/><rect x="891.88" y="28.76" width="54.27" height="0.51" fill="#72ccb8" opacity="0.8" class="a"/><rect x="1112.85" y="28.76" width="54.27" height="0.51" fill="#72ccb8" opacity="0.8" class="a"/><rect x="1661.4" y="28.76" width="56.21" height="0.51" fill="#72ccb8" opacity="0.8" class="a"/><rect x="1992.85" y="28.76" width="54.27" height="0.51" fill="#72ccb8" opacity="0.8" class="a"/><rect x="643.78" y="28.76" width="56.21" height="0.51" fill="#72ccb8" opacity="0.8" class="a"/><rect x="754.26" y="28.76" width="54.27" height="0.51" fill="#72ccb8" opacity="0.8" class="a"/><rect x="1083.78" y="28.76" width="56.21" height="0.51" fill="#72ccb8" opacity="0.8" class="a"/><rect x="1194.26" y="28.76" width="54.27" height="0.51" fill="#72ccb8" opacity="0.8" class="a"/><rect x="1634.26" y="28.76" width="54.27" height="0.51" fill="#72ccb8" opacity="0.8" class="a"/><rect x="1744.75" y="28.76" width="54.27" height="0.51" fill="#72ccb8" opacity="0.8" class="a"/><rect x="1963.78" y="28.76" width="56.21" height="0.51" fill="#72ccb8" opacity="0.8" class="a"/><rect x="672.85" y="28.76" width="54.27" height="0.51" fill="#72ccb8" opacity="0.8" class="a"/><rect x="1112.85" y="28.76" width="54.27" height="0.51" fill="#72ccb8" opacity="0.8" class="a"/><rect x="1221.4" y="28.76" width="56.21" height="0.51" fill="#72ccb8" opacity="0.8" class="a"/><rect x="1661.4" y="28.76" width="56.21" height="0.51" fill="#72ccb8" opacity="0.8" class="a"/><rect x="1992.85" y="28.76" width="54.27" height="0.51" fill="#72ccb8" opacity="0.8" class="a"/><rect x="562.37" y="29.36" width="54.27" height="0.51" fill="#72ccb8" opacity="0.8" class="a"/><rect x="1112.85" y="29.36" width="54.27" height="0.51" fill="#72ccb8" opacity="0.8" class="a"/><rect x="1221.4" y="29.36" width="56.21" height="0.51" fill="#72ccb8" opacity="0.8" class="a"/><rect x="1331.88" y="29.36" width="54.27" height="0.51" fill="#72ccb8" opacity="0.8" class="a"/><rect x="562.37" y="29.97" width="27.14" height="0.51" fill="#72ccb8" opacity="0.8" class="a"/><rect x="1112.85" y="29.97" width="27.14" height="0.51" fill="#72ccb8" opacity="0.8" class="a"/><rect x="1552.85" y="30.57" width="108.55" height="0.51" fill="#72ccb8" opacity="0.8" class="a"/><rect x="232.85" y="31.18" width="108.55" height="0.51" fill="#72ccb8" opacity="0.8" class="a"/><rect x="451.88" y="31.18" width="329.52" height="0.51" fill="#72ccb8" opacity="0.8" class="a"/><rect x="1002.37" y="31.18" width="219.03" height="0.51" fill="#72ccb8" opacity="0.8" class="a"/><rect x="1442.37" y="31.18" width="219.03" height="0.51" fill="#72ccb8" opacity="0.8" class="a"/><rect x="1882.37" y="31.18" width="110.48" height="0.51" fill="#72ccb8" opacity="0.8" class="a"/><rect x="341.4" y="31.78" width="56.21" height="0.51" fill="#72ccb8" opacity="0.8" class="a"/><rect x="562.37" y="31.78" width="54.27" height="0.51" fill="#72ccb8" opacity="0.8" class="a"/><rect x="891.88" y="31.78" width="54.27" height="0.51" fill="#72ccb8" opacity="0.8" class="a"/><rect x="1112.85" y="31.78" width="54.27" height="0.51" fill="#72ccb8" opacity="0.8" class="a"/><rect x="1661.4" y="31.78" width="56.21" height="0.51" fill="#72ccb8" opacity="0.8" class="a"/><rect x="1992.85" y="31.78" width="54.27" height="0.51" fill="#72ccb8" opacity="0.8" class="a"/><rect x="643.78" y="32.39" width="56.21" height="0.51" fill="#72ccb8" opacity="0.8" class="a"/><rect x="754.26" y="32.39" width="54.27" height="0.51" fill="#72ccb8" opacity="0.8" class="a"/><rect x="1083.78" y="32.39" width="56.21" height="0.51" fill="#72ccb8" opacity="0.8" class="a"/><rect x="1194.26" y="32.39" width="54.27" height="0.51" fill="#72ccb8" opacity="0.8" class="a"/><rect x="1634.26" y="32.39" width="54.27" height="0.51" fill="#72ccb8" opacity="0.8" class="a"/><rect x="1744.75" y="32.39" width="54.27" height="0.51" fill="#72ccb8" opacity="0.8" class="a"/><rect x="1963.78" y="32.39" width="56.21" height="0.51" fill="#72ccb8" opacity="0.8" class="a"/><rect x="672.85" y="32.99" width="54.27" height="0.51" fill="#72ccb8" opacity="0.8" class="a"/><rect x="1112.85" y="32.99" width="54.27" height="0.51" fill="#72ccb8" opacity="0.8" class="a"/><rect x="1221.4" y="32.99" width="56.21" height="0.51" fill="#72ccb8" opacity="0.8" class="a"/><rect x="1661.4" y="32.99" width="56.21" height="0.51" fill="#72ccb8" opacity="0.8" class="a"/><rect x="1992.85" y="32.99" width="54.27" height="0.51" fill="#72ccb8" opacity="0.8" class="a"/><rect x="231.3" y="10" width="1.4" height="24" fill="#8a8a8a" opacity="0.7" class="a"/><rect x="341.3" y="10" width="1.4" height="24" fill="#8a8a8a" opacity="0.7" class="a"/><rect x="561.3" y="10" width="1.4" height="24" fill="#8a8a8a" opacity="0.7" class="a"/><rect x="671.3" y="10" width="1.4" height="24" fill="#8a8a8a" opacity="0.7" class="a"/><rect x="1111.3" y="10" width="1.4" height="24" fill="#8a8a8a" opacity="0.7" class="a"/><rect x="1661.3" y="10" width="1.4" height="24" fill="#8a8a8a" opacity="0.7" class="a"/><rect x="1991.3" y="10" width="1.4" height="24" fill="#8a8a8a" opacity="0.7" class="a"/><rect x="2412" y="38" width="206" height="86" fill="#353535"/><rect x="2412" y="124" width="206" height="1304" fill="#222222"/><rect x="2612" y="124" width="6" height="1304" fill="#2a2a2a"/><rect x="2416" y="128" width="196" height="12" fill="#92fde8"/><rect x="2416" y="140" width="8" height="76" fill="#92fde8"/><rect x="2426" y="144" width="186" height="34" fill="#b9dfea"/><circle cx="2443" cy="161" r="11.8" fill="none" stroke="#000" stroke-width="1.9"/><path d="M2439 154 L2450 161 L2439 168 Z" fill="#000"/><text x="2463" y="168" font-size="19" fill="#000" font-weight="bold" letter-spacing="0.65">2 Vocal</text><rect x="2426" y="182" width="186" height="34" fill="#5a91e2"/><circle cx="2443" cy="199" r="11.8" fill="none" stroke="#b5b5b5" stroke-width="1.9"/><path d="M2439 192 L2450 199 L2439 206 Z" fill="#b5b5b5"/><text x="2463" y="206" font-size="19" fill="#b5b5b5" font-weight="bold" letter-spacing="0.65">3 Vocal</text><rect x="2416" y="220" width="196" height="70" fill="#5a91e2"/><circle cx="2433" cy="237" r="11.8" fill="none" stroke="#b5b5b5" stroke-width="1.9"/><path d="M2426 233.5 L2440 233.5 L2433 244 Z" fill="#b5b5b5"/><text x="2453" y="244" font-size="19" fill="#b5b5b5" font-weight="bold" letter-spacing="0.65">4 Kick</text><rect x="2416" y="294" width="196" height="68" fill="#92fde8"/><circle cx="2433" cy="311" r="11.8" fill="none" stroke="#1d3a36" stroke-width="1.9"/><rect x="2427" y="305" width="12" height="2" fill="#1d3a36"/><rect x="2427" y="310" width="12" height="2" fill="#1d3a36"/><rect x="2427" y="315" width="12" height="2" fill="#1d3a36"/><text x="2453" y="318" font-size="19" fill="#1d3a36" font-weight="bold" letter-spacing="0.65">5 Tom Group</text><rect x="2416" y="366" width="196" height="70" fill="#5a91e2"/><circle cx="2433" cy="383" r="11.8" fill="none" stroke="#b5b5b5" stroke-width="1.9"/><path d="M2426 379.5 L2440 379.5 L2433 390 Z" fill="#b5b5b5"/><text x="2453" y="390" font-size="19" fill="#b5b5b5" font-weight="bold" letter-spacing="0.65">8 Lead Sub</text><rect x="2416" y="440" width="196" height="68" fill="#92fde8"/><circle cx="2433" cy="457" r="11.8" fill="none" stroke="#1d3a36" stroke-width="1.9"/><rect x="2427" y="451" width="12" height="2" fill="#1d3a36"/><rect x="2427" y="456" width="12" height="2" fill="#1d3a36"/><rect x="2427" y="461" width="12" height="2" fill="#1d3a36"/><text x="2453" y="464" font-size="19" fill="#1d3a36" font-weight="bold" letter-spacing="0.65">9 Drums Group</text><rect x="2416" y="512" width="196" height="104" fill="#92fde8"/><circle cx="2433" cy="529" r="11.8" fill="none" stroke="#1d3a36" stroke-width="1.9"/><rect x="2425" y="523" width="12" height="2" fill="#1d3a36"/><rect x="2430" y="528" width="10" height="2" fill="#1d3a36"/><rect x="2430" y="533" width="10" height="2" fill="#1d3a36"/><text x="2453" y="536" font-size="19" fill="#1d3a36" font-weight="bold" letter-spacing="0.65">21 Harmoni Gro</text><rect x="2416" y="616" width="8" height="592" fill="#92fde8"/><rect x="2426" y="620" width="186" height="70" fill="#5a91e2"/><circle cx="2443" cy="637" r="11.8" fill="none" stroke="#b5b5b5" stroke-width="1.9"/><path d="M2436 633.5 L2450 633.5 L2443 644 Z" fill="#b5b5b5"/><text x="2463" y="644" font-size="19" fill="#b5b5b5" font-weight="bold" letter-spacing="0.65">22 Pad</text><rect x="2426" y="694" width="186" height="70" fill="#5a91e2"/><circle cx="2443" cy="711" r="11.8" fill="none" stroke="#b5b5b5" stroke-width="1.9"/><path d="M2436 707.5 L2450 707.5 L2443 718 Z" fill="#b5b5b5"/><text x="2463" y="718" font-size="19" fill="#b5b5b5" font-weight="bold" letter-spacing="0.65">23 Lead Ambie</text><rect x="2426" y="768" width="186" height="70" fill="#5a91e2"/><circle cx="2443" cy="785" r="11.8" fill="none" stroke="#b5b5b5" stroke-width="1.9"/><path d="M2436 781.5 L2450 781.5 L2443 792 Z" fill="#b5b5b5"/><text x="2463" y="792" font-size="19" fill="#b5b5b5" font-weight="bold" letter-spacing="0.65">24 Lead</text><rect x="2426" y="842" width="186" height="70" fill="#5a91e2"/><circle cx="2443" cy="859" r="11.8" fill="none" stroke="#b5b5b5" stroke-width="1.9"/><path d="M2436 855.5 L2450 855.5 L2443 866 Z" fill="#b5b5b5"/><text x="2463" y="866" font-size="19" fill="#b5b5b5" font-weight="bold" letter-spacing="0.65">25 Arp - Guitar</text><rect x="2426" y="916" width="186" height="70" fill="#5a91e2"/><circle cx="2443" cy="933" r="11.8" fill="none" stroke="#b5b5b5" stroke-width="1.9"/><path d="M2436 929.5 L2450 929.5 L2443 940 Z" fill="#b5b5b5"/><text x="2463" y="940" font-size="19" fill="#b5b5b5" font-weight="bold" letter-spacing="0.65">26 Horns</text><rect x="2426" y="990" width="186" height="70" fill="#5a91e2"/><circle cx="2443" cy="1007" r="11.8" fill="none" stroke="#b5b5b5" stroke-width="1.9"/><path d="M2436 1003.5 L2450 1003.5 L2443 1014 Z" fill="#b5b5b5"/><text x="2463" y="1014" font-size="19" fill="#b5b5b5" font-weight="bold" letter-spacing="0.65">27 Pluck</text><rect x="2426" y="1064" width="186" height="70" fill="#5a91e2"/><circle cx="2443" cy="1081" r="11.8" fill="none" stroke="#b5b5b5" stroke-width="1.9"/><path d="M2436 1077.5 L2450 1077.5 L2443 1088 Z" fill="#b5b5b5"/><text x="2463" y="1088" font-size="19" fill="#b5b5b5" font-weight="bold" letter-spacing="0.65">28 Piano</text><rect x="2426" y="1138" width="186" height="70" fill="#5a91e2"/><circle cx="2443" cy="1155" r="11.8" fill="none" stroke="#b5b5b5" stroke-width="1.9"/><path d="M2436 1151.5 L2450 1151.5 L2443 1162 Z" fill="#b5b5b5"/><text x="2463" y="1162" font-size="19" fill="#b5b5b5" font-weight="bold" letter-spacing="0.65">29 Pluck</text><rect x="2438" y="890" width="10" height="1.6" fill="#b5b5b5"/><rect x="2438" y="894" width="10" height="1.6" fill="#b5b5b5"/><rect x="2438" y="898" width="10" height="1.6" fill="#b5b5b5"/><rect x="2438" y="1038" width="10" height="1.6" fill="#b5b5b5"/><rect x="2438" y="1042" width="10" height="1.6" fill="#b5b5b5"/><rect x="2438" y="1046" width="10" height="1.6" fill="#b5b5b5"/><rect x="2416" y="1212" width="196" height="70" fill="#92fde8"/><circle cx="2433" cy="1229" r="11.8" fill="none" stroke="#1d3a36" stroke-width="1.9"/><path d="M2426 1225.5 L2440 1225.5 L2433 1236 Z" fill="#1d3a36"/><text x="2453" y="1236" font-size="19" fill="#1d3a36" font-weight="bold" letter-spacing="0.65">30 Conga Fill</text><rect x="2416" y="1286" width="196" height="68" fill="#92fde8"/><circle cx="2433" cy="1303" r="11.8" fill="none" stroke="#1d3a36" stroke-width="1.9"/><rect x="2427" y="1297" width="12" height="2" fill="#1d3a36"/><rect x="2427" y="1302" width="12" height="2" fill="#1d3a36"/><rect x="2427" y="1307" width="12" height="2" fill="#1d3a36"/><text x="2453" y="1310" font-size="19" fill="#1d3a36" font-weight="bold" letter-spacing="0.65">31 Fx Group</text><rect x="2416" y="1358" width="196" height="26" fill="#353535"/><rect x="2416" y="1390" width="196" height="34" fill="#92fde8"/><circle cx="2433" cy="1407" r="11.8" fill="none" stroke="#1d3a36" stroke-width="1.9"/><path d="M2429 1400 L2440 1407 L2429 1414 Z" fill="#1d3a36"/><text x="2457" y="1414" font-size="19" fill="#1d3a36" font-weight="bold" letter-spacing="0.65">Main</text><rect class="a" x="2422.5" y="54.5" width="57" height="25" rx="12.5" fill="#1e1e1e" stroke="#181818" stroke-width="1.5"/><text x="2451" y="74" font-size="19" fill="#c4c4c4" font-weight="bold" text-anchor="middle" letter-spacing="0.3">Del</text><rect x="2502.5" y="54.5" width="45" height="25" fill="#1e1e1e" stroke="#181818" stroke-width="1.5"/><path d="M2519.5 71.5 L2530.5 62" stroke="#c4c4c4" stroke-width="1.8"/><circle cx="2519.5" cy="71.5" r="3.2" fill="#c4c4c4"/><circle cx="2530.5" cy="62" r="3.2" fill="#c4c4c4"/><rect x="2556.5" y="54.5" width="45" height="25" fill="#da714e" stroke="#181818" stroke-width="1.5"/><rect x="2572" y="66" width="14" height="9" fill="#0a0a0a"/><path d="M2575 66 V63.5 a4 4 0 0 1 8 0 V66" fill="none" stroke="#0a0a0a" stroke-width="2"/><circle cx="2435" cy="103" r="12" fill="#1e1e1e" stroke="#181818" stroke-width="1.5"/><circle cx="2467" cy="103" r="12" fill="#1e1e1e" stroke="#181818" stroke-width="1.5"/><path d="M2441 103 H2434" stroke="#6e6e6e" stroke-width="2"/><path d="M2435 98 L2428 103 L2435 108 Z" fill="#6e6e6e"/><path d="M2461 103 H2468" stroke="#c4c4c4" stroke-width="2"/><path d="M2467 98 L2474 103 L2467 108 Z" fill="#c4c4c4"/><rect x="2412" y="1428" width="206" height="42" fill="#353535"/><rect x="2417.5" y="1437.5" width="27" height="23.5" fill="#f5b160" stroke="#181818" stroke-width="1"/><rect x="2421.6" y="1446.7" width="1.8" height="5" fill="#1a1a1a"/><rect x="2425.6" y="1443.2" width="1.8" height="12" fill="#1a1a1a"/><rect x="2430.1" y="1440.2" width="1.8" height="18" fill="#1a1a1a"/><rect x="2434.6" y="1443.2" width="1.8" height="12" fill="#1a1a1a"/><rect x="2438.6" y="1446.7" width="1.8" height="5" fill="#1a1a1a"/><rect x="2452.5" y="1437.5" width="69" height="23.5" fill="#1e1e1e" stroke="#181818" stroke-width="1.5"/><rect x="2454" y="1439" width="20" height="20.5" fill="#2c748c"/><text x="2459" y="1456.5" font-size="20" fill="#b4b4b4" stroke="#b4b4b4" stroke-width="0.45" letter-spacing="0.4">1.00x</text><rect x="2544.5" y="1437.5" width="29" height="23.5" fill="#1e1e1e" stroke="#181818" stroke-width="1.5"/><text x="2559" y="1456.2" font-size="19" fill="#c4c4c4" stroke="#c4c4c4" stroke-width="0.45" text-anchor="middle">H</text><rect x="2580.5" y="1437.5" width="29" height="23.5" fill="#1e1e1e" stroke="#181818" stroke-width="1.5"/><text x="2595" y="1456.2" font-size="19" fill="#c4c4c4" stroke="#c4c4c4" stroke-width="0.45" text-anchor="middle">W</text></svg></body></html>
